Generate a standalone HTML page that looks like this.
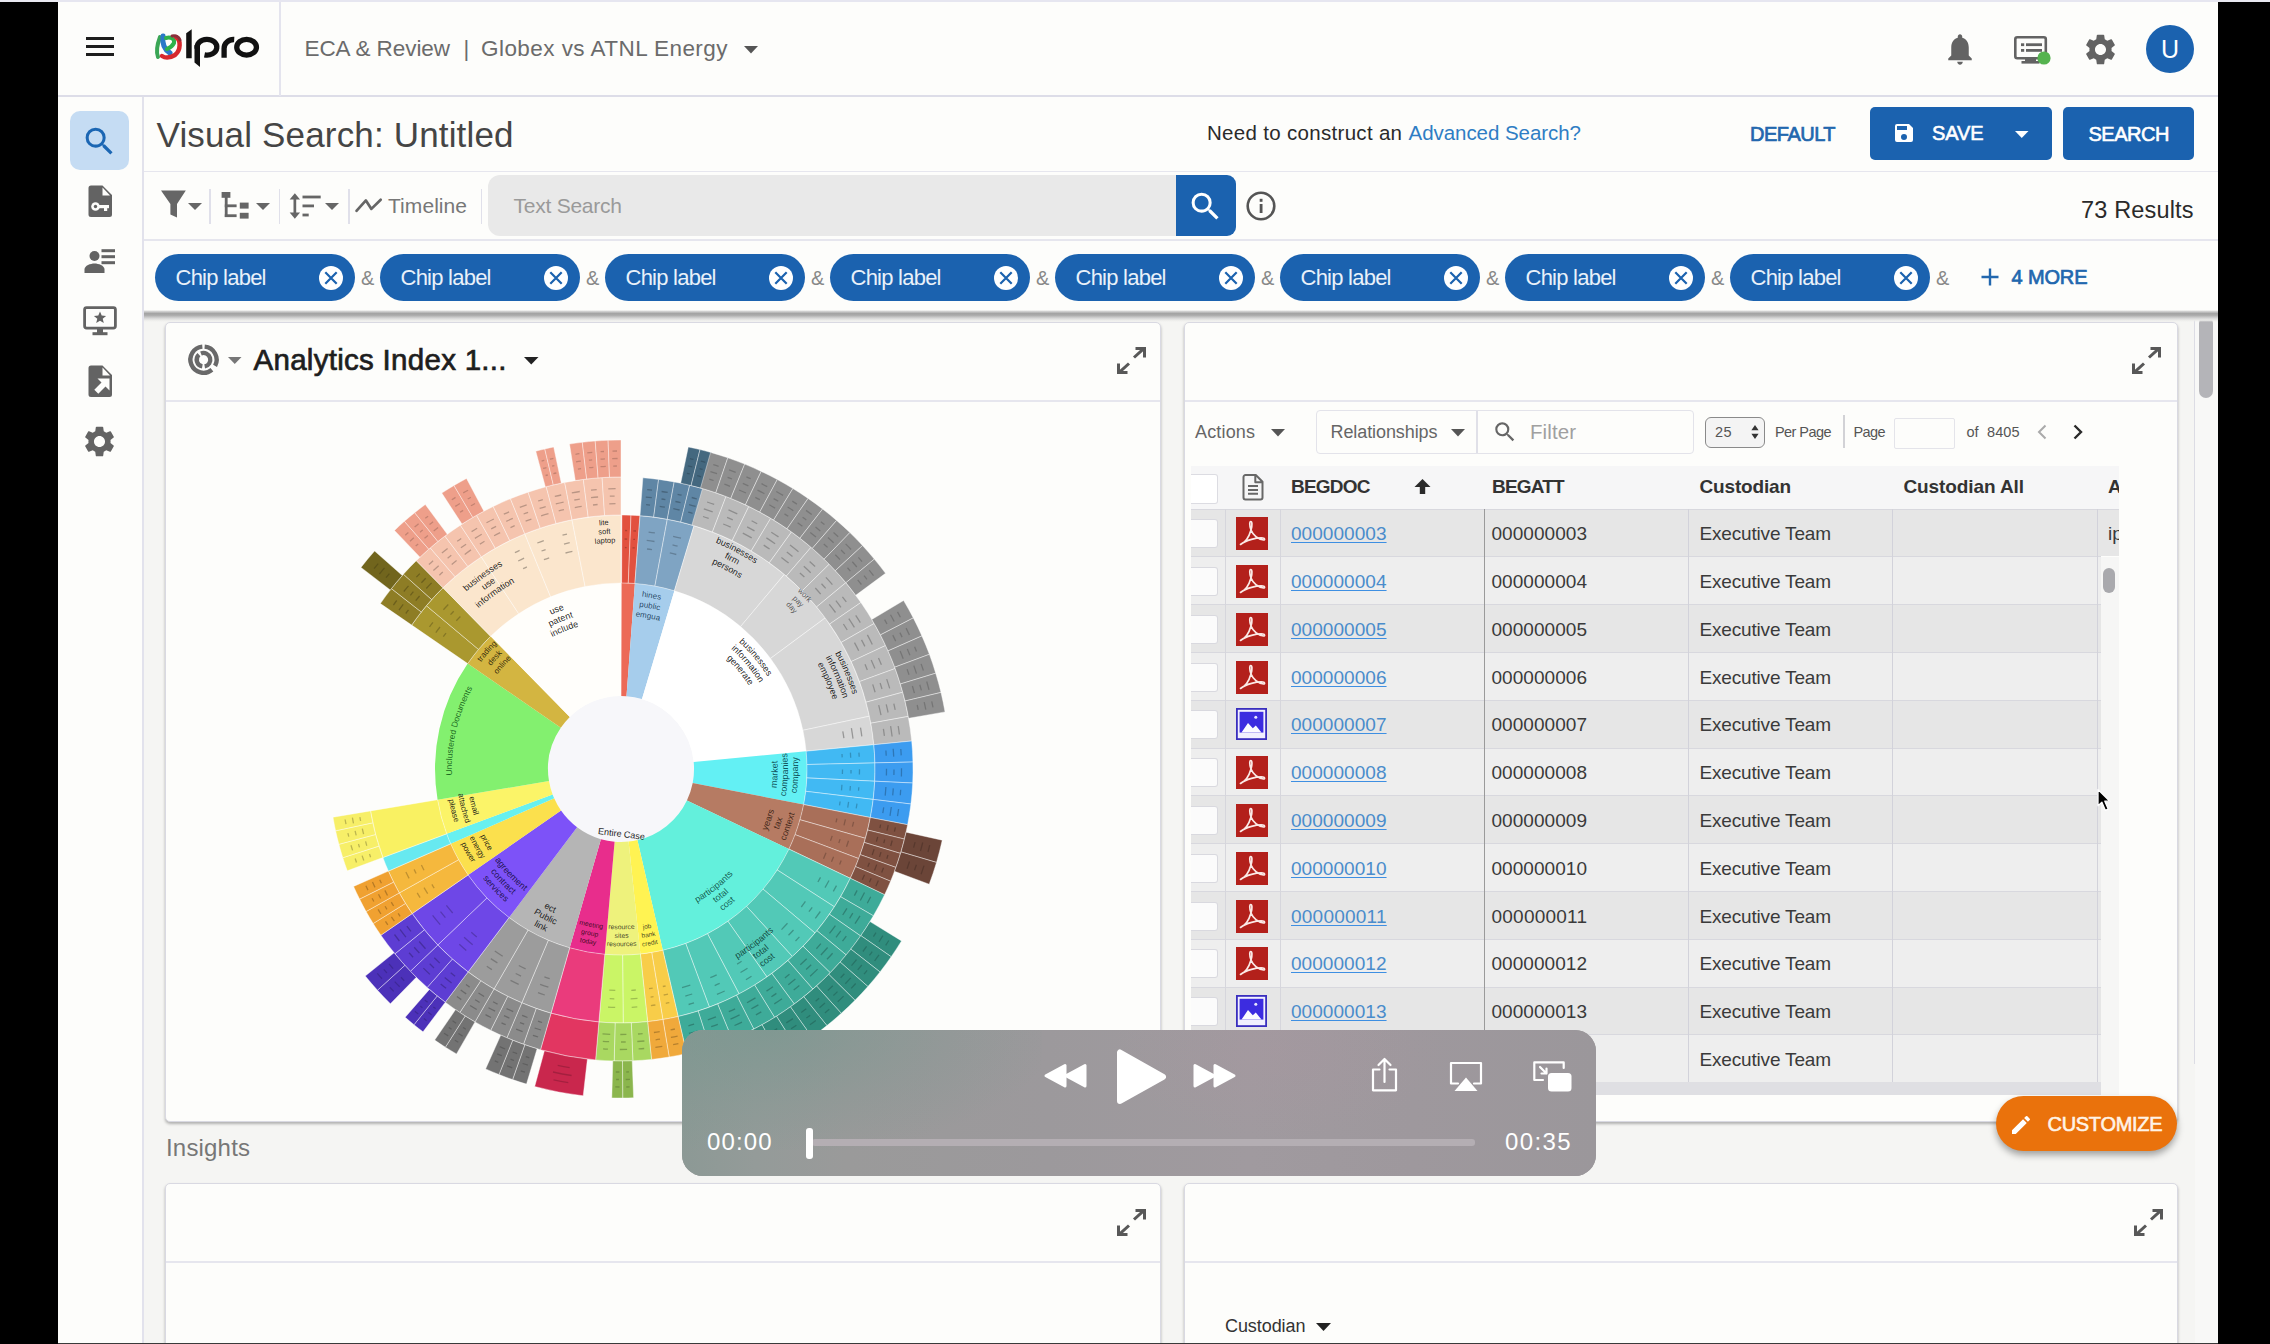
<!DOCTYPE html>
<html><head><meta charset="utf-8"><title>Visual Search</title>
<style>
html,body{margin:0;padding:0;overflow:hidden;width:2270px;height:1344px;}
body{width:2270px;height:1344px;overflow:hidden;background:#000;font-family:"Liberation Sans",sans-serif;position:relative;}
.t{position:absolute;white-space:nowrap;}
.a{position:absolute;}
svg{position:absolute;overflow:visible;}
</style></head><body>
<div id="root" style="position:absolute;left:0;top:0;width:2270px;height:1344px;overflow:hidden;background:#000">
<div class="a" style="left:0;top:0;width:2270px;height:2px;background:#e9e9f1"></div><div class="a" style="left:58px;top:0;width:2160px;height:1344px;background:#fdfdfb"></div><div class="a" style="left:58px;top:0;width:2160px;height:2px;background:#e6e6f0"></div><div class="a" style="left:143px;top:311px;width:2075px;height:1033px;background:#f5f5f3"></div><div class="a" style="left:2195px;top:311px;width:23px;height:1033px;background:#f8f8f7"></div><div class="a" style="left:2199px;top:316px;width:14px;height:82px;border-radius:7px;background:#b4b4b8"></div><div class="a" style="left:2193.700px;top:320px;width:1.500px;height:744px;background:#dcdce4"></div><div class="a" style="left:165px;top:322px;width:996px;height:800px;background:#fdfdfb;border:1px solid #d9d9e2;border-radius:5px;box-sizing:border-box;box-shadow:0 2px 3px rgba(0,0,0,.28)"></div><div class="a" style="left:166px;top:400px;width:994px;height:2px;background:#e6e6ee"></div><div class="a" style="left:1184px;top:322px;width:994px;height:800px;background:#fdfdfb;border:1px solid #d9d9e2;border-radius:5px;box-sizing:border-box;box-shadow:0 2px 3px rgba(0,0,0,.28)"></div><div class="a" style="left:1185px;top:400px;width:992px;height:2px;background:#e6e6ee"></div><div class="a" style="left:165px;top:1183px;width:996px;height:200px;background:#fdfdfb;border:1px solid #d9d9e2;border-radius:5px;box-sizing:border-box;box-shadow:0 2px 3px rgba(0,0,0,.28)"></div><div class="a" style="left:166px;top:1261px;width:994px;height:2px;background:#e6e6ee"></div><div class="a" style="left:1184px;top:1183px;width:994px;height:200px;background:#fdfdfb;border:1px solid #d9d9e2;border-radius:5px;box-sizing:border-box;box-shadow:0 2px 3px rgba(0,0,0,.28)"></div><div class="a" style="left:1185px;top:1261px;width:992px;height:2px;background:#e6e6ee"></div><svg style="left:1116.5px;top:346.5px" width="29" height="27" viewBox="0 0 29 27"><g stroke="#585858" stroke-width="3" fill="none" stroke-linecap="butt"><path d="M17 10.500 L26.500 1.800 M18.500 1.500 H27.500 V10.500"/><path d="M12 16.500 L2.500 25.200 M1.500 16.500 V25.500 H10.500"/></g></svg><svg style="left:2132.2px;top:346.5px" width="29" height="27" viewBox="0 0 29 27"><g stroke="#585858" stroke-width="3" fill="none" stroke-linecap="butt"><path d="M17 10.500 L26.500 1.800 M18.500 1.500 H27.500 V10.500"/><path d="M12 16.500 L2.500 25.200 M1.500 16.500 V25.500 H10.500"/></g></svg><svg style="left:1116.5px;top:1208.5px" width="29" height="27" viewBox="0 0 29 27"><g stroke="#585858" stroke-width="3" fill="none" stroke-linecap="butt"><path d="M17 10.500 L26.500 1.800 M18.500 1.500 H27.500 V10.500"/><path d="M12 16.500 L2.500 25.200 M1.500 16.500 V25.500 H10.500"/></g></svg><svg style="left:2133.5px;top:1208.5px" width="29" height="27" viewBox="0 0 29 27"><g stroke="#585858" stroke-width="3" fill="none" stroke-linecap="butt"><path d="M17 10.500 L26.500 1.800 M18.500 1.500 H27.500 V10.500"/><path d="M12 16.500 L2.500 25.200 M1.500 16.500 V25.500 H10.500"/></g></svg><div class="t" style="left:166.0px;top:1136.3px;font-size:24px;line-height:24px;color:#777;letter-spacing:0.185px;">Insights</div><div class="a" style="left:58px;top:95px;width:2160px;height:2px;background:#dddde8"></div><div class="a" style="left:279px;top:2px;width:2px;height:94px;background:#e4e4ee"></div><div class="a" style="left:86px;top:37px;width:28px;height:3px;background:#1d1d1d"></div><div class="a" style="left:86px;top:45px;width:28px;height:3px;background:#1d1d1d"></div><div class="a" style="left:86px;top:53px;width:28px;height:3px;background:#1d1d1d"></div><svg style="left:150px;top:24px" width="115" height="48" viewBox="150 24 115 48">
<g fill="none" stroke-linecap="round">
<path d="M160 37 C157 45 156 52 158 57" stroke="#3aa655" stroke-width="4"/>
<path d="M163 36 C162 44 165 50 170 53" stroke="#2a78c8" stroke-width="5"/>
<path d="M166 38 C170 37 175 38 174 43 C172 47 169 48 167 49" stroke="#2fb14a" stroke-width="4"/>
<path d="M176 37 C181 40 181 50 175 55 C170 58 165 58 162 56" stroke="#d6282d" stroke-width="4.5"/>
<path d="M172 36 C176 35 179 37 180 40" stroke="#8b2f3a" stroke-width="3"/>
</g>
<g fill="#111"><path d="M186.200 33.300L191.700 29.300V58.300H186.200Z"/><path d="M194.500 45V62.600L200 66.900V45Z"/></g>
<g fill="none" stroke="#111" stroke-width="5.300">
<path d="M197.250 48.500A9.850 7.900 0 1 1 204.500 54.850" stroke-linecap="butt"/>
<path d="M224.100 57.800V48.500A9.500 8.800 0 0 1 234.200 39.500" stroke-linecap="butt"/>
<ellipse cx="246.600" cy="47.200" rx="9.850" ry="7.900"/></g></svg><div class="t" style="left:304.5px;top:37.5px;font-size:22.5px;line-height:22.5px;color:#6b6b6b;letter-spacing:-0.073px;">ECA &amp; Review</div><div class="t" style="left:463.5px;top:37.8px;font-size:22px;line-height:22px;color:#6b6b6b;letter-spacing:-2.217px;">|</div><div class="t" style="left:481.0px;top:37.5px;font-size:22.5px;line-height:22.5px;color:#6b6b6b;letter-spacing:0.445px;">Globex vs ATNL Energy</div><svg style="left:744px;top:45.5px" width="14" height="7.5" viewBox="0 0 14 7.5"><path d="M0 0 H14 L7.0 7.5 Z" fill="#555"/></svg><svg style="left:1945px;top:30.600px" width="30" height="35.400" viewBox="0 0 24 26.4" preserveAspectRatio="none"><path fill="#636363" d="M12 25.2c1.2 0 2.2-1 2.2-2.2H9.8c0 1.2 1 2.2 2.2 2.2zM19 18.2V12.4c0-3.6-1.9-6.5-5.2-7.3V4.3C13.8 3.3 13 2.5 12 2.5s-1.8.8-1.8 1.8v.8C6.9 5.9 5 8.8 5 12.4v5.8L2.6 20.6v1.2h18.8v-1.2L19 18.2z"/></svg><svg style="left:2012px;top:34px" width="40" height="34" viewBox="0 0 40 34"><g fill="none" stroke="#636363" stroke-width="2.6"><rect x="3.3" y="3.3" width="30.5" height="21" rx="2"/></g>
<g fill="#636363"><rect x="13" y="24" width="11" height="4"/><rect x="9.5" y="27" width="18" height="2.6"/>
<rect x="9" y="9.300" width="3.200" height="2.800"/><rect x="14" y="9.300" width="16" height="2.800"/><rect x="9" y="15" width="3.200" height="2.800"/><rect x="14" y="15" width="16" height="2.800"/></g>
<circle cx="32" cy="24" r="6.6" fill="#55b34f"/></svg><svg style="left:2081.5px;top:31.0px" width="37" height="37" viewBox="0 0 24 24"><path fill="#636363" d="M19.14 12.94c.04-.3.06-.61.06-.94 0-.32-.02-.64-.07-.94l2.03-1.58a.49.49 0 0 0 .12-.61l-1.92-3.32a.488.488 0 0 0-.59-.22l-2.39.96c-.5-.38-1.03-.7-1.62-.94l-.36-2.54a.484.484 0 0 0-.48-.41h-3.84c-.24 0-.43.17-.47.41l-.36 2.54c-.59.24-1.13.57-1.62.94l-2.39-.96c-.22-.08-.47 0-.59.22L2.74 8.87c-.12.21-.08.47.12.61l2.03 1.58c-.05.3-.09.63-.09.94s.02.64.07.94l-2.03 1.58a.49.49 0 0 0-.12.61l1.92 3.32c.12.22.37.29.59.22l2.39-.96c.5.38 1.03.7 1.62.94l.36 2.54c.05.24.24.41.48.41h3.84c.24 0 .44-.17.47-.41l.36-2.54c.59-.24 1.13-.56 1.62-.94l2.39.96c.22.08.47 0 .59-.22l1.92-3.32c.12-.22.07-.47-.12-.61l-2.01-1.58zM12 15.6c-1.98 0-3.6-1.62-3.6-3.6s1.620-3.6 3.6-3.6 3.6 1.62 3.6 3.6-1.62 3.600-3.6 3.600z"/></svg><div class="a" style="left:2146px;top:25px;width:48px;height:48px;border-radius:50%;background:#1b62af"></div><div class="t" style="left:2161.0px;top:36.8px;font-size:25px;line-height:25px;color:#fff;letter-spacing:-0.055px;">U</div><div class="a" style="left:142px;top:97px;width:2px;height:1247px;background:#e2e2ec"></div><div class="a" style="left:70px;top:111px;width:59px;height:59px;border-radius:10px;background:#c5dcf3"></div><svg style="left:81.0px;top:122.5px" width="37" height="37" viewBox="0 0 24 24"><path fill="#1b66b3" d="M15.5 14h-.79l-.28-.27A6.471 6.471 0 0 0 16 9.5 6.5 6.500 0 1 0 9.5 16c1.61 0 3.090-.59 4.230-1.570l.270.280v.79l5 4.990L20.490 19l-4.990-5zm-6 0C7.010 14 5 11.990 5 9.500S7.010 5 9.500 5 14 7.010 14 9.500 11.990 14 9.500 14z"/></svg><svg style="left:86px;top:184px" width="28" height="34" viewBox="0 0 28 34"><path fill="#636363" d="M5 1.500h11.500L26 11v19.500a2.500 2.500 0 0 1-2.500 2.500h-18.500A2.500 2.500 0 0 1 2.500 30.500V4A2.500 2.500 0 0 1 5 1.500z"/><path fill="#fdfdfb" d="M16.500 3.500v8h7.500z"/>
<g fill="#fdfdfb"><circle cx="9.500" cy="22.500" r="4.300"/><rect x="12" y="21" width="11" height="3.200"/><rect x="18" y="23" width="3.200" height="4"/></g><circle cx="9.500" cy="22.500" r="1.700" fill="#636363"/></svg><svg style="left:84px;top:247px" width="32" height="28" viewBox="0 0 32 28"><g fill="#636363"><circle cx="10.500" cy="9" r="5"/><path d="M0.500 26v-3.500c0-4 6-6 10-6s10 2 10 6V26z"/>
<rect x="17.500" y="2.200" width="13.500" height="3"/><rect x="17.500" y="8.200" width="13.500" height="3"/><rect x="17.500" y="14.200" width="13.500" height="3"/></g></svg><svg style="left:82px;top:305px" width="36" height="32" viewBox="0 0 36 32"><rect x="2.600" y="2.600" width="30.800" height="20.500" rx="2" fill="none" stroke="#636363" stroke-width="2.800"/>
<g fill="#636363"><rect x="15" y="23" width="6" height="5"/><rect x="10.500" y="27.200" width="15" height="3"/><path d="M18 6.500l1.700 4.100 4.400.3-3.400 2.800 1.100 4.300L18 15.700 14.200 18l1.100-4.300-3.400-2.800 4.400-.3z"/></g></svg><svg style="left:86px;top:364px" width="28" height="34" viewBox="0 0 28 34"><path fill="#636363" d="M5 1.500h11.500L26 11v19.500a2.500 2.500 0 0 1-2.500 2.500h-18.500A2.500 2.500 0 0 1 2.500 30.500V4A2.500 2.500 0 0 1 5 1.500z"/><path fill="#fdfdfb" d="M16.500 3.500v8h7.500z"/>
<path fill="#fdfdfb" d="M11.500 14.500h12v12l-4-4-7.200 7.200-4-4 7.200-7.200z"/></svg><svg style="left:81.0px;top:422.5px" width="37" height="37" viewBox="0 0 24 24"><path fill="#636363" d="M19.14 12.94c.04-.3.06-.61.06-.94 0-.32-.02-.64-.07-.94l2.03-1.58a.49.49 0 0 0 .12-.61l-1.92-3.32a.488.488 0 0 0-.59-.22l-2.39.96c-.5-.38-1.03-.7-1.62-.94l-.36-2.54a.484.484 0 0 0-.48-.41h-3.84c-.24 0-.43.17-.47.41l-.36 2.54c-.59.24-1.13.57-1.62.94l-2.39-.96c-.22-.08-.47 0-.59.22L2.74 8.87c-.12.21-.08.47.12.61l2.03 1.58c-.05.3-.09.63-.09.94s.02.64.07.94l-2.03 1.58a.49.49 0 0 0-.12.61l1.92 3.32c.12.22.37.29.59.22l2.39-.96c.5.38 1.03.7 1.62.94l.36 2.54c.05.24.24.41.48.41h3.84c.24 0 .44-.17.47-.41l.36-2.54c.59-.24 1.13-.56 1.62-.94l2.39.96c.22.08.47 0 .59-.22l1.92-3.32c.12-.22.07-.47-.12-.61l-2.01-1.58zM12 15.6c-1.98 0-3.6-1.62-3.6-3.6s1.620-3.6 3.6-3.6 3.6 1.62 3.6 3.6-1.62 3.600-3.6 3.600z"/></svg><div class="a" style="left:144px;top:170.500px;width:2074px;height:1.500px;background:#e6e6ee"></div><div class="t" style="left:156.5px;top:116.9px;font-size:35px;line-height:35px;color:#454545;letter-spacing:0.163px;">Visual Search: Untitled</div><div class="t" style="left:1207.0px;top:123.0px;font-size:20.5px;line-height:20.5px;color:#2a2a2a;letter-spacing:0.308px;">Need to construct an </div><div class="t" style="left:1408.5px;top:123.0px;font-size:20.5px;line-height:20.5px;color:#2f7dc4;letter-spacing:-0.048px;">Advanced Search?</div><div class="t" style="left:1750.0px;top:123.7px;font-size:20px;line-height:20px;color:#2267ae;letter-spacing:-0.506px;-webkit-text-stroke:0.7px #2267ae;">DEFAULT</div><div class="a" style="left:1870px;top:107px;width:182px;height:53px;border-radius:5px;background:#1b62af"></div><div class="a" style="left:2063px;top:107px;width:131px;height:53px;border-radius:5px;background:#1b62af"></div><svg style="left:1892px;top:121px" width="24" height="24" viewBox="0 0 24 24"><path fill="#fff" d="M17 3H5a2 2 0 0 0-2 2v14a2 2 0 0 0 2 2h14a2 2 0 0 0 2-2V7l-4-4zm-5 16a3 3 0 1 1 0-6 3 3 0 0 1 0 6zm3-10H5V5h10v4z"/></svg><div class="t" style="left:1932.0px;top:123.2px;font-size:20px;line-height:20px;color:#fff;letter-spacing:-0.126px;-webkit-text-stroke:0.6px #fff;">SAVE</div><svg style="left:2014.5px;top:130.5px" width="13.5" height="7" viewBox="0 0 13.5 7"><path d="M0 0 H13.5 L6.75 7 Z" fill="#fff"/></svg><div class="t" style="left:2088.5px;top:123.7px;font-size:20px;line-height:20px;color:#fff;letter-spacing:-0.471px;-webkit-text-stroke:0.6px #fff;">SEARCH</div><div class="a" style="left:144px;top:239px;width:2074px;height:1.500px;background:#e6e6ee"></div><svg style="left:0;top:0" width="400" height="240" viewBox="0 0 400 240"><g fill="#666"><path d="M161 190.500h24.800l-8.800 13.400v13.700l-6.600-3v-10.700z"/><rect x="221.600" y="192" width="8.800" height="5.800"/><rect x="239.800" y="202.600" width="8.800" height="6"/><rect x="239.800" y="212.800" width="8.800" height="5.800"/><rect x="224.800" y="197" width="2.800" height="20"/><rect x="224.800" y="204.400" width="11.800" height="2.800"/><rect x="224.800" y="214.300" width="11.800" height="2.800"/><rect x="293.500" y="197" width="2.700" height="18"/><path d="M294.850 193.300l5.200 6.200h-10.400zM294.850 218.800l5.200-6.200h-10.400z"/><rect x="302.500" y="195.600" width="18.200" height="2.800"/><rect x="302.500" y="204.500" width="11.500" height="2.800"/><rect x="302.500" y="213.600" width="6.200" height="2.800"/></g><path d="M356.500 210.800L365.900 200.400L371.400 208.900L380.700 199.800" fill="none" stroke="#666" stroke-width="2.700" stroke-linejoin="round" stroke-linecap="round"/></svg><svg style="left:187.5px;top:202.8px" width="14" height="7" viewBox="0 0 14 7"><path d="M0 0 H14 L7.0 7 Z" fill="#666"/></svg><svg style="left:256.3px;top:202.8px" width="14" height="7" viewBox="0 0 14 7"><path d="M0 0 H14 L7.0 7 Z" fill="#666"/></svg><svg style="left:324.7px;top:202.8px" width="14" height="7" viewBox="0 0 14 7"><path d="M0 0 H14 L7.0 7 Z" fill="#666"/></svg><div class="a" style="left:209.3px;top:189px;width:1.500px;height:35px;background:#e0e0ea"></div><div class="a" style="left:278.7px;top:189px;width:1.500px;height:35px;background:#e0e0ea"></div><div class="a" style="left:348.1px;top:189px;width:1.500px;height:35px;background:#e0e0ea"></div><div class="a" style="left:480.8px;top:189px;width:1.500px;height:35px;background:#e0e0ea"></div><div class="t" style="left:388.0px;top:195.2px;font-size:21px;line-height:21px;color:#777;letter-spacing:0.061px;">Timeline</div><div class="a" style="left:488px;top:175px;width:700px;height:61px;border-radius:12px 0 0 12px;background:#e9e9e9"></div><div class="t" style="left:513.5px;top:195.2px;font-size:21px;line-height:21px;color:#9a9a9a;letter-spacing:-0.238px;">Text Search</div><div class="a" style="left:1176px;top:175px;width:60px;height:60.500px;border-radius:0 9px 9px 0;background:#1b62af"></div><svg style="left:1187.0px;top:187.5px" width="37" height="37" viewBox="0 0 24 24"><path fill="#fff" d="M15.5 14h-.79l-.28-.27A6.471 6.471 0 0 0 16 9.5 6.5 6.500 0 1 0 9.5 16c1.61 0 3.090-.59 4.230-1.570l.270.280v.79l5 4.990L20.490 19l-4.990-5zm-6 0C7.010 14 5 11.990 5 9.500S7.010 5 9.500 5 14 7.010 14 9.500 11.990 14 9.500 14z"/></svg><svg style="left:1245px;top:190px" width="32" height="32" viewBox="0 0 32 32"><circle cx="16" cy="16" r="13.300" fill="none" stroke="#555" stroke-width="2.600"/><rect x="14.700" y="14" width="2.800" height="9" fill="#555"/><rect x="14.700" y="8.800" width="2.800" height="3" fill="#555"/></svg><div class="t" style="left:2081.0px;top:199.0px;font-size:23.5px;line-height:23.5px;color:#2a2a2a;letter-spacing:0.164px;">73 Results</div><div class="a" style="left:155px;top:254px;width:200px;height:47px;border-radius:24px;background:#1b62af"></div><div class="t" style="left:175.5px;top:267.3px;font-size:22px;line-height:22px;color:#e9f1fa;letter-spacing:-0.759px;">Chip label</div><svg style="left:319px;top:265.500px" width="24" height="24" viewBox="0 0 24 24"><circle cx="12" cy="12" r="12" fill="#fff"/><path d="M6.300 6.300l11.400 11.400M17.700 6.300L6.300 17.700" stroke="#1b62af" stroke-width="2.200" fill="none"/></svg><div class="t" style="left:361.0px;top:267.7px;font-size:20px;line-height:20px;color:#888;letter-spacing:-0.841px;">&amp;</div><div class="a" style="left:380px;top:254px;width:200px;height:47px;border-radius:24px;background:#1b62af"></div><div class="t" style="left:400.5px;top:267.3px;font-size:22px;line-height:22px;color:#e9f1fa;letter-spacing:-0.759px;">Chip label</div><svg style="left:544px;top:265.500px" width="24" height="24" viewBox="0 0 24 24"><circle cx="12" cy="12" r="12" fill="#fff"/><path d="M6.300 6.300l11.400 11.400M17.700 6.300L6.300 17.700" stroke="#1b62af" stroke-width="2.200" fill="none"/></svg><div class="t" style="left:586.0px;top:267.7px;font-size:20px;line-height:20px;color:#888;letter-spacing:-0.841px;">&amp;</div><div class="a" style="left:605px;top:254px;width:200px;height:47px;border-radius:24px;background:#1b62af"></div><div class="t" style="left:625.5px;top:267.3px;font-size:22px;line-height:22px;color:#e9f1fa;letter-spacing:-0.759px;">Chip label</div><svg style="left:769px;top:265.500px" width="24" height="24" viewBox="0 0 24 24"><circle cx="12" cy="12" r="12" fill="#fff"/><path d="M6.300 6.300l11.400 11.400M17.700 6.300L6.300 17.700" stroke="#1b62af" stroke-width="2.200" fill="none"/></svg><div class="t" style="left:811.0px;top:267.7px;font-size:20px;line-height:20px;color:#888;letter-spacing:-0.841px;">&amp;</div><div class="a" style="left:830px;top:254px;width:200px;height:47px;border-radius:24px;background:#1b62af"></div><div class="t" style="left:850.5px;top:267.3px;font-size:22px;line-height:22px;color:#e9f1fa;letter-spacing:-0.759px;">Chip label</div><svg style="left:994px;top:265.500px" width="24" height="24" viewBox="0 0 24 24"><circle cx="12" cy="12" r="12" fill="#fff"/><path d="M6.300 6.300l11.400 11.400M17.700 6.300L6.300 17.700" stroke="#1b62af" stroke-width="2.200" fill="none"/></svg><div class="t" style="left:1036.0px;top:267.7px;font-size:20px;line-height:20px;color:#888;letter-spacing:-0.841px;">&amp;</div><div class="a" style="left:1055px;top:254px;width:200px;height:47px;border-radius:24px;background:#1b62af"></div><div class="t" style="left:1075.5px;top:267.3px;font-size:22px;line-height:22px;color:#e9f1fa;letter-spacing:-0.759px;">Chip label</div><svg style="left:1219px;top:265.500px" width="24" height="24" viewBox="0 0 24 24"><circle cx="12" cy="12" r="12" fill="#fff"/><path d="M6.300 6.300l11.400 11.400M17.700 6.300L6.300 17.700" stroke="#1b62af" stroke-width="2.200" fill="none"/></svg><div class="t" style="left:1261.0px;top:267.7px;font-size:20px;line-height:20px;color:#888;letter-spacing:-0.841px;">&amp;</div><div class="a" style="left:1280px;top:254px;width:200px;height:47px;border-radius:24px;background:#1b62af"></div><div class="t" style="left:1300.5px;top:267.3px;font-size:22px;line-height:22px;color:#e9f1fa;letter-spacing:-0.759px;">Chip label</div><svg style="left:1444px;top:265.500px" width="24" height="24" viewBox="0 0 24 24"><circle cx="12" cy="12" r="12" fill="#fff"/><path d="M6.300 6.300l11.400 11.400M17.700 6.300L6.300 17.700" stroke="#1b62af" stroke-width="2.200" fill="none"/></svg><div class="t" style="left:1486.0px;top:267.7px;font-size:20px;line-height:20px;color:#888;letter-spacing:-0.841px;">&amp;</div><div class="a" style="left:1505px;top:254px;width:200px;height:47px;border-radius:24px;background:#1b62af"></div><div class="t" style="left:1525.5px;top:267.3px;font-size:22px;line-height:22px;color:#e9f1fa;letter-spacing:-0.759px;">Chip label</div><svg style="left:1669px;top:265.500px" width="24" height="24" viewBox="0 0 24 24"><circle cx="12" cy="12" r="12" fill="#fff"/><path d="M6.300 6.300l11.400 11.400M17.700 6.300L6.300 17.700" stroke="#1b62af" stroke-width="2.200" fill="none"/></svg><div class="t" style="left:1711.0px;top:267.7px;font-size:20px;line-height:20px;color:#888;letter-spacing:-0.841px;">&amp;</div><div class="a" style="left:1730px;top:254px;width:200px;height:47px;border-radius:24px;background:#1b62af"></div><div class="t" style="left:1750.5px;top:267.3px;font-size:22px;line-height:22px;color:#e9f1fa;letter-spacing:-0.759px;">Chip label</div><svg style="left:1894px;top:265.500px" width="24" height="24" viewBox="0 0 24 24"><circle cx="12" cy="12" r="12" fill="#fff"/><path d="M6.300 6.300l11.400 11.400M17.700 6.300L6.300 17.700" stroke="#1b62af" stroke-width="2.200" fill="none"/></svg><div class="t" style="left:1936.0px;top:267.7px;font-size:20px;line-height:20px;color:#888;letter-spacing:-0.841px;">&amp;</div><svg style="left:1980px;top:267px" width="20" height="20" viewBox="0 0 20 20"><path d="M10 1.500v17M1.500 10h17" stroke="#2267ae" stroke-width="2.400"/></svg><div class="t" style="left:2011.5px;top:266.7px;font-size:20px;line-height:20px;color:#2267ae;letter-spacing:-0.136px;-webkit-text-stroke:0.7px #2267ae;">4 MORE</div><div class="a" style="left:144px;top:310px;width:2074px;height:12px;background:linear-gradient(#fdfdfb 0,#d0d0d0 12%,#a2a2a2 30%,#adadad 45%,#d6d6d6 68%,#ececea 85%,rgba(245,245,243,0) 100%)"></div><svg style="left:0;top:0" width="2270" height="1344" viewBox="0 0 2270 1344"><circle cx="621.0" cy="769.0" r="73" fill="#f7f7fa"/><path d="M621.3 696.0L621.6 583.0A186 186 0 0 1 634.9 583.5L626.5 696.2A73 73 0 0 0 621.3 696.0Z" fill="#ec6a57"/><path d="M621.6 583.0L621.9 515.0A254 254 0 0 1 631.0 515.2L628.3 583.1A186 186 0 0 0 621.6 583.0Z" fill="#e2513f" stroke="rgba(255,255,255,0.45)" stroke-width="0.9"/><path d="M628.3 583.1L631.0 515.2A254 254 0 0 1 640.0 515.7L634.9 583.5A186 186 0 0 0 628.3 583.1Z" fill="#e2513f" stroke="rgba(255,255,255,0.45)" stroke-width="0.9"/><path d="M626.5 696.2L634.9 583.5A186 186 0 0 1 674.4 590.8L642.0 699.1A73 73 0 0 0 626.5 696.2Z" fill="#a6cdec"/><path d="M634.9 583.5L640.0 515.7A254 254 0 0 1 667.3 519.3L654.9 586.1A186 186 0 0 0 634.9 583.5Z" fill="#7fa4c3" stroke="rgba(255,255,255,0.45)" stroke-width="0.9"/><path d="M654.9 586.1L667.3 519.3A254 254 0 0 1 694.0 525.7L674.4 590.8A186 186 0 0 0 654.9 586.1Z" fill="#7fa4c3" stroke="rgba(255,255,255,0.45)" stroke-width="0.9"/><path d="M640.0 515.7L642.9 477.8A292 292 0 0 1 658.6 479.4L653.7 517.1A254 254 0 0 0 640.0 515.7Z" fill="#5f86a5" stroke="rgba(255,255,255,0.45)" stroke-width="0.9"/><path d="M653.7 517.1L658.6 479.4A292 292 0 0 1 674.2 481.9L667.3 519.3A254 254 0 0 0 653.7 517.1Z" fill="#5f86a5" stroke="rgba(255,255,255,0.45)" stroke-width="0.9"/><path d="M667.3 519.3L674.2 481.9A292 292 0 0 1 689.7 485.2L680.7 522.1A254 254 0 0 0 667.3 519.3Z" fill="#5f86a5" stroke="rgba(255,255,255,0.45)" stroke-width="0.9"/><path d="M680.7 522.1L689.7 485.2A292 292 0 0 1 704.9 489.3L694.0 525.7A254 254 0 0 0 680.7 522.1Z" fill="#5f86a5" stroke="rgba(255,255,255,0.45)" stroke-width="0.9"/><path d="M680.7 483.2L688.3 447.0A329 329 0 0 1 700.0 449.6L691.1 485.6A292 292 0 0 0 680.7 483.2Z" fill="#44687f" stroke="rgba(255,255,255,0.45)" stroke-width="0.9"/><path d="M691.1 485.6L700.0 449.6A329 329 0 0 1 711.7 452.7L701.5 488.3A292 292 0 0 0 691.1 485.6Z" fill="#44687f" stroke="rgba(255,255,255,0.45)" stroke-width="0.9"/><path d="M642.0 699.1L674.4 590.8A186 186 0 0 1 806.1 751.2L693.7 762.0A73 73 0 0 0 642.0 699.1Z" fill="#ffffff"/><path d="M674.4 590.8L694.0 525.7A254 254 0 0 1 784.3 574.4L740.6 626.5A186 186 0 0 0 674.4 590.8Z" fill="#d7d7d7" stroke="rgba(255,255,255,0.45)" stroke-width="0.9"/><path d="M740.6 626.5L784.3 574.4A254 254 0 0 1 825.2 617.9L770.5 658.4A186 186 0 0 0 740.6 626.5Z" fill="#d7d7d7" stroke="rgba(255,255,255,0.45)" stroke-width="0.9"/><path d="M770.5 658.4L825.2 617.9A254 254 0 0 1 869.4 716.2L802.9 730.3A186 186 0 0 0 770.5 658.4Z" fill="#d7d7d7" stroke="rgba(255,255,255,0.45)" stroke-width="0.9"/><path d="M802.9 730.3L869.4 716.2A254 254 0 0 1 873.8 744.7L806.1 751.2A186 186 0 0 0 802.9 730.3Z" fill="#d7d7d7" stroke="rgba(255,255,255,0.45)" stroke-width="0.9"/><path d="M691.9 525.1L702.5 488.6A292 292 0 0 1 726.0 496.5L712.4 532.0A254 254 0 0 0 691.9 525.1Z" fill="#bababa" stroke="rgba(255,255,255,0.45)" stroke-width="0.9"/><path d="M712.4 532.0L726.0 496.5A292 292 0 0 1 748.8 506.5L732.2 540.6A254 254 0 0 0 712.4 532.0Z" fill="#bababa" stroke="rgba(255,255,255,0.45)" stroke-width="0.9"/><path d="M732.2 540.6L748.8 506.5A292 292 0 0 1 770.7 518.3L751.2 550.9A254 254 0 0 0 732.2 540.6Z" fill="#bababa" stroke="rgba(255,255,255,0.45)" stroke-width="0.9"/><path d="M751.2 550.9L770.7 518.3A292 292 0 0 1 791.5 531.9L769.3 562.8A254 254 0 0 0 751.2 550.9Z" fill="#bababa" stroke="rgba(255,255,255,0.45)" stroke-width="0.9"/><path d="M769.3 562.8L791.5 531.9A292 292 0 0 1 811.0 547.3L786.3 576.1A254 254 0 0 0 769.3 562.8Z" fill="#bababa" stroke="rgba(255,255,255,0.45)" stroke-width="0.9"/><path d="M786.3 576.1L811.0 547.3A292 292 0 0 1 829.2 564.2L802.1 590.9A254 254 0 0 0 786.3 576.1Z" fill="#bababa" stroke="rgba(255,255,255,0.45)" stroke-width="0.9"/><path d="M802.1 590.9L829.2 564.2A292 292 0 0 1 845.8 582.7L816.6 606.9A254 254 0 0 0 802.1 590.9Z" fill="#bababa" stroke="rgba(255,255,255,0.45)" stroke-width="0.9"/><path d="M816.6 606.9L845.8 582.7A292 292 0 0 1 860.9 602.5L829.6 624.1A254 254 0 0 0 816.6 606.9Z" fill="#bababa" stroke="rgba(255,255,255,0.45)" stroke-width="0.9"/><path d="M829.6 624.1L860.9 602.5A292 292 0 0 1 874.2 623.5L841.2 642.4A254 254 0 0 0 829.6 624.1Z" fill="#bababa" stroke="rgba(255,255,255,0.45)" stroke-width="0.9"/><path d="M841.2 642.4L874.2 623.5A292 292 0 0 1 885.6 645.5L851.2 661.6A254 254 0 0 0 841.2 642.4Z" fill="#bababa" stroke="rgba(255,255,255,0.45)" stroke-width="0.9"/><path d="M851.2 661.6L885.6 645.5A292 292 0 0 1 895.2 668.5L859.5 681.6A254 254 0 0 0 851.2 661.6Z" fill="#bababa" stroke="rgba(255,255,255,0.45)" stroke-width="0.9"/><path d="M859.5 681.6L895.2 668.5A292 292 0 0 1 902.7 692.2L866.0 702.2A254 254 0 0 0 859.5 681.6Z" fill="#bababa" stroke="rgba(255,255,255,0.45)" stroke-width="0.9"/><path d="M866.0 702.2L902.7 692.2A292 292 0 0 1 908.2 716.4L870.8 723.2A254 254 0 0 0 866.0 702.2Z" fill="#bababa" stroke="rgba(255,255,255,0.45)" stroke-width="0.9"/><path d="M870.8 723.2L908.2 716.4A292 292 0 0 1 911.7 741.0L873.8 744.7A254 254 0 0 0 870.8 723.2Z" fill="#bababa" stroke="rgba(255,255,255,0.45)" stroke-width="0.9"/><path d="M700.5 488.0L710.6 452.4A329 329 0 0 1 727.8 457.8L715.8 492.8A292 292 0 0 0 700.5 488.0Z" fill="#8f8f8f" stroke="rgba(255,255,255,0.45)" stroke-width="0.9"/><path d="M715.8 492.8L727.8 457.8A329 329 0 0 1 744.7 464.1L730.8 498.4A292 292 0 0 0 715.8 492.8Z" fill="#8f8f8f" stroke="rgba(255,255,255,0.45)" stroke-width="0.9"/><path d="M730.8 498.4L744.7 464.1A329 329 0 0 1 761.2 471.4L745.4 504.8A292 292 0 0 0 730.8 498.4Z" fill="#8f8f8f" stroke="rgba(255,255,255,0.45)" stroke-width="0.9"/><path d="M745.4 504.8L761.2 471.4A329 329 0 0 1 777.3 479.5L759.7 512.1A292 292 0 0 0 745.4 504.8Z" fill="#8f8f8f" stroke="rgba(255,255,255,0.45)" stroke-width="0.9"/><path d="M759.7 512.1L777.3 479.5A329 329 0 0 1 792.9 488.5L773.6 520.1A292 292 0 0 0 759.7 512.1Z" fill="#8f8f8f" stroke="rgba(255,255,255,0.45)" stroke-width="0.9"/><path d="M773.6 520.1L792.9 488.5A329 329 0 0 1 808.1 498.4L787.0 528.8A292 292 0 0 0 773.6 520.1Z" fill="#8f8f8f" stroke="rgba(255,255,255,0.45)" stroke-width="0.9"/><path d="M787.0 528.8L808.1 498.4A329 329 0 0 1 822.6 509.0L799.9 538.2A292 292 0 0 0 787.0 528.8Z" fill="#8f8f8f" stroke="rgba(255,255,255,0.45)" stroke-width="0.9"/><path d="M799.9 538.2L822.6 509.0A329 329 0 0 1 836.6 520.4L812.3 548.4A292 292 0 0 0 799.9 538.2Z" fill="#8f8f8f" stroke="rgba(255,255,255,0.45)" stroke-width="0.9"/><path d="M812.3 548.4L836.6 520.4A329 329 0 0 1 849.9 532.6L824.1 559.2A292 292 0 0 0 812.3 548.4Z" fill="#8f8f8f" stroke="rgba(255,255,255,0.45)" stroke-width="0.9"/><path d="M824.1 559.2L849.9 532.6A329 329 0 0 1 862.5 545.5L835.3 570.7A292 292 0 0 0 824.1 559.2Z" fill="#8f8f8f" stroke="rgba(255,255,255,0.45)" stroke-width="0.9"/><path d="M835.3 570.7L862.5 545.5A329 329 0 0 1 874.3 559.1L845.9 582.7A292 292 0 0 0 835.3 570.7Z" fill="#8f8f8f" stroke="rgba(255,255,255,0.45)" stroke-width="0.9"/><path d="M845.9 582.7L874.3 559.1A329 329 0 0 1 885.5 573.3L855.7 595.3A292 292 0 0 0 845.9 582.7Z" fill="#8f8f8f" stroke="rgba(255,255,255,0.45)" stroke-width="0.9"/><path d="M871.8 619.5L903.6 600.5A329 329 0 0 1 913.3 617.9L880.4 634.9A292 292 0 0 0 871.8 619.5Z" fill="#8f8f8f" stroke="rgba(255,255,255,0.45)" stroke-width="0.9"/><path d="M880.4 634.9L913.3 617.9A329 329 0 0 1 921.9 635.9L888.0 650.9A292 292 0 0 0 880.4 634.9Z" fill="#8f8f8f" stroke="rgba(255,255,255,0.45)" stroke-width="0.9"/><path d="M888.0 650.9L921.9 635.9A329 329 0 0 1 929.4 654.3L894.7 667.2A292 292 0 0 0 888.0 650.9Z" fill="#8f8f8f" stroke="rgba(255,255,255,0.45)" stroke-width="0.9"/><path d="M894.7 667.2L929.4 654.3A329 329 0 0 1 935.7 673.2L900.3 684.0A292 292 0 0 0 894.7 667.2Z" fill="#8f8f8f" stroke="rgba(255,255,255,0.45)" stroke-width="0.9"/><path d="M900.3 684.0L935.7 673.2A329 329 0 0 1 941.0 692.4L905.0 701.0A292 292 0 0 0 900.3 684.0Z" fill="#8f8f8f" stroke="rgba(255,255,255,0.45)" stroke-width="0.9"/><path d="M905.0 701.0L941.0 692.4A329 329 0 0 1 945.0 711.9L908.6 718.3A292 292 0 0 0 905.0 701.0Z" fill="#8f8f8f" stroke="rgba(255,255,255,0.45)" stroke-width="0.9"/><path d="M693.7 762.0L806.1 751.2A186 186 0 0 1 803.6 804.5L692.7 782.9A73 73 0 0 0 693.7 762.0Z" fill="#63f0f4"/><path d="M806.1 751.2L873.8 744.7A254 254 0 0 1 874.9 762.9L806.9 764.5A186 186 0 0 0 806.1 751.2Z" fill="#41b9f3" stroke="rgba(255,255,255,0.45)" stroke-width="0.9"/><path d="M806.9 764.5L874.9 762.9A254 254 0 0 1 874.7 781.2L806.8 777.9A186 186 0 0 0 806.9 764.5Z" fill="#41b9f3" stroke="rgba(255,255,255,0.45)" stroke-width="0.9"/><path d="M806.8 777.9L874.7 781.2A254 254 0 0 1 873.2 799.4L805.7 791.3A186 186 0 0 0 806.8 777.9Z" fill="#41b9f3" stroke="rgba(255,255,255,0.45)" stroke-width="0.9"/><path d="M805.7 791.3L873.2 799.4A254 254 0 0 1 870.3 817.5L803.6 804.5A186 186 0 0 0 805.7 791.3Z" fill="#41b9f3" stroke="rgba(255,255,255,0.45)" stroke-width="0.9"/><path d="M873.8 744.7L911.7 741.0A292 292 0 0 1 912.9 762.0L874.9 762.9A254 254 0 0 0 873.8 744.7Z" fill="#3c9cf0" stroke="rgba(255,255,255,0.45)" stroke-width="0.9"/><path d="M874.9 762.9L912.9 762.0A292 292 0 0 1 912.7 783.0L874.7 781.2A254 254 0 0 0 874.9 762.9Z" fill="#3c9cf0" stroke="rgba(255,255,255,0.45)" stroke-width="0.9"/><path d="M874.7 781.2L912.7 783.0A292 292 0 0 1 910.9 804.0L873.2 799.4A254 254 0 0 0 874.7 781.2Z" fill="#3c9cf0" stroke="rgba(255,255,255,0.45)" stroke-width="0.9"/><path d="M873.2 799.4L910.9 804.0A292 292 0 0 1 907.6 824.7L870.3 817.5A254 254 0 0 0 873.2 799.4Z" fill="#3c9cf0" stroke="rgba(255,255,255,0.45)" stroke-width="0.9"/><path d="M692.7 782.9L803.6 804.5A186 186 0 0 1 788.9 849.1L686.9 800.4A73 73 0 0 0 692.7 782.9Z" fill="#b67b63"/><path d="M803.6 804.5L870.3 817.5A254 254 0 0 1 865.4 838.3L799.9 819.7A186 186 0 0 0 803.6 804.5Z" fill="#a96f59" stroke="rgba(255,255,255,0.45)" stroke-width="0.9"/><path d="M799.9 819.7L865.4 838.3A254 254 0 0 1 858.7 858.6L795.0 834.6A186 186 0 0 0 799.9 819.7Z" fill="#a96f59" stroke="rgba(255,255,255,0.45)" stroke-width="0.9"/><path d="M795.0 834.6L858.7 858.6A254 254 0 0 1 850.3 878.3L788.9 849.1A186 186 0 0 0 795.0 834.6Z" fill="#a96f59" stroke="rgba(255,255,255,0.45)" stroke-width="0.9"/><path d="M870.3 817.5L907.6 824.7A292 292 0 0 1 904.4 839.1L867.6 830.0A254 254 0 0 0 870.3 817.5Z" fill="#7f5141" stroke="rgba(255,255,255,0.45)" stroke-width="0.9"/><path d="M867.6 830.0L904.4 839.1A292 292 0 0 1 900.5 853.4L864.2 842.4A254 254 0 0 0 867.6 830.0Z" fill="#7f5141" stroke="rgba(255,255,255,0.45)" stroke-width="0.9"/><path d="M864.2 842.4L900.5 853.4A292 292 0 0 1 895.9 867.4L860.1 854.6A254 254 0 0 0 864.2 842.4Z" fill="#7f5141" stroke="rgba(255,255,255,0.45)" stroke-width="0.9"/><path d="M860.1 854.6L895.9 867.4A292 292 0 0 1 890.6 881.2L855.5 866.6A254 254 0 0 0 860.1 854.6Z" fill="#7f5141" stroke="rgba(255,255,255,0.45)" stroke-width="0.9"/><path d="M855.5 866.6L890.6 881.2A292 292 0 0 1 884.6 894.7L850.3 878.3A254 254 0 0 0 855.5 866.6Z" fill="#7f5141" stroke="rgba(255,255,255,0.45)" stroke-width="0.9"/><path d="M906.1 832.2L942.2 840.2A329 329 0 0 1 936.5 862.4L901.0 851.9A292 292 0 0 0 906.1 832.2Z" fill="#6b4538" stroke="rgba(255,255,255,0.45)" stroke-width="0.9"/><path d="M901.0 851.9L936.5 862.4A329 329 0 0 1 929.2 884.2L894.5 871.3A292 292 0 0 0 901.0 851.9Z" fill="#6b4538" stroke="rgba(255,255,255,0.45)" stroke-width="0.9"/><path d="M686.9 800.4L788.9 849.1A186 186 0 0 1 662.8 950.2L637.4 840.1A73 73 0 0 0 686.9 800.4Z" fill="#63f0dc"/><path d="M788.9 849.1L850.3 878.3A254 254 0 0 1 834.4 906.8L777.2 869.9A186 186 0 0 0 788.9 849.1Z" fill="#52c9b7" stroke="rgba(255,255,255,0.45)" stroke-width="0.9"/><path d="M777.2 869.9L834.4 906.8A254 254 0 0 1 815.0 933.0L763.0 889.1A186 186 0 0 0 777.2 869.9Z" fill="#52c9b7" stroke="rgba(255,255,255,0.45)" stroke-width="0.9"/><path d="M763.0 889.1L815.0 933.0A254 254 0 0 1 792.4 956.5L746.5 906.3A186 186 0 0 0 763.0 889.1Z" fill="#52c9b7" stroke="rgba(255,255,255,0.45)" stroke-width="0.9"/><path d="M746.5 906.3L792.4 956.5A254 254 0 0 1 766.9 976.9L727.9 921.2A186 186 0 0 0 746.5 906.3Z" fill="#52c9b7" stroke="rgba(255,255,255,0.45)" stroke-width="0.9"/><path d="M727.9 921.2L766.9 976.9A254 254 0 0 1 739.1 993.9L707.5 933.7A186 186 0 0 0 727.9 921.2Z" fill="#52c9b7" stroke="rgba(255,255,255,0.45)" stroke-width="0.9"/><path d="M707.5 933.7L739.1 993.9A254 254 0 0 1 709.4 1007.1L685.7 943.4A186 186 0 0 0 707.5 933.7Z" fill="#52c9b7" stroke="rgba(255,255,255,0.45)" stroke-width="0.9"/><path d="M685.7 943.4L709.4 1007.1A254 254 0 0 1 678.1 1016.5L662.8 950.2A186 186 0 0 0 685.7 943.4Z" fill="#52c9b7" stroke="rgba(255,255,255,0.45)" stroke-width="0.9"/><path d="M850.3 878.3L884.6 894.7A292 292 0 0 1 873.4 915.8L840.6 896.7A254 254 0 0 0 850.3 878.3Z" fill="#3eab99" stroke="rgba(255,255,255,0.45)" stroke-width="0.9"/><path d="M840.6 896.7L873.4 915.8A292 292 0 0 1 860.6 935.9L829.4 914.2A254 254 0 0 0 840.6 896.7Z" fill="#3eab99" stroke="rgba(255,255,255,0.45)" stroke-width="0.9"/><path d="M829.4 914.2L860.6 935.9A292 292 0 0 1 846.2 954.9L816.9 930.7A254 254 0 0 0 829.4 914.2Z" fill="#3eab99" stroke="rgba(255,255,255,0.45)" stroke-width="0.9"/><path d="M816.9 930.7L846.2 954.9A292 292 0 0 1 830.2 972.7L803.0 946.2A254 254 0 0 0 816.9 930.7Z" fill="#3eab99" stroke="rgba(255,255,255,0.45)" stroke-width="0.9"/><path d="M803.0 946.2L830.2 972.7A292 292 0 0 1 812.9 989.1L787.9 960.4A254 254 0 0 0 803.0 946.2Z" fill="#3eab99" stroke="rgba(255,255,255,0.45)" stroke-width="0.9"/><path d="M787.9 960.4L812.9 989.1A292 292 0 0 1 794.3 1004.0L771.8 973.4A254 254 0 0 0 787.9 960.4Z" fill="#3eab99" stroke="rgba(255,255,255,0.45)" stroke-width="0.9"/><path d="M771.8 973.4L794.3 1004.0A292 292 0 0 1 774.6 1017.4L754.6 985.0A254 254 0 0 0 771.8 973.4Z" fill="#3eab99" stroke="rgba(255,255,255,0.45)" stroke-width="0.9"/><path d="M754.6 985.0L774.6 1017.4A292 292 0 0 1 753.8 1029.1L736.5 995.2A254 254 0 0 0 754.6 985.0Z" fill="#3eab99" stroke="rgba(255,255,255,0.45)" stroke-width="0.9"/><path d="M736.5 995.2L753.8 1029.1A292 292 0 0 1 732.1 1039.0L717.6 1003.9A254 254 0 0 0 736.5 995.2Z" fill="#3eab99" stroke="rgba(255,255,255,0.45)" stroke-width="0.9"/><path d="M717.6 1003.9L732.1 1039.0A292 292 0 0 1 709.7 1047.2L698.1 1011.0A254 254 0 0 0 717.6 1003.9Z" fill="#3eab99" stroke="rgba(255,255,255,0.45)" stroke-width="0.9"/><path d="M698.1 1011.0L709.7 1047.2A292 292 0 0 1 686.7 1053.5L678.1 1016.5A254 254 0 0 0 698.1 1011.0Z" fill="#3eab99" stroke="rgba(255,255,255,0.45)" stroke-width="0.9"/><path d="M870.0 921.6L901.5 940.9A329 329 0 0 1 891.2 956.7L860.8 935.6A292 292 0 0 0 870.0 921.6Z" fill="#308d7d" stroke="rgba(255,255,255,0.45)" stroke-width="0.9"/><path d="M860.8 935.6L891.2 956.7A329 329 0 0 1 880.0 971.9L850.8 949.1A292 292 0 0 0 860.8 935.6Z" fill="#308d7d" stroke="rgba(255,255,255,0.45)" stroke-width="0.9"/><path d="M850.8 949.1L880.0 971.9A329 329 0 0 1 867.9 986.5L840.1 962.0A292 292 0 0 0 850.8 949.1Z" fill="#308d7d" stroke="rgba(255,255,255,0.45)" stroke-width="0.9"/><path d="M840.1 962.0L867.9 986.5A329 329 0 0 1 855.0 1000.3L828.7 974.3A292 292 0 0 0 840.1 962.0Z" fill="#308d7d" stroke="rgba(255,255,255,0.45)" stroke-width="0.9"/><path d="M828.7 974.3L855.0 1000.3A329 329 0 0 1 841.3 1013.3L816.5 985.9A292 292 0 0 0 828.7 974.3Z" fill="#308d7d" stroke="rgba(255,255,255,0.45)" stroke-width="0.9"/><path d="M816.5 985.9L841.3 1013.3A329 329 0 0 1 826.9 1025.6L803.8 996.7A292 292 0 0 0 816.5 985.9Z" fill="#308d7d" stroke="rgba(255,255,255,0.45)" stroke-width="0.9"/><path d="M803.8 996.7L826.9 1025.6A329 329 0 0 1 811.9 1037.0L790.4 1006.8A292 292 0 0 0 803.8 996.7Z" fill="#308d7d" stroke="rgba(255,255,255,0.45)" stroke-width="0.9"/><path d="M790.4 1006.8L811.9 1037.0A329 329 0 0 1 796.2 1047.5L776.5 1016.2A292 292 0 0 0 790.4 1006.8Z" fill="#308d7d" stroke="rgba(255,255,255,0.45)" stroke-width="0.9"/><path d="M776.5 1016.2L796.2 1047.5A329 329 0 0 1 779.9 1057.1L762.0 1024.7A292 292 0 0 0 776.5 1016.2Z" fill="#308d7d" stroke="rgba(255,255,255,0.45)" stroke-width="0.9"/><path d="M762.0 1024.7L779.9 1057.1A329 329 0 0 1 763.1 1065.7L747.1 1032.4A292 292 0 0 0 762.0 1024.7Z" fill="#308d7d" stroke="rgba(255,255,255,0.45)" stroke-width="0.9"/><path d="M747.1 1032.4L763.1 1065.7A329 329 0 0 1 745.8 1073.4L731.8 1039.2A292 292 0 0 0 747.1 1032.4Z" fill="#308d7d" stroke="rgba(255,255,255,0.45)" stroke-width="0.9"/><path d="M731.8 1039.2L745.8 1073.4A329 329 0 0 1 728.1 1080.1L716.1 1045.1A292 292 0 0 0 731.8 1039.2Z" fill="#308d7d" stroke="rgba(255,255,255,0.45)" stroke-width="0.9"/><path d="M637.4 840.1L662.8 950.2A186 186 0 0 1 640.4 954.0L628.6 841.6A73 73 0 0 0 637.4 840.1Z" fill="#fff352"/><path d="M662.8 950.2L678.1 1016.5A254 254 0 0 1 662.9 1019.5L651.7 952.4A186 186 0 0 0 662.8 950.2Z" fill="#f8cd49" stroke="rgba(255,255,255,0.45)" stroke-width="0.9"/><path d="M651.7 952.4L662.9 1019.5A254 254 0 0 1 647.6 1021.6L640.4 954.0A186 186 0 0 0 651.7 952.4Z" fill="#f8cd49" stroke="rgba(255,255,255,0.45)" stroke-width="0.9"/><path d="M678.1 1016.5L686.7 1053.5A292 292 0 0 1 669.2 1057.0L662.9 1019.5A254 254 0 0 0 678.1 1016.5Z" fill="#f0a93b" stroke="rgba(255,255,255,0.45)" stroke-width="0.9"/><path d="M662.9 1019.5L669.2 1057.0A292 292 0 0 1 651.5 1059.4L647.6 1021.6A254 254 0 0 0 662.9 1019.5Z" fill="#f0a93b" stroke="rgba(255,255,255,0.45)" stroke-width="0.9"/><path d="M628.6 841.6L640.4 954.0A186 186 0 0 1 604.8 954.3L614.6 841.7A73 73 0 0 0 628.6 841.6Z" fill="#eef27c"/><path d="M640.4 954.0L647.6 1021.6A254 254 0 0 1 623.2 1023.0L622.6 955.0A186 186 0 0 0 640.4 954.0Z" fill="#caf566" stroke="rgba(255,255,255,0.45)" stroke-width="0.9"/><path d="M622.6 955.0L623.2 1023.0A254 254 0 0 1 598.9 1022.0L604.8 954.3A186 186 0 0 0 622.6 955.0Z" fill="#caf566" stroke="rgba(255,255,255,0.45)" stroke-width="0.9"/><path d="M647.6 1021.6L651.5 1059.4A292 292 0 0 1 632.9 1060.8L631.3 1022.8A254 254 0 0 0 647.6 1021.6Z" fill="#a9d861" stroke="rgba(255,255,255,0.45)" stroke-width="0.9"/><path d="M631.3 1022.8L632.9 1060.8A292 292 0 0 1 614.2 1060.9L615.1 1022.9A254 254 0 0 0 631.3 1022.8Z" fill="#a9d861" stroke="rgba(255,255,255,0.45)" stroke-width="0.9"/><path d="M615.1 1022.9L614.2 1060.9A292 292 0 0 1 595.6 1059.9L598.9 1022.0A254 254 0 0 0 615.1 1022.9Z" fill="#a9d861" stroke="rgba(255,255,255,0.45)" stroke-width="0.9"/><path d="M632.2 1060.8L633.6 1097.8A329 329 0 0 1 622.7 1098.0L622.5 1061.0A292 292 0 0 0 632.2 1060.8Z" fill="#8bb64d" stroke="rgba(255,255,255,0.45)" stroke-width="0.9"/><path d="M622.5 1061.0L622.7 1098.0A329 329 0 0 1 611.8 1097.9L612.8 1060.9A292 292 0 0 0 622.5 1061.0Z" fill="#8bb64d" stroke="rgba(255,255,255,0.45)" stroke-width="0.9"/><path d="M614.6 841.7L604.8 954.3A186 186 0 0 1 569.7 947.8L600.9 839.2A73 73 0 0 0 614.6 841.7Z" fill="#e82d8c"/><path d="M604.8 954.3L598.9 1022.0A254 254 0 0 1 551.0 1013.2L569.7 947.8A186 186 0 0 0 604.8 954.3Z" fill="#ea3b7c" stroke="rgba(255,255,255,0.45)" stroke-width="0.9"/><path d="M598.9 1022.0L595.6 1059.9A292 292 0 0 1 540.5 1049.7L551.0 1013.2A254 254 0 0 0 598.9 1022.0Z" fill="#e23661" stroke="rgba(255,255,255,0.45)" stroke-width="0.9"/><path d="M587.4 1059.1L583.2 1095.8A329 329 0 0 1 534.7 1086.5L544.4 1050.8A292 292 0 0 0 587.4 1059.1Z" fill="#c9274d" stroke="rgba(255,255,255,0.45)" stroke-width="0.9"/><path d="M600.9 839.2L569.7 947.8A186 186 0 0 1 509.1 917.5L577.1 827.3A73 73 0 0 0 600.9 839.2Z" fill="#b5b5b5"/><path d="M569.7 947.8L551.0 1013.2A254 254 0 0 1 521.8 1002.8L548.3 940.2A186 186 0 0 0 569.7 947.8Z" fill="#9c9c9c" stroke="rgba(255,255,255,0.45)" stroke-width="0.9"/><path d="M548.3 940.2L521.8 1002.8A254 254 0 0 1 494.0 989.0L528.0 930.1A186 186 0 0 0 548.3 940.2Z" fill="#9c9c9c" stroke="rgba(255,255,255,0.45)" stroke-width="0.9"/><path d="M528.0 930.1L494.0 989.0A254 254 0 0 1 468.1 971.9L509.1 917.5A186 186 0 0 0 528.0 930.1Z" fill="#9c9c9c" stroke="rgba(255,255,255,0.45)" stroke-width="0.9"/><path d="M551.0 1013.2L540.5 1049.7A292 292 0 0 1 523.5 1044.3L536.2 1008.4A254 254 0 0 0 551.0 1013.2Z" fill="#8b8b8b" stroke="rgba(255,255,255,0.45)" stroke-width="0.9"/><path d="M536.2 1008.4L523.5 1044.3A292 292 0 0 1 506.9 1037.8L521.8 1002.8A254 254 0 0 0 536.2 1008.4Z" fill="#8b8b8b" stroke="rgba(255,255,255,0.45)" stroke-width="0.9"/><path d="M521.8 1002.8L506.9 1037.8A292 292 0 0 1 490.7 1030.3L507.7 996.3A254 254 0 0 0 521.8 1002.8Z" fill="#8b8b8b" stroke="rgba(255,255,255,0.45)" stroke-width="0.9"/><path d="M507.7 996.3L490.7 1030.3A292 292 0 0 1 475.0 1021.9L494.0 989.0A254 254 0 0 0 507.7 996.3Z" fill="#8b8b8b" stroke="rgba(255,255,255,0.45)" stroke-width="0.9"/><path d="M494.0 989.0L475.0 1021.9A292 292 0 0 1 459.8 1012.5L480.8 980.8A254 254 0 0 0 494.0 989.0Z" fill="#8b8b8b" stroke="rgba(255,255,255,0.45)" stroke-width="0.9"/><path d="M480.8 980.8L459.8 1012.5A292 292 0 0 1 445.3 1002.2L468.1 971.9A254 254 0 0 0 480.8 980.8Z" fill="#8b8b8b" stroke="rgba(255,255,255,0.45)" stroke-width="0.9"/><path d="M537.1 1048.7L526.5 1084.1A329 329 0 0 1 512.6 1079.6L524.8 1044.7A292 292 0 0 0 537.1 1048.7Z" fill="#737373" stroke="rgba(255,255,255,0.45)" stroke-width="0.9"/><path d="M524.8 1044.7L512.6 1079.6A329 329 0 0 1 499.0 1074.5L512.7 1040.2A292 292 0 0 0 524.8 1044.7Z" fill="#737373" stroke="rgba(255,255,255,0.45)" stroke-width="0.9"/><path d="M512.7 1040.2L499.0 1074.5A329 329 0 0 1 485.6 1068.9L500.8 1035.1A292 292 0 0 0 512.7 1040.2Z" fill="#737373" stroke="rgba(255,255,255,0.45)" stroke-width="0.9"/><path d="M475.0 1021.9L456.5 1053.9A329 329 0 0 1 445.4 1047.2L465.2 1016.0A292 292 0 0 0 475.0 1021.9Z" fill="#737373" stroke="rgba(255,255,255,0.45)" stroke-width="0.9"/><path d="M465.2 1016.0L445.4 1047.2A329 329 0 0 1 434.7 1040.1L455.6 1009.6A292 292 0 0 0 465.2 1016.0Z" fill="#737373" stroke="rgba(255,255,255,0.45)" stroke-width="0.9"/><path d="M577.1 827.3L509.1 917.5A186 186 0 0 1 468.1 874.9L561.0 810.6A73 73 0 0 0 577.1 827.3Z" fill="#7d52f8"/><path d="M509.1 917.5L468.1 971.9A254 254 0 0 1 437.8 945.0L486.9 897.9A186 186 0 0 0 509.1 917.5Z" fill="#6e47e7" stroke="rgba(255,255,255,0.45)" stroke-width="0.9"/><path d="M486.9 897.9L437.8 945.0A254 254 0 0 1 412.2 913.6L468.1 874.9A186 186 0 0 0 486.9 897.9Z" fill="#6e47e7" stroke="rgba(255,255,255,0.45)" stroke-width="0.9"/><path d="M468.1 971.9L445.3 1002.2A292 292 0 0 1 427.2 987.4L452.4 959.0A254 254 0 0 0 468.1 971.9Z" fill="#5d3dd3" stroke="rgba(255,255,255,0.45)" stroke-width="0.9"/><path d="M452.4 959.0L427.2 987.4A292 292 0 0 1 410.4 971.3L437.8 945.0A254 254 0 0 0 452.4 959.0Z" fill="#5d3dd3" stroke="rgba(255,255,255,0.45)" stroke-width="0.9"/><path d="M437.8 945.0L410.4 971.3A292 292 0 0 1 395.0 953.8L424.4 929.8A254 254 0 0 0 437.8 945.0Z" fill="#5d3dd3" stroke="rgba(255,255,255,0.45)" stroke-width="0.9"/><path d="M424.4 929.8L395.0 953.8A292 292 0 0 1 380.9 935.2L412.2 913.6A254 254 0 0 0 424.4 929.8Z" fill="#5d3dd3" stroke="rgba(255,255,255,0.45)" stroke-width="0.9"/><path d="M445.3 1002.2L423.0 1031.8A329 329 0 0 1 414.0 1024.7L437.2 995.9A292 292 0 0 0 445.3 1002.2Z" fill="#4c31b9" stroke="rgba(255,255,255,0.45)" stroke-width="0.9"/><path d="M437.2 995.9L414.0 1024.7A329 329 0 0 1 405.2 1017.3L429.4 989.4A292 292 0 0 0 437.2 995.9Z" fill="#4c31b9" stroke="rgba(255,255,255,0.45)" stroke-width="0.9"/><path d="M416.3 977.3L390.4 1003.7A329 329 0 0 1 377.5 990.2L404.9 965.3A292 292 0 0 0 416.3 977.3Z" fill="#4c31b9" stroke="rgba(255,255,255,0.45)" stroke-width="0.9"/><path d="M404.9 965.3L377.5 990.2A329 329 0 0 1 365.3 976.0L394.1 952.8A292 292 0 0 0 404.9 965.3Z" fill="#4c31b9" stroke="rgba(255,255,255,0.45)" stroke-width="0.9"/><path d="M561.0 810.6L468.1 874.9A186 186 0 0 1 450.7 843.8L554.2 798.3A73 73 0 0 0 561.0 810.6Z" fill="#fbe04d"/><path d="M468.1 874.9L412.2 913.6A254 254 0 0 1 399.3 892.9L458.6 859.7A186 186 0 0 0 468.1 874.9Z" fill="#f5b83d" stroke="rgba(255,255,255,0.45)" stroke-width="0.9"/><path d="M458.6 859.7L399.3 892.9A254 254 0 0 1 388.4 871.1L450.7 843.8A186 186 0 0 0 458.6 859.7Z" fill="#f5b83d" stroke="rgba(255,255,255,0.45)" stroke-width="0.9"/><path d="M412.2 913.6L380.9 935.2A292 292 0 0 1 373.2 923.5L405.5 903.4A254 254 0 0 0 412.2 913.6Z" fill="#f0a131" stroke="rgba(255,255,255,0.45)" stroke-width="0.9"/><path d="M405.5 903.4L373.2 923.5A292 292 0 0 1 366.1 911.5L399.3 892.9A254 254 0 0 0 405.5 903.4Z" fill="#f0a131" stroke="rgba(255,255,255,0.45)" stroke-width="0.9"/><path d="M399.3 892.9L366.1 911.5A292 292 0 0 1 359.6 899.1L393.6 882.1A254 254 0 0 0 399.3 892.9Z" fill="#f0a131" stroke="rgba(255,255,255,0.45)" stroke-width="0.9"/><path d="M393.6 882.1L359.6 899.1A292 292 0 0 1 353.6 886.4L388.4 871.1A254 254 0 0 0 393.6 882.1Z" fill="#f0a131" stroke="rgba(255,255,255,0.45)" stroke-width="0.9"/><path d="M554.2 798.3L450.7 843.8A186 186 0 0 1 446.7 833.8L552.6 794.4A73 73 0 0 0 554.2 798.3Z" fill="#67f0f0"/><path d="M450.7 843.8L388.4 871.1A254 254 0 0 1 382.9 857.5L446.7 833.8A186 186 0 0 0 450.7 843.8Z" fill="#67e9f0" stroke="rgba(255,255,255,0.45)" stroke-width="0.9"/><path d="M552.6 794.4L446.7 833.8A186 186 0 0 1 437.6 799.7L549.0 781.0A73 73 0 0 0 552.6 794.4Z" fill="#fbf468"/><path d="M446.7 833.8L382.9 857.5A254 254 0 0 1 370.5 810.9L437.6 799.7A186 186 0 0 0 446.7 833.8Z" fill="#f9f162" stroke="rgba(255,255,255,0.45)" stroke-width="0.9"/><path d="M382.9 857.5L347.3 870.8A292 292 0 0 1 342.8 857.7L379.0 846.1A254 254 0 0 0 382.9 857.5Z" fill="#f7ef68" stroke="rgba(255,255,255,0.45)" stroke-width="0.9"/><path d="M379.0 846.1L342.8 857.7A292 292 0 0 1 338.9 844.3L375.6 834.5A254 254 0 0 0 379.0 846.1Z" fill="#f7ef68" stroke="rgba(255,255,255,0.45)" stroke-width="0.9"/><path d="M375.6 834.5L338.9 844.3A292 292 0 0 1 335.6 830.8L372.8 822.8A254 254 0 0 0 375.6 834.5Z" fill="#f7ef68" stroke="rgba(255,255,255,0.45)" stroke-width="0.9"/><path d="M372.8 822.8L335.6 830.8A292 292 0 0 1 333.0 817.2L370.5 810.9A254 254 0 0 0 372.8 822.8Z" fill="#f7ef68" stroke="rgba(255,255,255,0.45)" stroke-width="0.9"/><path d="M549.0 781.0L437.6 799.7A186 186 0 0 1 467.7 663.6L560.8 727.7A73 73 0 0 0 549.0 781.0Z" fill="#83f06f"/><path d="M560.8 727.7L467.7 663.6A186 186 0 0 1 490.6 636.3L569.8 716.9A73 73 0 0 0 560.8 727.7Z" fill="#d3b541"/><path d="M467.7 663.6L411.7 625.1A254 254 0 0 1 426.4 605.7L478.5 649.4A186 186 0 0 0 467.7 663.6Z" fill="#aa982f" stroke="rgba(255,255,255,0.45)" stroke-width="0.9"/><path d="M478.5 649.4L426.4 605.7A254 254 0 0 1 443.0 587.8L490.6 636.3A186 186 0 0 0 478.5 649.4Z" fill="#aa982f" stroke="rgba(255,255,255,0.45)" stroke-width="0.9"/><path d="M411.7 625.1L380.4 603.6A292 292 0 0 1 391.4 588.6L421.3 612.0A254 254 0 0 0 411.7 625.1Z" fill="#8e7d25" stroke="rgba(255,255,255,0.45)" stroke-width="0.9"/><path d="M421.3 612.0L391.4 588.6A292 292 0 0 1 403.4 574.2L431.7 599.6A254 254 0 0 0 421.3 612.0Z" fill="#8e7d25" stroke="rgba(255,255,255,0.45)" stroke-width="0.9"/><path d="M431.7 599.6L403.4 574.2A292 292 0 0 1 416.3 560.7L443.0 587.8A254 254 0 0 0 431.7 599.6Z" fill="#8e7d25" stroke="rgba(255,255,255,0.45)" stroke-width="0.9"/><path d="M390.3 590.0L361.0 567.4A329 329 0 0 1 374.6 551.0L402.3 575.5A292 292 0 0 0 390.3 590.0Z" fill="#71651d" stroke="rgba(255,255,255,0.45)" stroke-width="0.9"/><path d="M569.8 716.9L490.6 636.3A186 186 0 0 1 621.0 583.0L621.0 696.0A73 73 0 0 0 569.8 716.9Z" fill="#fffefb"/><path d="M490.6 636.3L443.0 587.8A254 254 0 0 1 481.3 556.9L518.7 613.7A186 186 0 0 0 490.6 636.3Z" fill="#fbe6cd" stroke="rgba(255,255,255,0.45)" stroke-width="0.9"/><path d="M518.7 613.7L481.3 556.9A254 254 0 0 1 524.8 533.9L550.6 596.8A186 186 0 0 0 518.7 613.7Z" fill="#fbe6cd" stroke="rgba(255,255,255,0.45)" stroke-width="0.9"/><path d="M550.6 596.8L524.8 533.9A254 254 0 0 1 572.0 519.8L585.1 586.5A186 186 0 0 0 550.6 596.8Z" fill="#fbe6cd" stroke="rgba(255,255,255,0.45)" stroke-width="0.9"/><path d="M585.1 586.5L572.0 519.8A254 254 0 0 1 621.0 515.0L621.0 583.0A186 186 0 0 0 585.1 586.5Z" fill="#fbe6cd" stroke="rgba(255,255,255,0.45)" stroke-width="0.9"/><path d="M443.0 587.8L416.3 560.7A292 292 0 0 1 430.2 547.9L455.1 576.7A254 254 0 0 0 443.0 587.8Z" fill="#f5c4ae" stroke="rgba(255,255,255,0.45)" stroke-width="0.9"/><path d="M455.1 576.7L430.2 547.9A292 292 0 0 1 444.9 536.1L467.8 566.4A254 254 0 0 0 455.1 576.7Z" fill="#f5c4ae" stroke="rgba(255,255,255,0.45)" stroke-width="0.9"/><path d="M467.8 566.4L444.9 536.1A292 292 0 0 1 460.4 525.2L481.3 556.9A254 254 0 0 0 467.8 566.4Z" fill="#f5c4ae" stroke="rgba(255,255,255,0.45)" stroke-width="0.9"/><path d="M481.3 556.9L460.4 525.2A292 292 0 0 1 476.5 515.3L495.3 548.3A254 254 0 0 0 481.3 556.9Z" fill="#f5c4ae" stroke="rgba(255,255,255,0.45)" stroke-width="0.9"/><path d="M495.3 548.3L476.5 515.3A292 292 0 0 1 493.2 506.5L509.8 540.6A254 254 0 0 0 495.3 548.3Z" fill="#f5c4ae" stroke="rgba(255,255,255,0.45)" stroke-width="0.9"/><path d="M509.8 540.6L493.2 506.5A292 292 0 0 1 510.4 498.7L524.8 533.9A254 254 0 0 0 509.8 540.6Z" fill="#f5c4ae" stroke="rgba(255,255,255,0.45)" stroke-width="0.9"/><path d="M524.8 533.9L510.4 498.7A292 292 0 0 1 528.1 492.2L540.2 528.2A254 254 0 0 0 524.8 533.9Z" fill="#f5c4ae" stroke="rgba(255,255,255,0.45)" stroke-width="0.9"/><path d="M540.2 528.2L528.1 492.2A292 292 0 0 1 546.2 486.7L556.0 523.5A254 254 0 0 0 540.2 528.2Z" fill="#f5c4ae" stroke="rgba(255,255,255,0.45)" stroke-width="0.9"/><path d="M556.0 523.5L546.2 486.7A292 292 0 0 1 564.7 482.5L572.0 519.8A254 254 0 0 0 556.0 523.5Z" fill="#f5c4ae" stroke="rgba(255,255,255,0.45)" stroke-width="0.9"/><path d="M572.0 519.8L564.7 482.5A292 292 0 0 1 583.3 479.4L588.2 517.1A254 254 0 0 0 572.0 519.8Z" fill="#f5c4ae" stroke="rgba(255,255,255,0.45)" stroke-width="0.9"/><path d="M588.2 517.1L583.3 479.4A292 292 0 0 1 602.1 477.6L604.6 515.5A254 254 0 0 0 588.2 517.1Z" fill="#f5c4ae" stroke="rgba(255,255,255,0.45)" stroke-width="0.9"/><path d="M604.6 515.5L602.1 477.6A292 292 0 0 1 621.0 477.0L621.0 515.0A254 254 0 0 0 604.6 515.5Z" fill="#f5c4ae" stroke="rgba(255,255,255,0.45)" stroke-width="0.9"/><path d="M420.0 557.2L394.5 530.4A329 329 0 0 1 404.4 521.3L428.8 549.2A292 292 0 0 0 420.0 557.2Z" fill="#ee9f8a" stroke="rgba(255,255,255,0.45)" stroke-width="0.9"/><path d="M428.8 549.2L404.4 521.3A329 329 0 0 1 414.7 512.7L437.9 541.5A292 292 0 0 0 428.8 549.2Z" fill="#ee9f8a" stroke="rgba(255,255,255,0.45)" stroke-width="0.9"/><path d="M437.9 541.5L414.7 512.7A329 329 0 0 1 425.3 504.5L447.3 534.3A292 292 0 0 0 437.9 541.5Z" fill="#ee9f8a" stroke="rgba(255,255,255,0.45)" stroke-width="0.9"/><path d="M462.0 524.1L441.8 493.1A329 329 0 0 1 454.0 485.5L472.8 517.4A292 292 0 0 0 462.0 524.1Z" fill="#ee9f8a" stroke="rgba(255,255,255,0.45)" stroke-width="0.9"/><path d="M472.8 517.4L454.0 485.5A329 329 0 0 1 466.5 478.5L483.9 511.2A292 292 0 0 0 472.8 517.4Z" fill="#ee9f8a" stroke="rgba(255,255,255,0.45)" stroke-width="0.9"/><path d="M545.4 486.9L535.8 451.2A329 329 0 0 1 544.8 449.0L553.3 484.9A292 292 0 0 0 545.4 486.9Z" fill="#ee9f8a" stroke="rgba(255,255,255,0.45)" stroke-width="0.9"/><path d="M553.3 484.9L544.8 449.0A329 329 0 0 1 553.7 447.0L561.3 483.2A292 292 0 0 0 553.3 484.9Z" fill="#ee9f8a" stroke="rgba(255,255,255,0.45)" stroke-width="0.9"/><path d="M575.3 480.6L569.5 444.1A329 329 0 0 1 582.3 442.3L586.7 479.0A292 292 0 0 0 575.3 480.6Z" fill="#ee9f8a" stroke="rgba(255,255,255,0.45)" stroke-width="0.9"/><path d="M586.7 479.0L582.3 442.3A329 329 0 0 1 595.2 441.0L598.1 477.9A292 292 0 0 0 586.7 479.0Z" fill="#ee9f8a" stroke="rgba(255,255,255,0.45)" stroke-width="0.9"/><path d="M598.1 477.9L595.2 441.0A329 329 0 0 1 608.1 440.3L609.5 477.2A292 292 0 0 0 598.1 477.9Z" fill="#ee9f8a" stroke="rgba(255,255,255,0.45)" stroke-width="0.9"/><path d="M609.5 477.2L608.1 440.3A329 329 0 0 1 621.0 440.0L621.0 477.0A292 292 0 0 0 609.5 477.2Z" fill="#ee9f8a" stroke="rgba(255,255,255,0.45)" stroke-width="0.9"/></svg><svg style="left:0;top:0;font-family:'Liberation Sans',sans-serif" width="2270" height="1344" viewBox="0 0 2270 1344"><defs><path id="lp1" d="M474.7 683.8A169.3 169.3 0 0 1 667.1 606.1"/><path id="lp2" d="M480.3 694.9A159.0 159.0 0 0 1 670.8 618.0"/><path id="lp3" d="M486.2 706.2A148.7 148.7 0 0 1 674.4 630.2"/><path id="lp4" d="M411.7 661.4A235.3 235.3 0 0 1 586.6 536.2"/><path id="lp5" d="M418.7 670.5A225.0 225.0 0 0 1 593.0 545.7"/><path id="lp6" d="M425.8 679.6A214.7 214.7 0 0 1 599.3 555.4"/><path id="lp7" d="M498.1 557.6A244.5 244.5 0 0 1 713.3 542.6"/><path id="lp8" d="M499.1 567.5A235.5 235.5 0 0 1 713.7 552.5"/><path id="lp9" d="M500.1 577.4A226.5 226.5 0 0 1 714.0 562.5"/><path id="lp10" d="M542.6 614.1A173.7 173.7 0 0 1 747.7 650.2"/><path id="lp11" d="M541.4 626.4A163.4 163.4 0 0 1 744.6 662.2"/><path id="lp12" d="M540.3 638.9A153.1 153.1 0 0 1 741.3 674.4"/><path id="lp13" d="M628.8 523.8A245.3 245.3 0 0 1 819.4 624.8"/><path id="lp14" d="M623.7 534.0A235.0 235.0 0 0 1 813.8 634.6"/><path id="lp15" d="M618.7 544.3A224.7 224.7 0 0 1 808.1 644.6"/><path id="lp16" d="M661.1 600.4A173.3 173.3 0 0 1 794.1 760.6"/><path id="lp17" d="M652.2 609.0A163.0 163.0 0 0 1 784.0 767.7"/><path id="lp18" d="M643.3 617.9A152.7 152.7 0 0 1 773.6 774.9"/><path id="lp19" d="M779.3 584.2A243.3 243.3 0 0 1 864.0 782.6"/><path id="lp20" d="M769.0 589.0A233.0 233.0 0 0 1 853.4 786.7"/><path id="lp21" d="M758.6 593.9A222.7 222.7 0 0 1 842.7 790.9"/><path id="lp22" d="M711.0 535.2A250.5 250.5 0 0 1 859.5 692.2"/><path id="lp23" d="M704.0 542.2A241.5 241.5 0 0 1 852.1 698.8"/><path id="lp24" d="M697.0 549.2A232.5 232.5 0 0 1 844.7 705.4"/><path id="lp25" d="M735.9 875.5A156.7 156.7 0 0 0 743.0 670.7"/><path id="lp26" d="M748.3 877.1A167.0 167.0 0 0 0 755.5 670.1"/><path id="lp27" d="M760.5 878.4A177.3 177.3 0 0 0 767.8 669.6"/><path id="lp28" d="M701.9 905.5A158.7 158.7 0 0 0 768.8 711.3"/><path id="lp29" d="M713.3 910.5A169.0 169.0 0 0 0 780.9 714.3"/><path id="lp30" d="M724.6 915.3A179.3 179.3 0 0 0 792.7 717.5"/><path id="lp31" d="M611.8 922.4A153.7 153.7 0 0 0 772.3 796.1"/><path id="lp32" d="M618.6 933.0A164.0 164.0 0 0 0 780.9 805.2"/><path id="lp33" d="M625.5 943.2A174.3 174.3 0 0 0 789.3 814.3"/><path id="lp34" d="M654.5 989.1A222.7 222.7 0 0 0 824.6 859.1"/><path id="lp35" d="M661.2 998.5A233.0 233.0 0 0 0 831.9 867.9"/><path id="lp36" d="M667.8 1007.7A243.3 243.3 0 0 0 839.1 876.8"/><path id="lp37" d="M474.6 830.1A158.7 158.7 0 0 0 657.6 923.4"/><path id="lp38" d="M468.0 840.7A169.0 169.0 0 0 0 652.9 934.9"/><path id="lp39" d="M461.7 851.2A179.3 179.3 0 0 0 648.1 946.2"/><path id="lp40" d="M465.5 776.0A155.7 155.7 0 0 0 606.9 924.0"/><path id="lp41" d="M455.7 783.9A166.0 166.0 0 0 0 598.7 933.5"/><path id="lp42" d="M446.2 791.7A176.3 176.3 0 0 0 590.4 942.6"/><path id="lp43" d="M468.8 735.4A155.8 155.8 0 0 0 566.9 915.1"/><path id="lp44" d="M457.3 740.4A166.1 166.1 0 0 0 556.4 922.1"/><path id="lp45" d="M446.1 745.4A176.4 176.4 0 0 0 546.1 928.7"/><path id="lp46" d="M484.1 697.8A154.3 154.3 0 0 0 533.5 896.1"/><path id="lp47" d="M471.6 699.8A164.6 164.6 0 0 0 521.6 900.3"/><path id="lp48" d="M459.5 701.8A174.9 174.9 0 0 0 509.9 904.2"/><path id="lp49" d="M496.8 871.0A160.7 160.7 0 0 0 699.0 909.6"/><path id="lp50" d="M494.0 880.9A169.2 169.2 0 0 0 697.9 919.8"/><path id="lp51" d="M491.4 890.7A177.7 177.7 0 0 0 696.7 929.8"/><path id="lp52" d="M518.5 892.3A160.3 160.3 0 0 0 724.3 891.6"/><path id="lp53" d="M517.7 902.6A168.8 168.8 0 0 0 725.2 901.9"/><path id="lp54" d="M517.0 912.7A177.3 177.3 0 0 0 726.0 911.9"/><path id="lp55" d="M539.7 908.7A161.6 161.6 0 0 0 743.0 875.1"/><path id="lp56" d="M540.6 918.9A170.1 170.1 0 0 0 745.5 885.0"/><path id="lp57" d="M541.5 929.0A178.6 178.6 0 0 0 747.8 894.8"/><path id="lp58" d="M445.5 753.7A176.2 176.2 0 0 1 583.3 596.9"/><path id="lp59" d="M455.3 761.1A165.9 165.9 0 0 1 591.9 605.7"/><path id="lp60" d="M465.4 768.6A155.6 155.6 0 0 1 600.5 614.8"/><path id="lp61" d="M467.2 839.5A169.2 169.2 0 0 1 514.6 637.5"/></defs><text font-size="9.0" fill="#111" fill-opacity="0.95" text-anchor="middle"><textPath href="#lp1" startOffset="50%">use</textPath></text><text font-size="9.0" fill="#111" fill-opacity="0.95" text-anchor="middle"><textPath href="#lp2" startOffset="50%">patent</textPath></text><text font-size="9.0" fill="#111" fill-opacity="0.95" text-anchor="middle"><textPath href="#lp3" startOffset="50%">include</textPath></text><text font-size="9.0" fill="#111" fill-opacity="0.95" text-anchor="middle"><textPath href="#lp4" startOffset="50%">businesses</textPath></text><text font-size="9.0" fill="#111" fill-opacity="0.95" text-anchor="middle"><textPath href="#lp5" startOffset="50%">use</textPath></text><text font-size="9.0" fill="#111" fill-opacity="0.95" text-anchor="middle"><textPath href="#lp6" startOffset="50%">information</textPath></text><text font-size="7.5" fill="#111" fill-opacity="0.95" text-anchor="middle"><textPath href="#lp7" startOffset="50%">lite</textPath></text><text font-size="7.5" fill="#111" fill-opacity="0.95" text-anchor="middle"><textPath href="#lp8" startOffset="50%">soft</textPath></text><text font-size="7.5" fill="#111" fill-opacity="0.95" text-anchor="middle"><textPath href="#lp9" startOffset="50%">laptop</textPath></text><text font-size="8" fill="#1d3f5c" fill-opacity="0.95" text-anchor="middle"><textPath href="#lp10" startOffset="50%">hines</textPath></text><text font-size="8" fill="#1d3f5c" fill-opacity="0.95" text-anchor="middle"><textPath href="#lp11" startOffset="50%">public</textPath></text><text font-size="8" fill="#1d3f5c" fill-opacity="0.95" text-anchor="middle"><textPath href="#lp12" startOffset="50%">emgua</textPath></text><text font-size="9.0" fill="#111" fill-opacity="0.95" text-anchor="middle"><textPath href="#lp13" startOffset="50%">businesses</textPath></text><text font-size="9.0" fill="#111" fill-opacity="0.95" text-anchor="middle"><textPath href="#lp14" startOffset="50%">firm</textPath></text><text font-size="9.0" fill="#111" fill-opacity="0.95" text-anchor="middle"><textPath href="#lp15" startOffset="50%">persons</textPath></text><text font-size="9.0" fill="#111" fill-opacity="0.95" text-anchor="middle"><textPath href="#lp16" startOffset="50%">businesses</textPath></text><text font-size="9.0" fill="#111" fill-opacity="0.95" text-anchor="middle"><textPath href="#lp17" startOffset="50%">information</textPath></text><text font-size="9.0" fill="#111" fill-opacity="0.95" text-anchor="middle"><textPath href="#lp18" startOffset="50%">generate</textPath></text><text font-size="9.0" fill="#111" fill-opacity="0.95" text-anchor="middle"><textPath href="#lp19" startOffset="50%">businesses</textPath></text><text font-size="9.0" fill="#111" fill-opacity="0.95" text-anchor="middle"><textPath href="#lp20" startOffset="50%">information</textPath></text><text font-size="9.0" fill="#111" fill-opacity="0.95" text-anchor="middle"><textPath href="#lp21" startOffset="50%">employee</textPath></text><text font-size="7.5" fill="#111" fill-opacity="0.7" text-anchor="middle"><textPath href="#lp22" startOffset="50%">work</textPath></text><text font-size="7.5" fill="#111" fill-opacity="0.7" text-anchor="middle"><textPath href="#lp23" startOffset="50%">pay</textPath></text><text font-size="7.5" fill="#111" fill-opacity="0.7" text-anchor="middle"><textPath href="#lp24" startOffset="50%">day</textPath></text><text font-size="9.0" fill="#0c4a52" fill-opacity="0.95" text-anchor="middle"><textPath href="#lp25" startOffset="50%">market</textPath></text><text font-size="9.0" fill="#0c4a52" fill-opacity="0.95" text-anchor="middle"><textPath href="#lp26" startOffset="50%">companies</textPath></text><text font-size="9.0" fill="#0c4a52" fill-opacity="0.95" text-anchor="middle"><textPath href="#lp27" startOffset="50%">company</textPath></text><text font-size="9.0" fill="#3a1f14" fill-opacity="0.95" text-anchor="middle"><textPath href="#lp28" startOffset="50%">years</textPath></text><text font-size="9.0" fill="#3a1f14" fill-opacity="0.95" text-anchor="middle"><textPath href="#lp29" startOffset="50%">tax</textPath></text><text font-size="9.0" fill="#3a1f14" fill-opacity="0.95" text-anchor="middle"><textPath href="#lp30" startOffset="50%">context</textPath></text><text font-size="9.0" fill="#0f5247" fill-opacity="0.95" text-anchor="middle"><textPath href="#lp31" startOffset="50%">participants</textPath></text><text font-size="9.0" fill="#0f5247" fill-opacity="0.95" text-anchor="middle"><textPath href="#lp32" startOffset="50%">total</textPath></text><text font-size="9.0" fill="#0f5247" fill-opacity="0.95" text-anchor="middle"><textPath href="#lp33" startOffset="50%">cost</textPath></text><text font-size="9.0" fill="#0c3d35" fill-opacity="0.95" text-anchor="middle"><textPath href="#lp34" startOffset="50%">participants</textPath></text><text font-size="9.0" fill="#0c3d35" fill-opacity="0.95" text-anchor="middle"><textPath href="#lp35" startOffset="50%">total</textPath></text><text font-size="9.0" fill="#0c3d35" fill-opacity="0.95" text-anchor="middle"><textPath href="#lp36" startOffset="50%">cost</textPath></text><text font-size="9.0" fill="#111" fill-opacity="0.95" text-anchor="middle"><textPath href="#lp37" startOffset="50%">ect</textPath></text><text font-size="9.0" fill="#111" fill-opacity="0.95" text-anchor="middle"><textPath href="#lp38" startOffset="50%">Public</textPath></text><text font-size="9.0" fill="#111" fill-opacity="0.95" text-anchor="middle"><textPath href="#lp39" startOffset="50%">link</textPath></text><text font-size="9.0" fill="#1a0f4a" fill-opacity="0.95" text-anchor="middle"><textPath href="#lp40" startOffset="50%">agreement</textPath></text><text font-size="9.0" fill="#1a0f4a" fill-opacity="0.95" text-anchor="middle"><textPath href="#lp41" startOffset="50%">contract</textPath></text><text font-size="9.0" fill="#1a0f4a" fill-opacity="0.95" text-anchor="middle"><textPath href="#lp42" startOffset="50%">services</textPath></text><text font-size="8" fill="#111" fill-opacity="0.95" text-anchor="middle"><textPath href="#lp43" startOffset="50%">price</textPath></text><text font-size="8" fill="#111" fill-opacity="0.95" text-anchor="middle"><textPath href="#lp44" startOffset="50%">energy</textPath></text><text font-size="8" fill="#111" fill-opacity="0.95" text-anchor="middle"><textPath href="#lp45" startOffset="50%">power</textPath></text><text font-size="8" fill="#111" fill-opacity="0.95" text-anchor="middle"><textPath href="#lp46" startOffset="50%">email</textPath></text><text font-size="8" fill="#111" fill-opacity="0.95" text-anchor="middle"><textPath href="#lp47" startOffset="50%">attached</textPath></text><text font-size="8" fill="#111" fill-opacity="0.95" text-anchor="middle"><textPath href="#lp48" startOffset="50%">please</textPath></text><text font-size="6.8" fill="#3a0820" fill-opacity="0.95" text-anchor="middle"><textPath href="#lp49" startOffset="50%">meeting</textPath></text><text font-size="6.8" fill="#3a0820" fill-opacity="0.95" text-anchor="middle"><textPath href="#lp50" startOffset="50%">group</textPath></text><text font-size="6.8" fill="#3a0820" fill-opacity="0.95" text-anchor="middle"><textPath href="#lp51" startOffset="50%">today</textPath></text><text font-size="6.8" fill="#111" fill-opacity="0.8" text-anchor="middle"><textPath href="#lp52" startOffset="50%">resource</textPath></text><text font-size="6.8" fill="#111" fill-opacity="0.8" text-anchor="middle"><textPath href="#lp53" startOffset="50%">sites</textPath></text><text font-size="6.8" fill="#111" fill-opacity="0.8" text-anchor="middle"><textPath href="#lp54" startOffset="50%">resources</textPath></text><text font-size="6.5" fill="#111" fill-opacity="0.8" text-anchor="middle"><textPath href="#lp55" startOffset="50%">job</textPath></text><text font-size="6.5" fill="#111" fill-opacity="0.8" text-anchor="middle"><textPath href="#lp56" startOffset="50%">bank</textPath></text><text font-size="6.5" fill="#111" fill-opacity="0.8" text-anchor="middle"><textPath href="#lp57" startOffset="50%">credit</textPath></text><text font-size="8" fill="#2a2208" fill-opacity="0.95" text-anchor="middle"><textPath href="#lp58" startOffset="50%">trading</textPath></text><text font-size="8" fill="#2a2208" fill-opacity="0.95" text-anchor="middle"><textPath href="#lp59" startOffset="50%">desk</textPath></text><text font-size="8" fill="#2a2208" fill-opacity="0.95" text-anchor="middle"><textPath href="#lp60" startOffset="50%">online</textPath></text><text font-size="8.5" fill="#14601a" fill-opacity="0.95" text-anchor="middle"><textPath href="#lp61" startOffset="50%">Unclustered Documents</textPath></text><path d="M624.9 547.5A221.5 221.5 0 0 1 626.6 547.6" stroke="#000" stroke-opacity="0.22" stroke-width="1.300" fill="none"/><path d="M624.6 539.0A230.0 230.0 0 0 1 627.2 539.1" stroke="#000" stroke-opacity="0.22" stroke-width="1.300" fill="none"/><path d="M625.1 530.5A238.5 238.5 0 0 1 627.1 530.6" stroke="#000" stroke-opacity="0.22" stroke-width="1.300" fill="none"/><path d="M632.5 547.8A221.5 221.5 0 0 1 634.8 547.9" stroke="#000" stroke-opacity="0.22" stroke-width="1.300" fill="none"/><path d="M633.3 539.3A230.0 230.0 0 0 1 635.0 539.4" stroke="#000" stroke-opacity="0.22" stroke-width="1.300" fill="none"/><path d="M633.3 530.8A238.5 238.5 0 0 1 636.0 531.0" stroke="#000" stroke-opacity="0.22" stroke-width="1.300" fill="none"/><path d="M647.0 549.0A221.5 221.5 0 0 1 652.0 549.7" stroke="#000" stroke-opacity="0.22" stroke-width="1.300" fill="none"/><path d="M646.7 540.4A230.0 230.0 0 0 1 654.5 541.5" stroke="#000" stroke-opacity="0.22" stroke-width="1.300" fill="none"/><path d="M648.6 532.1A238.5 238.5 0 0 1 654.9 532.9" stroke="#000" stroke-opacity="0.22" stroke-width="1.300" fill="none"/><path d="M669.8 552.9A221.5 221.5 0 0 1 676.3 554.5" stroke="#000" stroke-opacity="0.22" stroke-width="1.300" fill="none"/><path d="M672.5 544.8A230.0 230.0 0 0 1 677.6 546.1" stroke="#000" stroke-opacity="0.22" stroke-width="1.300" fill="none"/><path d="M673.1 536.3A238.5 238.5 0 0 1 681.0 538.2" stroke="#000" stroke-opacity="0.22" stroke-width="1.300" fill="none"/><path d="M646.1 504.7A265.5 265.5 0 0 1 650.0 505.1" stroke="#000" stroke-opacity="0.24" stroke-width="1.300" fill="none"/><path d="M645.8 497.1A273.0 273.0 0 0 1 651.8 497.7" stroke="#000" stroke-opacity="0.24" stroke-width="1.300" fill="none"/><path d="M647.2 489.7A280.5 280.5 0 0 1 652.0 490.2" stroke="#000" stroke-opacity="0.24" stroke-width="1.300" fill="none"/><path d="M659.7 506.3A265.5 265.5 0 0 1 664.9 507.1" stroke="#000" stroke-opacity="0.24" stroke-width="1.300" fill="none"/><path d="M661.5 499.0A273.0 273.0 0 0 1 665.4 499.6" stroke="#000" stroke-opacity="0.24" stroke-width="1.300" fill="none"/><path d="M661.6 491.5A280.5 280.5 0 0 1 667.7 492.4" stroke="#000" stroke-opacity="0.24" stroke-width="1.300" fill="none"/><path d="M673.3 508.7A265.5 265.5 0 0 1 679.6 510.0" stroke="#000" stroke-opacity="0.24" stroke-width="1.300" fill="none"/><path d="M675.4 501.5A273.0 273.0 0 0 1 680.6 502.6" stroke="#000" stroke-opacity="0.24" stroke-width="1.300" fill="none"/><path d="M677.6 494.3A280.5 280.5 0 0 1 681.6 495.1" stroke="#000" stroke-opacity="0.24" stroke-width="1.300" fill="none"/><path d="M688.2 512.1A265.5 265.5 0 0 1 692.6 513.3" stroke="#000" stroke-opacity="0.24" stroke-width="1.300" fill="none"/><path d="M689.1 504.6A273.0 273.0 0 0 1 695.6 506.4" stroke="#000" stroke-opacity="0.24" stroke-width="1.300" fill="none"/><path d="M691.7 497.5A280.5 280.5 0 0 1 696.9 499.0" stroke="#000" stroke-opacity="0.24" stroke-width="1.300" fill="none"/><path d="M686.9 473.3A303.0 303.0 0 0 1 689.8 473.9" stroke="#000" stroke-opacity="0.18" stroke-width="1.300" fill="none"/><path d="M687.8 465.8A310.5 310.5 0 0 1 692.3 466.8" stroke="#000" stroke-opacity="0.18" stroke-width="1.300" fill="none"/><path d="M689.9 458.6A318.0 318.0 0 0 1 693.5 459.4" stroke="#000" stroke-opacity="0.18" stroke-width="1.300" fill="none"/><path d="M697.2 475.7A303.0 303.0 0 0 1 701.1 476.8" stroke="#000" stroke-opacity="0.18" stroke-width="1.300" fill="none"/><path d="M699.6 468.6A310.5 310.5 0 0 1 702.6 469.4" stroke="#000" stroke-opacity="0.18" stroke-width="1.300" fill="none"/><path d="M700.8 461.2A318.0 318.0 0 0 1 705.3 462.4" stroke="#000" stroke-opacity="0.18" stroke-width="1.300" fill="none"/><path d="M703.0 516.5A265.5 265.5 0 0 1 708.7 518.4" stroke="#000" stroke-opacity="0.24" stroke-width="1.300" fill="none"/><path d="M703.8 508.9A273.0 273.0 0 0 1 712.7 511.9" stroke="#000" stroke-opacity="0.24" stroke-width="1.300" fill="none"/><path d="M707.1 502.0A280.5 280.5 0 0 1 714.2 504.4" stroke="#000" stroke-opacity="0.24" stroke-width="1.300" fill="none"/><path d="M723.2 524.0A265.5 265.5 0 0 1 730.7 527.2" stroke="#000" stroke-opacity="0.24" stroke-width="1.300" fill="none"/><path d="M727.1 517.4A273.0 273.0 0 0 1 732.8 519.9" stroke="#000" stroke-opacity="0.24" stroke-width="1.300" fill="none"/><path d="M728.5 509.9A280.5 280.5 0 0 1 737.3 513.8" stroke="#000" stroke-opacity="0.24" stroke-width="1.300" fill="none"/><path d="M742.8 533.1A265.5 265.5 0 0 1 751.7 537.9" stroke="#000" stroke-opacity="0.24" stroke-width="1.300" fill="none"/><path d="M747.1 526.9A273.0 273.0 0 0 1 754.5 530.9" stroke="#000" stroke-opacity="0.24" stroke-width="1.300" fill="none"/><path d="M751.6 520.7A280.5 280.5 0 0 1 757.2 523.8" stroke="#000" stroke-opacity="0.24" stroke-width="1.300" fill="none"/><path d="M763.7 545.1A265.5 265.5 0 0 1 769.6 549.0" stroke="#000" stroke-opacity="0.24" stroke-width="1.300" fill="none"/><path d="M766.4 537.9A273.0 273.0 0 0 1 775.1 543.7" stroke="#000" stroke-opacity="0.24" stroke-width="1.300" fill="none"/><path d="M771.3 532.2A280.5 280.5 0 0 1 778.5 536.9" stroke="#000" stroke-opacity="0.24" stroke-width="1.300" fill="none"/><path d="M781.4 557.4A265.5 265.5 0 0 1 788.6 563.1" stroke="#000" stroke-opacity="0.24" stroke-width="1.300" fill="none"/><path d="M786.8 552.1A273.0 273.0 0 0 1 792.5 556.6" stroke="#000" stroke-opacity="0.24" stroke-width="1.300" fill="none"/><path d="M790.0 545.1A280.5 280.5 0 0 1 798.5 551.8" stroke="#000" stroke-opacity="0.24" stroke-width="1.300" fill="none"/><path d="M799.9 572.9A265.5 265.5 0 0 1 804.4 577.0" stroke="#000" stroke-opacity="0.24" stroke-width="1.300" fill="none"/><path d="M803.8 566.3A273.0 273.0 0 0 1 810.7 572.7" stroke="#000" stroke-opacity="0.24" stroke-width="1.300" fill="none"/><path d="M809.6 561.4A280.5 280.5 0 0 1 815.1 566.5" stroke="#000" stroke-opacity="0.24" stroke-width="1.300" fill="none"/><path d="M815.3 588.0A265.5 265.5 0 0 1 820.7 594.1" stroke="#000" stroke-opacity="0.24" stroke-width="1.300" fill="none"/><path d="M821.5 583.7A273.0 273.0 0 0 1 825.7 588.4" stroke="#000" stroke-opacity="0.24" stroke-width="1.300" fill="none"/><path d="M825.9 577.4A280.5 280.5 0 0 1 832.4 584.6" stroke="#000" stroke-opacity="0.24" stroke-width="1.300" fill="none"/><path d="M829.3 604.4A265.5 265.5 0 0 1 835.5 612.5" stroke="#000" stroke-opacity="0.24" stroke-width="1.300" fill="none"/><path d="M835.9 600.6A273.0 273.0 0 0 1 840.9 607.3" stroke="#000" stroke-opacity="0.24" stroke-width="1.300" fill="none"/><path d="M842.4 596.8A280.5 280.5 0 0 1 846.3 601.9" stroke="#000" stroke-opacity="0.24" stroke-width="1.300" fill="none"/><path d="M843.4 624.0A265.5 265.5 0 0 1 847.2 630.0" stroke="#000" stroke-opacity="0.24" stroke-width="1.300" fill="none"/><path d="M848.8 618.6A273.0 273.0 0 0 1 854.4 627.4" stroke="#000" stroke-opacity="0.24" stroke-width="1.300" fill="none"/><path d="M855.7 615.4A280.5 280.5 0 0 1 860.3 622.6" stroke="#000" stroke-opacity="0.24" stroke-width="1.300" fill="none"/><path d="M854.5 642.6A265.5 265.5 0 0 1 858.7 650.7" stroke="#000" stroke-opacity="0.24" stroke-width="1.300" fill="none"/><path d="M861.5 639.9A273.0 273.0 0 0 1 864.9 646.4" stroke="#000" stroke-opacity="0.24" stroke-width="1.300" fill="none"/><path d="M867.4 634.9A280.5 280.5 0 0 1 872.3 644.5" stroke="#000" stroke-opacity="0.24" stroke-width="1.300" fill="none"/><path d="M865.0 664.3A265.5 265.5 0 0 1 867.3 669.9" stroke="#000" stroke-opacity="0.24" stroke-width="1.300" fill="none"/><path d="M871.2 659.9A273.0 273.0 0 0 1 874.9 668.6" stroke="#000" stroke-opacity="0.24" stroke-width="1.300" fill="none"/><path d="M878.5 657.9A280.5 280.5 0 0 1 881.4 664.8" stroke="#000" stroke-opacity="0.24" stroke-width="1.300" fill="none"/><path d="M872.7 684.4A265.5 265.5 0 0 1 875.1 692.2" stroke="#000" stroke-opacity="0.24" stroke-width="1.300" fill="none"/><path d="M880.1 683.0A273.0 273.0 0 0 1 882.0 689.0" stroke="#000" stroke-opacity="0.24" stroke-width="1.300" fill="none"/><path d="M886.7 679.1A280.5 280.5 0 0 1 889.7 688.4" stroke="#000" stroke-opacity="0.24" stroke-width="1.300" fill="none"/><path d="M878.7 705.1A265.5 265.5 0 0 1 881.0 715.1" stroke="#000" stroke-opacity="0.24" stroke-width="1.300" fill="none"/><path d="M886.2 704.4A273.0 273.0 0 0 1 888.1 712.5" stroke="#000" stroke-opacity="0.24" stroke-width="1.300" fill="none"/><path d="M893.8 703.6A280.5 280.5 0 0 1 895.2 709.9" stroke="#000" stroke-opacity="0.24" stroke-width="1.300" fill="none"/><path d="M883.4 728.8A265.5 265.5 0 0 1 884.4 735.9" stroke="#000" stroke-opacity="0.24" stroke-width="1.300" fill="none"/><path d="M890.6 726.1A273.0 273.0 0 0 1 892.1 736.5" stroke="#000" stroke-opacity="0.24" stroke-width="1.300" fill="none"/><path d="M898.2 726.0A280.5 280.5 0 0 1 899.4 734.5" stroke="#000" stroke-opacity="0.24" stroke-width="1.300" fill="none"/><path d="M709.3 479.2A303.0 303.0 0 0 1 713.6 480.5" stroke="#000" stroke-opacity="0.18" stroke-width="1.300" fill="none"/><path d="M710.4 471.7A310.5 310.5 0 0 1 717.0 473.7" stroke="#000" stroke-opacity="0.18" stroke-width="1.300" fill="none"/><path d="M713.3 464.7A318.0 318.0 0 0 1 718.6 466.3" stroke="#000" stroke-opacity="0.18" stroke-width="1.300" fill="none"/><path d="M724.4 484.2A303.0 303.0 0 0 1 730.0 486.3" stroke="#000" stroke-opacity="0.18" stroke-width="1.300" fill="none"/><path d="M727.6 477.4A310.5 310.5 0 0 1 732.0 479.0" stroke="#000" stroke-opacity="0.18" stroke-width="1.300" fill="none"/><path d="M729.1 469.9A318.0 318.0 0 0 1 735.7 472.4" stroke="#000" stroke-opacity="0.18" stroke-width="1.300" fill="none"/><path d="M739.1 490.0A303.0 303.0 0 0 1 746.0 493.0" stroke="#000" stroke-opacity="0.18" stroke-width="1.300" fill="none"/><path d="M742.8 483.4A310.5 310.5 0 0 1 748.4 485.8" stroke="#000" stroke-opacity="0.18" stroke-width="1.300" fill="none"/><path d="M746.4 476.8A318.0 318.0 0 0 1 750.7 478.7" stroke="#000" stroke-opacity="0.18" stroke-width="1.300" fill="none"/><path d="M755.3 497.4A303.0 303.0 0 0 1 759.9 499.7" stroke="#000" stroke-opacity="0.18" stroke-width="1.300" fill="none"/><path d="M757.5 490.1A310.5 310.5 0 0 1 764.4 493.6" stroke="#000" stroke-opacity="0.18" stroke-width="1.300" fill="none"/><path d="M761.5 483.7A318.0 318.0 0 0 1 767.2 486.6" stroke="#000" stroke-opacity="0.18" stroke-width="1.300" fill="none"/><path d="M769.3 504.8A303.0 303.0 0 0 1 775.1 508.1" stroke="#000" stroke-opacity="0.18" stroke-width="1.300" fill="none"/><path d="M773.6 498.6A310.5 310.5 0 0 1 778.3 501.3" stroke="#000" stroke-opacity="0.18" stroke-width="1.300" fill="none"/><path d="M776.3 491.5A318.0 318.0 0 0 1 783.1 495.4" stroke="#000" stroke-opacity="0.18" stroke-width="1.300" fill="none"/><path d="M784.5 513.9A303.0 303.0 0 0 1 788.3 516.3" stroke="#000" stroke-opacity="0.18" stroke-width="1.300" fill="none"/><path d="M787.6 507.0A310.5 310.5 0 0 1 793.3 510.7" stroke="#000" stroke-opacity="0.18" stroke-width="1.300" fill="none"/><path d="M792.3 501.1A318.0 318.0 0 0 1 796.9 504.1" stroke="#000" stroke-opacity="0.18" stroke-width="1.300" fill="none"/><path d="M797.6 522.8A303.0 303.0 0 0 1 802.4 526.3" stroke="#000" stroke-opacity="0.18" stroke-width="1.300" fill="none"/><path d="M802.6 517.2A310.5 310.5 0 0 1 806.3 519.9" stroke="#000" stroke-opacity="0.18" stroke-width="1.300" fill="none"/><path d="M806.0 510.4A318.0 318.0 0 0 1 811.7 514.6" stroke="#000" stroke-opacity="0.18" stroke-width="1.300" fill="none"/><path d="M810.3 532.4A303.0 303.0 0 0 1 816.0 537.1" stroke="#000" stroke-opacity="0.18" stroke-width="1.300" fill="none"/><path d="M815.5 527.0A310.5 310.5 0 0 1 820.3 530.9" stroke="#000" stroke-opacity="0.18" stroke-width="1.300" fill="none"/><path d="M820.9 521.7A318.0 318.0 0 0 1 824.5 524.6" stroke="#000" stroke-opacity="0.18" stroke-width="1.300" fill="none"/><path d="M823.8 543.9A303.0 303.0 0 0 1 827.6 547.4" stroke="#000" stroke-opacity="0.18" stroke-width="1.300" fill="none"/><path d="M827.9 537.5A310.5 310.5 0 0 1 833.6 542.7" stroke="#000" stroke-opacity="0.18" stroke-width="1.300" fill="none"/><path d="M833.5 532.5A318.0 318.0 0 0 1 838.2 536.7" stroke="#000" stroke-opacity="0.18" stroke-width="1.300" fill="none"/><path d="M835.3 554.8A303.0 303.0 0 0 1 840.0 559.6" stroke="#000" stroke-opacity="0.18" stroke-width="1.300" fill="none"/><path d="M841.1 550.0A310.5 310.5 0 0 1 844.9 553.9" stroke="#000" stroke-opacity="0.18" stroke-width="1.300" fill="none"/><path d="M845.6 543.9A318.0 318.0 0 0 1 851.1 549.5" stroke="#000" stroke-opacity="0.18" stroke-width="1.300" fill="none"/><path d="M847.5 567.7A303.0 303.0 0 0 1 850.4 571.1" stroke="#000" stroke-opacity="0.18" stroke-width="1.300" fill="none"/><path d="M852.3 561.8A310.5 310.5 0 0 1 856.8 567.0" stroke="#000" stroke-opacity="0.18" stroke-width="1.300" fill="none"/><path d="M858.4 557.4A318.0 318.0 0 0 1 862.0 561.6" stroke="#000" stroke-opacity="0.18" stroke-width="1.300" fill="none"/><path d="M857.7 579.8A303.0 303.0 0 0 1 861.4 584.5" stroke="#000" stroke-opacity="0.18" stroke-width="1.300" fill="none"/><path d="M864.0 575.7A310.5 310.5 0 0 1 866.9 579.3" stroke="#000" stroke-opacity="0.18" stroke-width="1.300" fill="none"/><path d="M869.2 570.1A318.0 318.0 0 0 1 873.5 575.7" stroke="#000" stroke-opacity="0.18" stroke-width="1.300" fill="none"/><path d="M884.6 619.6A303.0 303.0 0 0 1 887.0 624.0" stroke="#000" stroke-opacity="0.18" stroke-width="1.300" fill="none"/><path d="M890.5 614.8A310.5 310.5 0 0 1 894.2 621.5" stroke="#000" stroke-opacity="0.18" stroke-width="1.300" fill="none"/><path d="M897.5 611.9A318.0 318.0 0 0 1 900.4 617.2" stroke="#000" stroke-opacity="0.18" stroke-width="1.300" fill="none"/><path d="M892.8 635.1A303.0 303.0 0 0 1 895.7 641.1" stroke="#000" stroke-opacity="0.18" stroke-width="1.300" fill="none"/><path d="M899.9 632.6A310.5 310.5 0 0 1 902.1 637.1" stroke="#000" stroke-opacity="0.18" stroke-width="1.300" fill="none"/><path d="M906.1 628.1A318.0 318.0 0 0 1 909.4 635.1" stroke="#000" stroke-opacity="0.18" stroke-width="1.300" fill="none"/><path d="M900.1 651.0A303.0 303.0 0 0 1 903.2 658.7" stroke="#000" stroke-opacity="0.18" stroke-width="1.300" fill="none"/><path d="M907.3 648.9A310.5 310.5 0 0 1 909.9 655.2" stroke="#000" stroke-opacity="0.18" stroke-width="1.300" fill="none"/><path d="M914.6 646.8A318.0 318.0 0 0 1 916.5 651.6" stroke="#000" stroke-opacity="0.18" stroke-width="1.300" fill="none"/><path d="M907.1 669.3A303.0 303.0 0 0 1 909.0 674.8" stroke="#000" stroke-opacity="0.18" stroke-width="1.300" fill="none"/><path d="M913.8 665.6A310.5 310.5 0 0 1 916.5 673.6" stroke="#000" stroke-opacity="0.18" stroke-width="1.300" fill="none"/><path d="M921.1 663.9A318.0 318.0 0 0 1 923.4 670.5" stroke="#000" stroke-opacity="0.18" stroke-width="1.300" fill="none"/><path d="M912.4 686.0A303.0 303.0 0 0 1 914.4 693.1" stroke="#000" stroke-opacity="0.18" stroke-width="1.300" fill="none"/><path d="M919.8 684.7A310.5 310.5 0 0 1 921.4 690.4" stroke="#000" stroke-opacity="0.18" stroke-width="1.300" fill="none"/><path d="M926.7 681.5A318.0 318.0 0 0 1 929.0 689.8" stroke="#000" stroke-opacity="0.18" stroke-width="1.300" fill="none"/><path d="M917.2 705.0A303.0 303.0 0 0 1 918.2 709.8" stroke="#000" stroke-opacity="0.18" stroke-width="1.300" fill="none"/><path d="M924.2 702.1A310.5 310.5 0 0 1 925.8 709.6" stroke="#000" stroke-opacity="0.18" stroke-width="1.300" fill="none"/><path d="M931.7 701.4A318.0 318.0 0 0 1 933.0 707.3" stroke="#000" stroke-opacity="0.18" stroke-width="1.300" fill="none"/><path d="M842.0 754.0A221.5 221.5 0 0 1 842.2 757.4" stroke="#000" stroke-opacity="0.22" stroke-width="1.300" fill="none"/><path d="M850.4 752.6A230.0 230.0 0 0 1 850.7 757.8" stroke="#000" stroke-opacity="0.22" stroke-width="1.300" fill="none"/><path d="M858.9 752.6A238.5 238.5 0 0 1 859.2 756.8" stroke="#000" stroke-opacity="0.22" stroke-width="1.300" fill="none"/><path d="M842.5 769.4A221.5 221.5 0 0 1 842.4 773.9" stroke="#000" stroke-opacity="0.22" stroke-width="1.300" fill="none"/><path d="M851.0 770.0A230.0 230.0 0 0 1 851.0 773.5" stroke="#000" stroke-opacity="0.22" stroke-width="1.300" fill="none"/><path d="M859.5 769.2A238.5 238.5 0 0 1 859.4 774.6" stroke="#000" stroke-opacity="0.22" stroke-width="1.300" fill="none"/><path d="M841.9 784.8A221.5 221.5 0 0 1 841.5 790.4" stroke="#000" stroke-opacity="0.22" stroke-width="1.300" fill="none"/><path d="M850.4 786.0A230.0 230.0 0 0 1 850.0 790.6" stroke="#000" stroke-opacity="0.22" stroke-width="1.300" fill="none"/><path d="M858.8 787.2A238.5 238.5 0 0 1 858.5 790.8" stroke="#000" stroke-opacity="0.22" stroke-width="1.300" fill="none"/><path d="M840.1 801.5A221.5 221.5 0 0 1 839.5 805.3" stroke="#000" stroke-opacity="0.22" stroke-width="1.300" fill="none"/><path d="M848.6 801.9A230.0 230.0 0 0 1 847.7 807.6" stroke="#000" stroke-opacity="0.22" stroke-width="1.300" fill="none"/><path d="M857.0 803.7A238.5 238.5 0 0 1 856.2 808.4" stroke="#000" stroke-opacity="0.22" stroke-width="1.300" fill="none"/><path d="M885.9 750.5A265.5 265.5 0 0 1 886.2 755.7" stroke="#000" stroke-opacity="0.24" stroke-width="1.300" fill="none"/><path d="M893.2 748.7A273.0 273.0 0 0 1 893.7 756.6" stroke="#000" stroke-opacity="0.24" stroke-width="1.300" fill="none"/><path d="M900.8 749.0A280.5 280.5 0 0 1 901.2 755.4" stroke="#000" stroke-opacity="0.24" stroke-width="1.300" fill="none"/><path d="M886.5 768.7A265.5 265.5 0 0 1 886.4 775.6" stroke="#000" stroke-opacity="0.24" stroke-width="1.300" fill="none"/><path d="M894.0 769.6A273.0 273.0 0 0 1 893.9 774.9" stroke="#000" stroke-opacity="0.24" stroke-width="1.300" fill="none"/><path d="M901.5 768.3A280.5 280.5 0 0 1 901.4 776.5" stroke="#000" stroke-opacity="0.24" stroke-width="1.300" fill="none"/><path d="M885.9 787.0A265.5 265.5 0 0 1 885.2 795.6" stroke="#000" stroke-opacity="0.24" stroke-width="1.300" fill="none"/><path d="M893.3 788.4A273.0 273.0 0 0 1 892.7 795.4" stroke="#000" stroke-opacity="0.24" stroke-width="1.300" fill="none"/><path d="M900.7 789.8A280.5 280.5 0 0 1 900.3 795.2" stroke="#000" stroke-opacity="0.24" stroke-width="1.300" fill="none"/><path d="M883.7 807.3A265.5 265.5 0 0 1 882.8 813.2" stroke="#000" stroke-opacity="0.24" stroke-width="1.300" fill="none"/><path d="M891.3 807.0A273.0 273.0 0 0 1 890.0 815.8" stroke="#000" stroke-opacity="0.24" stroke-width="1.300" fill="none"/><path d="M898.6 809.0A280.5 280.5 0 0 1 897.5 816.2" stroke="#000" stroke-opacity="0.24" stroke-width="1.300" fill="none"/><path d="M836.9 818.5A221.5 221.5 0 0 1 836.0 822.3" stroke="#000" stroke-opacity="0.22" stroke-width="1.300" fill="none"/><path d="M845.4 819.4A230.0 230.0 0 0 1 844.0 825.3" stroke="#000" stroke-opacity="0.22" stroke-width="1.300" fill="none"/><path d="M853.6 821.9A238.5 238.5 0 0 1 852.4 826.7" stroke="#000" stroke-opacity="0.22" stroke-width="1.300" fill="none"/><path d="M832.2 835.9A221.5 221.5 0 0 1 830.5 840.8" stroke="#000" stroke-opacity="0.22" stroke-width="1.300" fill="none"/><path d="M840.1 839.1A230.0 230.0 0 0 1 838.8 843.0" stroke="#000" stroke-opacity="0.22" stroke-width="1.300" fill="none"/><path d="M848.5 840.7A238.5 238.5 0 0 1 846.5 846.7" stroke="#000" stroke-opacity="0.22" stroke-width="1.300" fill="none"/><path d="M826.0 852.8A221.5 221.5 0 0 1 823.5 858.8" stroke="#000" stroke-opacity="0.22" stroke-width="1.300" fill="none"/><path d="M833.6 856.7A230.0 230.0 0 0 1 831.5 861.7" stroke="#000" stroke-opacity="0.22" stroke-width="1.300" fill="none"/><path d="M841.2 860.6A238.5 238.5 0 0 1 839.6 864.4" stroke="#000" stroke-opacity="0.22" stroke-width="1.300" fill="none"/><path d="M880.6 824.5A265.5 265.5 0 0 1 879.9 828.0" stroke="#000" stroke-opacity="0.24" stroke-width="1.300" fill="none"/><path d="M888.2 825.1A273.0 273.0 0 0 1 887.0 830.6" stroke="#000" stroke-opacity="0.24" stroke-width="1.300" fill="none"/><path d="M895.4 827.3A280.5 280.5 0 0 1 894.4 831.7" stroke="#000" stroke-opacity="0.24" stroke-width="1.300" fill="none"/><path d="M877.7 836.9A265.5 265.5 0 0 1 876.4 841.6" stroke="#000" stroke-opacity="0.24" stroke-width="1.300" fill="none"/><path d="M884.7 839.5A273.0 273.0 0 0 1 883.8 843.1" stroke="#000" stroke-opacity="0.24" stroke-width="1.300" fill="none"/><path d="M892.2 840.5A280.5 280.5 0 0 1 890.7 846.0" stroke="#000" stroke-opacity="0.24" stroke-width="1.300" fill="none"/><path d="M874.1 849.3A265.5 265.5 0 0 1 872.2 855.0" stroke="#000" stroke-opacity="0.24" stroke-width="1.300" fill="none"/><path d="M881.0 852.1A273.0 273.0 0 0 1 879.5 856.9" stroke="#000" stroke-opacity="0.24" stroke-width="1.300" fill="none"/><path d="M888.0 855.0A280.5 280.5 0 0 1 886.8 858.7" stroke="#000" stroke-opacity="0.24" stroke-width="1.300" fill="none"/><path d="M869.4 862.8A265.5 265.5 0 0 1 867.8 866.8" stroke="#000" stroke-opacity="0.24" stroke-width="1.300" fill="none"/><path d="M876.7 864.6A273.0 273.0 0 0 1 874.5 870.4" stroke="#000" stroke-opacity="0.24" stroke-width="1.300" fill="none"/><path d="M883.5 867.8A280.5 280.5 0 0 1 881.7 872.6" stroke="#000" stroke-opacity="0.24" stroke-width="1.300" fill="none"/><path d="M864.5 874.7A265.5 265.5 0 0 1 862.3 879.7" stroke="#000" stroke-opacity="0.24" stroke-width="1.300" fill="none"/><path d="M871.2 878.3A273.0 273.0 0 0 1 869.4 882.2" stroke="#000" stroke-opacity="0.24" stroke-width="1.300" fill="none"/><path d="M878.4 880.4A280.5 280.5 0 0 1 875.8 886.2" stroke="#000" stroke-opacity="0.24" stroke-width="1.300" fill="none"/><path d="M915.1 842.1A303.0 303.0 0 0 1 913.6 847.6" stroke="#000" stroke-opacity="0.18" stroke-width="1.300" fill="none"/><path d="M922.7 842.5A310.5 310.5 0 0 1 920.5 851.0" stroke="#000" stroke-opacity="0.18" stroke-width="1.300" fill="none"/><path d="M929.7 845.2A318.0 318.0 0 0 1 928.0 852.0" stroke="#000" stroke-opacity="0.18" stroke-width="1.300" fill="none"/><path d="M909.5 861.5A303.0 303.0 0 0 1 907.1 868.7" stroke="#000" stroke-opacity="0.18" stroke-width="1.300" fill="none"/><path d="M916.4 864.7A310.5 310.5 0 0 1 914.5 870.3" stroke="#000" stroke-opacity="0.18" stroke-width="1.300" fill="none"/><path d="M924.0 865.6A318.0 318.0 0 0 1 921.1 874.2" stroke="#000" stroke-opacity="0.18" stroke-width="1.300" fill="none"/><path d="M857.1 890.4A265.5 265.5 0 0 1 854.4 895.6" stroke="#000" stroke-opacity="0.24" stroke-width="1.300" fill="none"/><path d="M864.5 892.5A273.0 273.0 0 0 1 860.3 900.5" stroke="#000" stroke-opacity="0.24" stroke-width="1.300" fill="none"/><path d="M870.7 896.8A280.5 280.5 0 0 1 867.3 903.2" stroke="#000" stroke-opacity="0.24" stroke-width="1.300" fill="none"/><path d="M846.9 908.4A265.5 265.5 0 0 1 842.7 915.0" stroke="#000" stroke-opacity="0.24" stroke-width="1.300" fill="none"/><path d="M852.8 913.2A273.0 273.0 0 0 1 849.6 918.3" stroke="#000" stroke-opacity="0.24" stroke-width="1.300" fill="none"/><path d="M860.0 915.9A280.5 280.5 0 0 1 855.0 923.7" stroke="#000" stroke-opacity="0.24" stroke-width="1.300" fill="none"/><path d="M835.4 925.6A265.5 265.5 0 0 1 829.5 933.4" stroke="#000" stroke-opacity="0.24" stroke-width="1.300" fill="none"/><path d="M840.8 930.9A273.0 273.0 0 0 1 836.0 937.3" stroke="#000" stroke-opacity="0.24" stroke-width="1.300" fill="none"/><path d="M846.3 936.1A280.5 280.5 0 0 1 842.5 941.1" stroke="#000" stroke-opacity="0.24" stroke-width="1.300" fill="none"/><path d="M820.9 943.7A265.5 265.5 0 0 1 816.4 948.8" stroke="#000" stroke-opacity="0.24" stroke-width="1.300" fill="none"/><path d="M827.6 947.5A273.0 273.0 0 0 1 820.9 955.0" stroke="#000" stroke-opacity="0.24" stroke-width="1.300" fill="none"/><path d="M832.6 953.2A280.5 280.5 0 0 1 827.0 959.3" stroke="#000" stroke-opacity="0.24" stroke-width="1.300" fill="none"/><path d="M806.7 958.8A265.5 265.5 0 0 1 800.3 964.8" stroke="#000" stroke-opacity="0.24" stroke-width="1.300" fill="none"/><path d="M811.2 964.8A273.0 273.0 0 0 1 806.1 969.6" stroke="#000" stroke-opacity="0.24" stroke-width="1.300" fill="none"/><path d="M817.6 969.1A280.5 280.5 0 0 1 810.1 976.2" stroke="#000" stroke-opacity="0.24" stroke-width="1.300" fill="none"/><path d="M789.5 974.2A265.5 265.5 0 0 1 784.9 977.9" stroke="#000" stroke-opacity="0.24" stroke-width="1.300" fill="none"/><path d="M795.4 979.1A273.0 273.0 0 0 1 788.3 984.7" stroke="#000" stroke-opacity="0.24" stroke-width="1.300" fill="none"/><path d="M799.4 985.5A280.5 280.5 0 0 1 793.7 990.0" stroke="#000" stroke-opacity="0.24" stroke-width="1.300" fill="none"/><path d="M772.9 986.7A265.5 265.5 0 0 1 766.5 991.1" stroke="#000" stroke-opacity="0.24" stroke-width="1.300" fill="none"/><path d="M776.4 993.4A273.0 273.0 0 0 1 771.4 996.8" stroke="#000" stroke-opacity="0.24" stroke-width="1.300" fill="none"/><path d="M782.0 998.7A280.5 280.5 0 0 1 774.3 1003.9" stroke="#000" stroke-opacity="0.24" stroke-width="1.300" fill="none"/><path d="M755.5 997.9A265.5 265.5 0 0 1 747.0 1002.7" stroke="#000" stroke-opacity="0.24" stroke-width="1.300" fill="none"/><path d="M758.4 1004.9A273.0 273.0 0 0 1 751.4 1008.8" stroke="#000" stroke-opacity="0.24" stroke-width="1.300" fill="none"/><path d="M761.3 1011.9A280.5 280.5 0 0 1 755.9 1014.9" stroke="#000" stroke-opacity="0.24" stroke-width="1.300" fill="none"/><path d="M735.1 1008.8A265.5 265.5 0 0 1 728.8 1011.6" stroke="#000" stroke-opacity="0.24" stroke-width="1.300" fill="none"/><path d="M739.6 1014.9A273.0 273.0 0 0 1 730.5 1019.1" stroke="#000" stroke-opacity="0.24" stroke-width="1.300" fill="none"/><path d="M742.0 1022.1A280.5 280.5 0 0 1 734.5 1025.5" stroke="#000" stroke-opacity="0.24" stroke-width="1.300" fill="none"/><path d="M716.0 1016.9A265.5 265.5 0 0 1 707.8 1019.9" stroke="#000" stroke-opacity="0.24" stroke-width="1.300" fill="none"/><path d="M717.8 1024.3A273.0 273.0 0 0 1 711.2 1026.7" stroke="#000" stroke-opacity="0.24" stroke-width="1.300" fill="none"/><path d="M721.9 1030.7A280.5 280.5 0 0 1 712.2 1034.3" stroke="#000" stroke-opacity="0.24" stroke-width="1.300" fill="none"/><path d="M694.1 1024.2A265.5 265.5 0 0 1 688.4 1025.8" stroke="#000" stroke-opacity="0.24" stroke-width="1.300" fill="none"/><path d="M697.6 1031.0A273.0 273.0 0 0 1 688.9 1033.4" stroke="#000" stroke-opacity="0.24" stroke-width="1.300" fill="none"/><path d="M698.7 1038.5A280.5 280.5 0 0 1 691.7 1040.4" stroke="#000" stroke-opacity="0.24" stroke-width="1.300" fill="none"/><path d="M876.0 932.7A303.0 303.0 0 0 1 873.4 936.6" stroke="#000" stroke-opacity="0.18" stroke-width="1.300" fill="none"/><path d="M882.9 935.7A310.5 310.5 0 0 1 879.0 941.8" stroke="#000" stroke-opacity="0.18" stroke-width="1.300" fill="none"/><path d="M888.8 940.5A318.0 318.0 0 0 1 885.7 945.3" stroke="#000" stroke-opacity="0.18" stroke-width="1.300" fill="none"/><path d="M866.6 946.4A303.0 303.0 0 0 1 862.9 951.5" stroke="#000" stroke-opacity="0.18" stroke-width="1.300" fill="none"/><path d="M872.2 951.5A310.5 310.5 0 0 1 869.4 955.4" stroke="#000" stroke-opacity="0.18" stroke-width="1.300" fill="none"/><path d="M879.0 954.9A318.0 318.0 0 0 1 874.6 960.8" stroke="#000" stroke-opacity="0.18" stroke-width="1.300" fill="none"/><path d="M856.5 959.6A303.0 303.0 0 0 1 851.5 965.7" stroke="#000" stroke-opacity="0.18" stroke-width="1.300" fill="none"/><path d="M861.8 965.0A310.5 310.5 0 0 1 857.7 969.9" stroke="#000" stroke-opacity="0.18" stroke-width="1.300" fill="none"/><path d="M867.1 970.3A318.0 318.0 0 0 1 864.0 974.1" stroke="#000" stroke-opacity="0.18" stroke-width="1.300" fill="none"/><path d="M844.4 973.7A303.0 303.0 0 0 1 840.6 977.7" stroke="#000" stroke-opacity="0.18" stroke-width="1.300" fill="none"/><path d="M850.7 977.9A310.5 310.5 0 0 1 845.3 983.8" stroke="#000" stroke-opacity="0.18" stroke-width="1.300" fill="none"/><path d="M855.7 983.5A318.0 318.0 0 0 1 851.2 988.4" stroke="#000" stroke-opacity="0.18" stroke-width="1.300" fill="none"/><path d="M832.8 985.7A303.0 303.0 0 0 1 827.7 990.5" stroke="#000" stroke-opacity="0.18" stroke-width="1.300" fill="none"/><path d="M837.5 991.6A310.5 310.5 0 0 1 833.4 995.5" stroke="#000" stroke-opacity="0.18" stroke-width="1.300" fill="none"/><path d="M843.6 996.1A318.0 318.0 0 0 1 837.7 1001.8" stroke="#000" stroke-opacity="0.18" stroke-width="1.300" fill="none"/><path d="M819.1 998.2A303.0 303.0 0 0 1 815.6 1001.3" stroke="#000" stroke-opacity="0.18" stroke-width="1.300" fill="none"/><path d="M825.0 1003.1A310.5 310.5 0 0 1 819.5 1007.8" stroke="#000" stroke-opacity="0.18" stroke-width="1.300" fill="none"/><path d="M829.3 1009.3A318.0 318.0 0 0 1 824.9 1013.0" stroke="#000" stroke-opacity="0.18" stroke-width="1.300" fill="none"/><path d="M806.3 1008.8A303.0 303.0 0 0 1 801.3 1012.5" stroke="#000" stroke-opacity="0.18" stroke-width="1.300" fill="none"/><path d="M810.2 1015.2A310.5 310.5 0 0 1 806.4 1018.1" stroke="#000" stroke-opacity="0.18" stroke-width="1.300" fill="none"/><path d="M815.8 1020.4A318.0 318.0 0 0 1 809.9 1024.8" stroke="#000" stroke-opacity="0.18" stroke-width="1.300" fill="none"/><path d="M792.9 1018.6A303.0 303.0 0 0 1 786.3 1022.9" stroke="#000" stroke-opacity="0.18" stroke-width="1.300" fill="none"/><path d="M796.4 1025.2A310.5 310.5 0 0 1 791.1 1028.8" stroke="#000" stroke-opacity="0.18" stroke-width="1.300" fill="none"/><path d="M800.0 1031.8A318.0 318.0 0 0 1 795.9 1034.6" stroke="#000" stroke-opacity="0.18" stroke-width="1.300" fill="none"/><path d="M777.2 1028.6A303.0 303.0 0 0 1 772.5 1031.4" stroke="#000" stroke-opacity="0.18" stroke-width="1.300" fill="none"/><path d="M782.1 1034.4A310.5 310.5 0 0 1 775.2 1038.5" stroke="#000" stroke-opacity="0.18" stroke-width="1.300" fill="none"/><path d="M785.3 1041.3A318.0 318.0 0 0 1 779.7 1044.6" stroke="#000" stroke-opacity="0.18" stroke-width="1.300" fill="none"/><path d="M762.8 1036.8A303.0 303.0 0 0 1 756.5 1040.0" stroke="#000" stroke-opacity="0.18" stroke-width="1.300" fill="none"/><path d="M765.6 1043.8A310.5 310.5 0 0 1 760.6 1046.4" stroke="#000" stroke-opacity="0.18" stroke-width="1.300" fill="none"/><path d="M770.1 1049.9A318.0 318.0 0 0 1 762.8 1053.6" stroke="#000" stroke-opacity="0.18" stroke-width="1.300" fill="none"/><path d="M746.1 1045.0A303.0 303.0 0 0 1 741.8 1046.9" stroke="#000" stroke-opacity="0.18" stroke-width="1.300" fill="none"/><path d="M750.3 1051.3A310.5 310.5 0 0 1 743.7 1054.2" stroke="#000" stroke-opacity="0.18" stroke-width="1.300" fill="none"/><path d="M752.6 1058.5A318.0 318.0 0 0 1 747.4 1060.8" stroke="#000" stroke-opacity="0.18" stroke-width="1.300" fill="none"/><path d="M730.8 1051.4A303.0 303.0 0 0 1 724.9 1053.6" stroke="#000" stroke-opacity="0.18" stroke-width="1.300" fill="none"/><path d="M732.7 1058.7A310.5 310.5 0 0 1 728.2 1060.4" stroke="#000" stroke-opacity="0.18" stroke-width="1.300" fill="none"/><path d="M736.6 1065.3A318.0 318.0 0 0 1 729.7 1067.9" stroke="#000" stroke-opacity="0.18" stroke-width="1.300" fill="none"/><path d="M665.6 986.0A221.5 221.5 0 0 1 662.8 986.5" stroke="#000" stroke-opacity="0.22" stroke-width="1.300" fill="none"/><path d="M668.0 994.1A230.0 230.0 0 0 1 663.7 995.0" stroke="#000" stroke-opacity="0.22" stroke-width="1.300" fill="none"/><path d="M669.3 1002.6A238.5 238.5 0 0 1 665.8 1003.3" stroke="#000" stroke-opacity="0.22" stroke-width="1.300" fill="none"/><path d="M652.7 988.2A221.5 221.5 0 0 1 649.0 988.7" stroke="#000" stroke-opacity="0.22" stroke-width="1.300" fill="none"/><path d="M653.5 996.7A230.0 230.0 0 0 1 650.6 997.1" stroke="#000" stroke-opacity="0.22" stroke-width="1.300" fill="none"/><path d="M655.4 1005.0A238.5 238.5 0 0 1 650.9 1005.6" stroke="#000" stroke-opacity="0.22" stroke-width="1.300" fill="none"/><path d="M674.9 1029.0A265.5 265.5 0 0 1 670.6 1029.8" stroke="#000" stroke-opacity="0.24" stroke-width="1.300" fill="none"/><path d="M677.6 1036.1A273.0 273.0 0 0 1 670.9 1037.4" stroke="#000" stroke-opacity="0.24" stroke-width="1.300" fill="none"/><path d="M678.4 1043.6A280.5 280.5 0 0 1 673.1 1044.6" stroke="#000" stroke-opacity="0.24" stroke-width="1.300" fill="none"/><path d="M659.7 1031.7A265.5 265.5 0 0 1 653.9 1032.5" stroke="#000" stroke-opacity="0.24" stroke-width="1.300" fill="none"/><path d="M660.0 1039.2A273.0 273.0 0 0 1 655.6 1039.8" stroke="#000" stroke-opacity="0.24" stroke-width="1.300" fill="none"/><path d="M662.3 1046.4A280.5 280.5 0 0 1 655.4 1047.4" stroke="#000" stroke-opacity="0.24" stroke-width="1.300" fill="none"/><path d="M635.8 990.0A221.5 221.5 0 0 1 631.3 990.3" stroke="#000" stroke-opacity="0.22" stroke-width="1.300" fill="none"/><path d="M637.5 998.4A230.0 230.0 0 0 1 630.6 998.8" stroke="#000" stroke-opacity="0.22" stroke-width="1.300" fill="none"/><path d="M637.3 1006.9A238.5 238.5 0 0 1 631.7 1007.3" stroke="#000" stroke-opacity="0.22" stroke-width="1.300" fill="none"/><path d="M615.3 990.4A221.5 221.5 0 0 1 609.3 990.2" stroke="#000" stroke-opacity="0.22" stroke-width="1.300" fill="none"/><path d="M614.3 998.9A230.0 230.0 0 0 1 609.7 998.7" stroke="#000" stroke-opacity="0.22" stroke-width="1.300" fill="none"/><path d="M615.2 1007.4A238.5 238.5 0 0 1 608.0 1007.1" stroke="#000" stroke-opacity="0.22" stroke-width="1.300" fill="none"/><path d="M642.6 1033.6A265.5 265.5 0 0 1 638.0 1034.0" stroke="#000" stroke-opacity="0.24" stroke-width="1.300" fill="none"/><path d="M644.4 1041.0A273.0 273.0 0 0 1 637.3 1041.5" stroke="#000" stroke-opacity="0.24" stroke-width="1.300" fill="none"/><path d="M644.2 1048.5A280.5 280.5 0 0 1 638.6 1048.9" stroke="#000" stroke-opacity="0.24" stroke-width="1.300" fill="none"/><path d="M626.4 1034.4A265.5 265.5 0 0 1 620.3 1034.5" stroke="#000" stroke-opacity="0.24" stroke-width="1.300" fill="none"/><path d="M625.7 1042.0A273.0 273.0 0 0 1 621.0 1042.0" stroke="#000" stroke-opacity="0.24" stroke-width="1.300" fill="none"/><path d="M627.1 1049.4A280.5 280.5 0 0 1 619.8 1049.5" stroke="#000" stroke-opacity="0.24" stroke-width="1.300" fill="none"/><path d="M610.2 1034.3A265.5 265.5 0 0 1 602.5 1033.9" stroke="#000" stroke-opacity="0.24" stroke-width="1.300" fill="none"/><path d="M609.1 1041.7A273.0 273.0 0 0 1 602.8 1041.4" stroke="#000" stroke-opacity="0.24" stroke-width="1.300" fill="none"/><path d="M607.9 1049.2A280.5 280.5 0 0 1 603.1 1048.9" stroke="#000" stroke-opacity="0.24" stroke-width="1.300" fill="none"/><path d="M629.0 1071.9A303.0 303.0 0 0 1 626.3 1072.0" stroke="#000" stroke-opacity="0.18" stroke-width="1.300" fill="none"/><path d="M629.9 1079.4A310.5 310.5 0 0 1 625.7 1079.5" stroke="#000" stroke-opacity="0.18" stroke-width="1.300" fill="none"/><path d="M629.6 1086.9A318.0 318.0 0 0 1 626.3 1087.0" stroke="#000" stroke-opacity="0.18" stroke-width="1.300" fill="none"/><path d="M619.4 1072.0A303.0 303.0 0 0 1 615.8 1072.0" stroke="#000" stroke-opacity="0.18" stroke-width="1.300" fill="none"/><path d="M618.9 1079.5A310.5 310.5 0 0 1 616.1 1079.5" stroke="#000" stroke-opacity="0.18" stroke-width="1.300" fill="none"/><path d="M619.5 1087.0A318.0 318.0 0 0 1 615.3 1086.9" stroke="#000" stroke-opacity="0.18" stroke-width="1.300" fill="none"/><path d="M569.7 1067.6A303.0 303.0 0 0 1 557.7 1065.3" stroke="#000" stroke-opacity="0.18" stroke-width="1.300" fill="none"/><path d="M571.6 1075.5A310.5 310.5 0 0 1 553.0 1072.0" stroke="#000" stroke-opacity="0.18" stroke-width="1.300" fill="none"/><path d="M568.3 1082.6A318.0 318.0 0 0 1 553.5 1079.8" stroke="#000" stroke-opacity="0.18" stroke-width="1.300" fill="none"/><path d="M549.7 978.7A221.5 221.5 0 0 1 544.4 976.8" stroke="#000" stroke-opacity="0.22" stroke-width="1.300" fill="none"/><path d="M548.4 987.2A230.0 230.0 0 0 1 540.1 984.3" stroke="#000" stroke-opacity="0.22" stroke-width="1.300" fill="none"/><path d="M544.8 995.0A238.5 238.5 0 0 1 538.0 992.6" stroke="#000" stroke-opacity="0.22" stroke-width="1.300" fill="none"/><path d="M525.6 968.9A221.5 221.5 0 0 1 518.8 965.5" stroke="#000" stroke-opacity="0.22" stroke-width="1.300" fill="none"/><path d="M521.0 976.1A230.0 230.0 0 0 1 515.7 973.5" stroke="#000" stroke-opacity="0.22" stroke-width="1.300" fill="none"/><path d="M518.7 984.4A238.5 238.5 0 0 1 510.5 980.4" stroke="#000" stroke-opacity="0.22" stroke-width="1.300" fill="none"/><path d="M502.7 956.3A221.5 221.5 0 0 1 494.8 951.0" stroke="#000" stroke-opacity="0.22" stroke-width="1.300" fill="none"/><path d="M497.4 962.9A230.0 230.0 0 0 1 490.8 958.6" stroke="#000" stroke-opacity="0.22" stroke-width="1.300" fill="none"/><path d="M491.9 969.6A238.5 238.5 0 0 1 486.8 966.2" stroke="#000" stroke-opacity="0.22" stroke-width="1.300" fill="none"/><path d="M542.1 1022.5A265.5 265.5 0 0 1 538.0 1021.2" stroke="#000" stroke-opacity="0.24" stroke-width="1.300" fill="none"/><path d="M541.0 1030.0A273.0 273.0 0 0 1 534.6 1028.0" stroke="#000" stroke-opacity="0.24" stroke-width="1.300" fill="none"/><path d="M538.1 1037.0A280.5 280.5 0 0 1 532.9 1035.3" stroke="#000" stroke-opacity="0.24" stroke-width="1.300" fill="none"/><path d="M527.5 1017.5A265.5 265.5 0 0 1 522.1 1015.4" stroke="#000" stroke-opacity="0.24" stroke-width="1.300" fill="none"/><path d="M524.2 1024.2A273.0 273.0 0 0 1 520.0 1022.6" stroke="#000" stroke-opacity="0.24" stroke-width="1.300" fill="none"/><path d="M522.6 1031.7A280.5 280.5 0 0 1 516.1 1029.2" stroke="#000" stroke-opacity="0.24" stroke-width="1.300" fill="none"/><path d="M513.2 1011.6A265.5 265.5 0 0 1 506.5 1008.6" stroke="#000" stroke-opacity="0.24" stroke-width="1.300" fill="none"/><path d="M509.4 1018.2A273.0 273.0 0 0 1 504.0 1015.7" stroke="#000" stroke-opacity="0.24" stroke-width="1.300" fill="none"/><path d="M505.7 1024.7A280.5 280.5 0 0 1 501.5 1022.8" stroke="#000" stroke-opacity="0.24" stroke-width="1.300" fill="none"/><path d="M497.6 1004.1A265.5 265.5 0 0 1 493.1 1001.7" stroke="#000" stroke-opacity="0.24" stroke-width="1.300" fill="none"/><path d="M495.1 1011.2A273.0 273.0 0 0 1 488.5 1007.7" stroke="#000" stroke-opacity="0.24" stroke-width="1.300" fill="none"/><path d="M491.0 1017.5A280.5 280.5 0 0 1 485.5 1014.6" stroke="#000" stroke-opacity="0.24" stroke-width="1.300" fill="none"/><path d="M484.1 996.5A265.5 265.5 0 0 1 478.5 993.0" stroke="#000" stroke-opacity="0.24" stroke-width="1.300" fill="none"/><path d="M479.6 1002.5A273.0 273.0 0 0 1 475.1 999.8" stroke="#000" stroke-opacity="0.24" stroke-width="1.300" fill="none"/><path d="M476.7 1009.5A280.5 280.5 0 0 1 470.1 1005.5" stroke="#000" stroke-opacity="0.24" stroke-width="1.300" fill="none"/><path d="M469.6 987.1A265.5 265.5 0 0 1 466.0 984.5" stroke="#000" stroke-opacity="0.24" stroke-width="1.300" fill="none"/><path d="M466.2 993.9A273.0 273.0 0 0 1 460.7 990.0" stroke="#000" stroke-opacity="0.24" stroke-width="1.300" fill="none"/><path d="M461.3 999.6A280.5 280.5 0 0 1 456.9 996.5" stroke="#000" stroke-opacity="0.24" stroke-width="1.300" fill="none"/><path d="M529.3 1057.8A303.0 303.0 0 0 1 525.8 1056.7" stroke="#000" stroke-opacity="0.18" stroke-width="1.300" fill="none"/><path d="M527.9 1065.2A310.5 310.5 0 0 1 522.6 1063.5" stroke="#000" stroke-opacity="0.18" stroke-width="1.300" fill="none"/><path d="M525.0 1072.2A318.0 318.0 0 0 1 520.8 1070.8" stroke="#000" stroke-opacity="0.18" stroke-width="1.300" fill="none"/><path d="M517.1 1053.6A303.0 303.0 0 0 1 512.6 1052.0" stroke="#000" stroke-opacity="0.18" stroke-width="1.300" fill="none"/><path d="M514.0 1060.5A310.5 310.5 0 0 1 510.5 1059.2" stroke="#000" stroke-opacity="0.18" stroke-width="1.300" fill="none"/><path d="M512.3 1067.8A318.0 318.0 0 0 1 507.0 1065.9" stroke="#000" stroke-opacity="0.18" stroke-width="1.300" fill="none"/><path d="M505.2 1049.0A303.0 303.0 0 0 1 499.7 1046.7" stroke="#000" stroke-opacity="0.18" stroke-width="1.300" fill="none"/><path d="M501.8 1055.7A310.5 310.5 0 0 1 497.2 1053.8" stroke="#000" stroke-opacity="0.18" stroke-width="1.300" fill="none"/><path d="M498.3 1062.4A318.0 318.0 0 0 1 494.8 1060.9" stroke="#000" stroke-opacity="0.18" stroke-width="1.300" fill="none"/><path d="M465.8 1029.2A303.0 303.0 0 0 1 463.0 1027.5" stroke="#000" stroke-opacity="0.18" stroke-width="1.300" fill="none"/><path d="M462.6 1036.1A310.5 310.5 0 0 1 458.4 1033.5" stroke="#000" stroke-opacity="0.18" stroke-width="1.300" fill="none"/><path d="M458.3 1042.2A318.0 318.0 0 0 1 454.9 1040.2" stroke="#000" stroke-opacity="0.18" stroke-width="1.300" fill="none"/><path d="M456.1 1023.2A303.0 303.0 0 0 1 452.5 1020.8" stroke="#000" stroke-opacity="0.18" stroke-width="1.300" fill="none"/><path d="M451.6 1029.2A310.5 310.5 0 0 1 448.8 1027.4" stroke="#000" stroke-opacity="0.18" stroke-width="1.300" fill="none"/><path d="M448.2 1035.9A318.0 318.0 0 0 1 444.0 1033.2" stroke="#000" stroke-opacity="0.18" stroke-width="1.300" fill="none"/><path d="M476.8 937.1A221.5 221.5 0 0 1 471.3 932.2" stroke="#000" stroke-opacity="0.22" stroke-width="1.300" fill="none"/><path d="M472.7 944.8A230.0 230.0 0 0 1 464.1 937.2" stroke="#000" stroke-opacity="0.22" stroke-width="1.300" fill="none"/><path d="M466.3 950.5A238.5 238.5 0 0 1 459.3 944.3" stroke="#000" stroke-opacity="0.22" stroke-width="1.300" fill="none"/><path d="M452.7 913.0A221.5 221.5 0 0 1 446.4 905.4" stroke="#000" stroke-opacity="0.22" stroke-width="1.300" fill="none"/><path d="M445.4 917.6A230.0 230.0 0 0 1 440.5 911.6" stroke="#000" stroke-opacity="0.22" stroke-width="1.300" fill="none"/><path d="M440.2 924.6A238.5 238.5 0 0 1 432.6 915.3" stroke="#000" stroke-opacity="0.22" stroke-width="1.300" fill="none"/><path d="M455.1 976.3A265.5 265.5 0 0 1 450.7 972.7" stroke="#000" stroke-opacity="0.24" stroke-width="1.300" fill="none"/><path d="M451.6 983.1A273.0 273.0 0 0 1 444.7 977.5" stroke="#000" stroke-opacity="0.24" stroke-width="1.300" fill="none"/><path d="M446.1 988.3A280.5 280.5 0 0 1 440.7 983.9" stroke="#000" stroke-opacity="0.24" stroke-width="1.300" fill="none"/><path d="M439.8 963.1A265.5 265.5 0 0 1 434.3 957.8" stroke="#000" stroke-opacity="0.24" stroke-width="1.300" fill="none"/><path d="M434.0 967.9A273.0 273.0 0 0 1 429.7 963.8" stroke="#000" stroke-opacity="0.24" stroke-width="1.300" fill="none"/><path d="M429.9 974.4A280.5 280.5 0 0 1 423.4 968.1" stroke="#000" stroke-opacity="0.24" stroke-width="1.300" fill="none"/><path d="M425.5 948.7A265.5 265.5 0 0 1 419.2 941.5" stroke="#000" stroke-opacity="0.24" stroke-width="1.300" fill="none"/><path d="M419.4 953.0A273.0 273.0 0 0 1 414.2 947.2" stroke="#000" stroke-opacity="0.24" stroke-width="1.300" fill="none"/><path d="M413.1 957.3A280.5 280.5 0 0 1 409.1 952.8" stroke="#000" stroke-opacity="0.24" stroke-width="1.300" fill="none"/><path d="M411.0 931.4A265.5 265.5 0 0 1 406.9 926.1" stroke="#000" stroke-opacity="0.24" stroke-width="1.300" fill="none"/><path d="M405.9 937.1A273.0 273.0 0 0 1 400.0 929.3" stroke="#000" stroke-opacity="0.24" stroke-width="1.300" fill="none"/><path d="M399.4 941.0A280.5 280.5 0 0 1 394.5 934.5" stroke="#000" stroke-opacity="0.24" stroke-width="1.300" fill="none"/><path d="M435.6 1008.6A303.0 303.0 0 0 1 433.3 1006.9" stroke="#000" stroke-opacity="0.18" stroke-width="1.300" fill="none"/><path d="M431.6 1015.0A310.5 310.5 0 0 1 428.1 1012.3" stroke="#000" stroke-opacity="0.18" stroke-width="1.300" fill="none"/><path d="M426.6 1020.7A318.0 318.0 0 0 1 423.8 1018.5" stroke="#000" stroke-opacity="0.18" stroke-width="1.300" fill="none"/><path d="M427.7 1002.3A303.0 303.0 0 0 1 424.8 999.9" stroke="#000" stroke-opacity="0.18" stroke-width="1.300" fill="none"/><path d="M422.5 1007.8A310.5 310.5 0 0 1 420.3 1005.9" stroke="#000" stroke-opacity="0.18" stroke-width="1.300" fill="none"/><path d="M418.3 1014.0A318.0 318.0 0 0 1 414.9 1011.2" stroke="#000" stroke-opacity="0.18" stroke-width="1.300" fill="none"/><path d="M404.2 980.7A303.0 303.0 0 0 1 401.0 977.3" stroke="#000" stroke-opacity="0.18" stroke-width="1.300" fill="none"/><path d="M399.7 986.8A310.5 310.5 0 0 1 394.7 981.6" stroke="#000" stroke-opacity="0.18" stroke-width="1.300" fill="none"/><path d="M393.7 991.4A318.0 318.0 0 0 1 389.8 987.3" stroke="#000" stroke-opacity="0.18" stroke-width="1.300" fill="none"/><path d="M393.1 968.6A303.0 303.0 0 0 1 389.0 963.9" stroke="#000" stroke-opacity="0.18" stroke-width="1.300" fill="none"/><path d="M386.9 973.0A310.5 310.5 0 0 1 383.8 969.4" stroke="#000" stroke-opacity="0.18" stroke-width="1.300" fill="none"/><path d="M382.0 978.8A318.0 318.0 0 0 1 377.3 973.3" stroke="#000" stroke-opacity="0.18" stroke-width="1.300" fill="none"/><path d="M434.2 888.1A221.5 221.5 0 0 1 431.9 884.3" stroke="#000" stroke-opacity="0.22" stroke-width="1.300" fill="none"/><path d="M427.7 893.6A230.0 230.0 0 0 1 424.0 887.7" stroke="#000" stroke-opacity="0.22" stroke-width="1.300" fill="none"/><path d="M420.1 897.6A238.5 238.5 0 0 1 417.2 892.8" stroke="#000" stroke-opacity="0.22" stroke-width="1.300" fill="none"/><path d="M424.0 870.3A221.5 221.5 0 0 1 421.4 865.0" stroke="#000" stroke-opacity="0.22" stroke-width="1.300" fill="none"/><path d="M416.1 873.5A230.0 230.0 0 0 1 414.1 869.4" stroke="#000" stroke-opacity="0.22" stroke-width="1.300" fill="none"/><path d="M409.1 878.4A238.5 238.5 0 0 1 405.9 872.0" stroke="#000" stroke-opacity="0.22" stroke-width="1.300" fill="none"/><path d="M400.1 916.3A265.5 265.5 0 0 1 398.2 913.4" stroke="#000" stroke-opacity="0.24" stroke-width="1.300" fill="none"/><path d="M394.4 921.2A273.0 273.0 0 0 1 391.4 916.8" stroke="#000" stroke-opacity="0.24" stroke-width="1.300" fill="none"/><path d="M387.8 924.9A280.5 280.5 0 0 1 385.5 921.3" stroke="#000" stroke-opacity="0.24" stroke-width="1.300" fill="none"/><path d="M393.6 906.0A265.5 265.5 0 0 1 391.3 902.1" stroke="#000" stroke-opacity="0.24" stroke-width="1.300" fill="none"/><path d="M386.9 909.4A273.0 273.0 0 0 1 385.1 906.3" stroke="#000" stroke-opacity="0.24" stroke-width="1.300" fill="none"/><path d="M380.9 914.0A280.5 280.5 0 0 1 378.1 909.3" stroke="#000" stroke-opacity="0.24" stroke-width="1.300" fill="none"/><path d="M387.5 895.5A265.5 265.5 0 0 1 384.9 890.4" stroke="#000" stroke-opacity="0.24" stroke-width="1.300" fill="none"/><path d="M380.7 898.5A273.0 273.0 0 0 1 378.5 894.3" stroke="#000" stroke-opacity="0.24" stroke-width="1.300" fill="none"/><path d="M373.8 901.5A280.5 280.5 0 0 1 372.1 898.3" stroke="#000" stroke-opacity="0.24" stroke-width="1.300" fill="none"/><path d="M381.4 883.3A265.5 265.5 0 0 1 379.7 879.7" stroke="#000" stroke-opacity="0.24" stroke-width="1.300" fill="none"/><path d="M375.0 887.4A273.0 273.0 0 0 1 372.5 882.0" stroke="#000" stroke-opacity="0.24" stroke-width="1.300" fill="none"/><path d="M368.0 890.1A280.5 280.5 0 0 1 365.9 885.7" stroke="#000" stroke-opacity="0.24" stroke-width="1.300" fill="none"/><path d="M370.6 857.2A265.5 265.5 0 0 1 369.5 854.0" stroke="#000" stroke-opacity="0.24" stroke-width="1.300" fill="none"/><path d="M363.8 860.5A273.0 273.0 0 0 1 362.1 855.6" stroke="#000" stroke-opacity="0.24" stroke-width="1.300" fill="none"/><path d="M356.5 862.5A280.5 280.5 0 0 1 355.2 858.5" stroke="#000" stroke-opacity="0.24" stroke-width="1.300" fill="none"/><path d="M366.8 845.8A265.5 265.5 0 0 1 365.6 841.4" stroke="#000" stroke-opacity="0.24" stroke-width="1.300" fill="none"/><path d="M359.5 847.4A273.0 273.0 0 0 1 358.5 844.0" stroke="#000" stroke-opacity="0.24" stroke-width="1.300" fill="none"/><path d="M352.6 850.4A280.5 280.5 0 0 1 351.0 845.2" stroke="#000" stroke-opacity="0.24" stroke-width="1.300" fill="none"/><path d="M363.6 834.1A265.5 265.5 0 0 1 362.3 828.6" stroke="#000" stroke-opacity="0.24" stroke-width="1.300" fill="none"/><path d="M356.2 835.4A273.0 273.0 0 0 1 355.1 830.9" stroke="#000" stroke-opacity="0.24" stroke-width="1.300" fill="none"/><path d="M348.8 836.6A280.5 280.5 0 0 1 347.9 833.1" stroke="#000" stroke-opacity="0.24" stroke-width="1.300" fill="none"/><path d="M360.6 821.0A265.5 265.5 0 0 1 359.9 817.1" stroke="#000" stroke-opacity="0.24" stroke-width="1.300" fill="none"/><path d="M353.5 823.3A273.0 273.0 0 0 1 352.4 817.6" stroke="#000" stroke-opacity="0.24" stroke-width="1.300" fill="none"/><path d="M346.0 824.2A280.5 280.5 0 0 1 345.1 819.5" stroke="#000" stroke-opacity="0.24" stroke-width="1.300" fill="none"/><path d="M443.3 636.7A221.5 221.5 0 0 1 446.0 633.2" stroke="#000" stroke-opacity="0.22" stroke-width="1.300" fill="none"/><path d="M435.8 632.6A230.0 230.0 0 0 1 440.0 627.0" stroke="#000" stroke-opacity="0.22" stroke-width="1.300" fill="none"/><path d="M429.5 626.9A238.5 238.5 0 0 1 432.9 622.4" stroke="#000" stroke-opacity="0.22" stroke-width="1.300" fill="none"/><path d="M456.3 620.8A221.5 221.5 0 0 1 460.4 616.5" stroke="#000" stroke-opacity="0.22" stroke-width="1.300" fill="none"/><path d="M450.5 614.6A230.0 230.0 0 0 1 453.7 611.2" stroke="#000" stroke-opacity="0.22" stroke-width="1.300" fill="none"/><path d="M443.4 609.8A238.5 238.5 0 0 1 448.3 604.5" stroke="#000" stroke-opacity="0.22" stroke-width="1.300" fill="none"/><path d="M405.8 613.5A265.5 265.5 0 0 1 408.5 609.9" stroke="#000" stroke-opacity="0.24" stroke-width="1.300" fill="none"/><path d="M399.0 610.1A273.0 273.0 0 0 1 403.2 604.4" stroke="#000" stroke-opacity="0.24" stroke-width="1.300" fill="none"/><path d="M393.4 605.1A280.5 280.5 0 0 1 396.7 600.5" stroke="#000" stroke-opacity="0.24" stroke-width="1.300" fill="none"/><path d="M415.7 600.7A265.5 265.5 0 0 1 419.6 596.0" stroke="#000" stroke-opacity="0.24" stroke-width="1.300" fill="none"/><path d="M410.4 595.3A273.0 273.0 0 0 1 413.4 591.7" stroke="#000" stroke-opacity="0.24" stroke-width="1.300" fill="none"/><path d="M403.8 591.5A280.5 280.5 0 0 1 408.5 585.9" stroke="#000" stroke-opacity="0.24" stroke-width="1.300" fill="none"/><path d="M426.3 588.5A265.5 265.5 0 0 1 431.6 582.9" stroke="#000" stroke-opacity="0.24" stroke-width="1.300" fill="none"/><path d="M421.4 582.8A273.0 273.0 0 0 1 425.7 578.2" stroke="#000" stroke-opacity="0.24" stroke-width="1.300" fill="none"/><path d="M416.4 577.1A280.5 280.5 0 0 1 419.8 573.6" stroke="#000" stroke-opacity="0.24" stroke-width="1.300" fill="none"/><path d="M386.0 577.7A303.0 303.0 0 0 1 389.4 573.6" stroke="#000" stroke-opacity="0.18" stroke-width="1.300" fill="none"/><path d="M379.4 574.0A310.5 310.5 0 0 1 384.5 567.8" stroke="#000" stroke-opacity="0.18" stroke-width="1.300" fill="none"/><path d="M374.1 568.6A318.0 318.0 0 0 1 378.2 563.6" stroke="#000" stroke-opacity="0.18" stroke-width="1.300" fill="none"/><path d="M439.4 575.3A265.5 265.5 0 0 1 442.8 572.1" stroke="#000" stroke-opacity="0.24" stroke-width="1.300" fill="none"/><path d="M433.4 570.6A273.0 273.0 0 0 1 438.7 565.8" stroke="#000" stroke-opacity="0.24" stroke-width="1.300" fill="none"/><path d="M428.9 564.6A280.5 280.5 0 0 1 433.1 560.8" stroke="#000" stroke-opacity="0.24" stroke-width="1.300" fill="none"/><path d="M451.7 564.4A265.5 265.5 0 0 1 456.6 560.6" stroke="#000" stroke-opacity="0.24" stroke-width="1.300" fill="none"/><path d="M447.6 558.2A273.0 273.0 0 0 1 451.3 555.2" stroke="#000" stroke-opacity="0.24" stroke-width="1.300" fill="none"/><path d="M441.9 553.1A280.5 280.5 0 0 1 447.6 548.5" stroke="#000" stroke-opacity="0.24" stroke-width="1.300" fill="none"/><path d="M464.7 554.4A265.5 265.5 0 0 1 471.0 549.9" stroke="#000" stroke-opacity="0.24" stroke-width="1.300" fill="none"/><path d="M460.9 547.8A273.0 273.0 0 0 1 466.1 544.2" stroke="#000" stroke-opacity="0.24" stroke-width="1.300" fill="none"/><path d="M457.2 541.3A280.5 280.5 0 0 1 461.2 538.5" stroke="#000" stroke-opacity="0.24" stroke-width="1.300" fill="none"/><path d="M479.9 544.1A265.5 265.5 0 0 1 484.5 541.3" stroke="#000" stroke-opacity="0.24" stroke-width="1.300" fill="none"/><path d="M474.9 538.4A273.0 273.0 0 0 1 481.7 534.2" stroke="#000" stroke-opacity="0.24" stroke-width="1.300" fill="none"/><path d="M471.6 531.6A280.5 280.5 0 0 1 477.1 528.2" stroke="#000" stroke-opacity="0.24" stroke-width="1.300" fill="none"/><path d="M494.1 535.8A265.5 265.5 0 0 1 500.2 532.6" stroke="#000" stroke-opacity="0.24" stroke-width="1.300" fill="none"/><path d="M491.2 528.8A273.0 273.0 0 0 1 496.1 526.3" stroke="#000" stroke-opacity="0.24" stroke-width="1.300" fill="none"/><path d="M486.5 522.8A280.5 280.5 0 0 1 493.8 519.0" stroke="#000" stroke-opacity="0.24" stroke-width="1.300" fill="none"/><path d="M510.5 527.6A265.5 265.5 0 0 1 514.7 525.7" stroke="#000" stroke-opacity="0.24" stroke-width="1.300" fill="none"/><path d="M506.3 521.3A273.0 273.0 0 0 1 512.8 518.4" stroke="#000" stroke-opacity="0.24" stroke-width="1.300" fill="none"/><path d="M503.8 514.1A280.5 280.5 0 0 1 509.1 511.8" stroke="#000" stroke-opacity="0.24" stroke-width="1.300" fill="none"/><path d="M525.6 521.2A265.5 265.5 0 0 1 531.4 519.1" stroke="#000" stroke-opacity="0.24" stroke-width="1.300" fill="none"/><path d="M523.6 514.0A273.0 273.0 0 0 1 528.1 512.3" stroke="#000" stroke-opacity="0.24" stroke-width="1.300" fill="none"/><path d="M519.8 507.4A280.5 280.5 0 0 1 526.7 504.8" stroke="#000" stroke-opacity="0.24" stroke-width="1.300" fill="none"/><path d="M541.1 515.8A265.5 265.5 0 0 1 548.5 513.6" stroke="#000" stroke-opacity="0.24" stroke-width="1.300" fill="none"/><path d="M539.6 508.4A273.0 273.0 0 0 1 545.7 506.6" stroke="#000" stroke-opacity="0.24" stroke-width="1.300" fill="none"/><path d="M538.1 501.0A280.5 280.5 0 0 1 542.8 499.6" stroke="#000" stroke-opacity="0.24" stroke-width="1.300" fill="none"/><path d="M558.7 510.9A265.5 265.5 0 0 1 564.0 509.7" stroke="#000" stroke-opacity="0.24" stroke-width="1.300" fill="none"/><path d="M555.8 503.9A273.0 273.0 0 0 1 563.6 502.1" stroke="#000" stroke-opacity="0.24" stroke-width="1.300" fill="none"/><path d="M554.8 496.4A280.5 280.5 0 0 1 561.2 495.0" stroke="#000" stroke-opacity="0.24" stroke-width="1.300" fill="none"/><path d="M574.8 507.6A265.5 265.5 0 0 1 581.7 506.4" stroke="#000" stroke-opacity="0.24" stroke-width="1.300" fill="none"/><path d="M574.3 500.0A273.0 273.0 0 0 1 579.8 499.1" stroke="#000" stroke-opacity="0.24" stroke-width="1.300" fill="none"/><path d="M571.8 492.9A280.5 280.5 0 0 1 579.8 491.5" stroke="#000" stroke-opacity="0.24" stroke-width="1.300" fill="none"/><path d="M593.0 505.0A265.5 265.5 0 0 1 597.6 504.5" stroke="#000" stroke-opacity="0.24" stroke-width="1.300" fill="none"/><path d="M591.0 497.7A273.0 273.0 0 0 1 598.1 497.0" stroke="#000" stroke-opacity="0.24" stroke-width="1.300" fill="none"/><path d="M591.0 490.1A280.5 280.5 0 0 1 596.7 489.6" stroke="#000" stroke-opacity="0.24" stroke-width="1.300" fill="none"/><path d="M609.3 503.8A265.5 265.5 0 0 1 615.5 503.6" stroke="#000" stroke-opacity="0.24" stroke-width="1.300" fill="none"/><path d="M609.8 496.2A273.0 273.0 0 0 1 614.6 496.1" stroke="#000" stroke-opacity="0.24" stroke-width="1.300" fill="none"/><path d="M608.3 488.8A280.5 280.5 0 0 1 615.6 488.6" stroke="#000" stroke-opacity="0.24" stroke-width="1.300" fill="none"/><path d="M415.7 546.1A303.0 303.0 0 0 1 418.2 543.9" stroke="#000" stroke-opacity="0.18" stroke-width="1.300" fill="none"/><path d="M410.0 541.2A310.5 310.5 0 0 1 413.8 537.7" stroke="#000" stroke-opacity="0.18" stroke-width="1.300" fill="none"/><path d="M405.3 535.3A318.0 318.0 0 0 1 408.4 532.6" stroke="#000" stroke-opacity="0.18" stroke-width="1.300" fill="none"/><path d="M424.5 538.3A303.0 303.0 0 0 1 427.9 535.5" stroke="#000" stroke-opacity="0.18" stroke-width="1.300" fill="none"/><path d="M420.1 532.2A310.5 310.5 0 0 1 422.7 530.0" stroke="#000" stroke-opacity="0.18" stroke-width="1.300" fill="none"/><path d="M414.6 527.1A318.0 318.0 0 0 1 418.6 523.7" stroke="#000" stroke-opacity="0.18" stroke-width="1.300" fill="none"/><path d="M433.7 530.9A303.0 303.0 0 0 1 438.1 527.5" stroke="#000" stroke-opacity="0.18" stroke-width="1.300" fill="none"/><path d="M429.5 524.6A310.5 310.5 0 0 1 433.1 521.8" stroke="#000" stroke-opacity="0.18" stroke-width="1.300" fill="none"/><path d="M425.3 518.3A318.0 318.0 0 0 1 428.1 516.2" stroke="#000" stroke-opacity="0.18" stroke-width="1.300" fill="none"/><path d="M460.0 512.3A303.0 303.0 0 0 1 463.1 510.4" stroke="#000" stroke-opacity="0.18" stroke-width="1.300" fill="none"/><path d="M455.3 506.4A310.5 310.5 0 0 1 459.9 503.5" stroke="#000" stroke-opacity="0.18" stroke-width="1.300" fill="none"/><path d="M451.8 499.7A318.0 318.0 0 0 1 455.5 497.4" stroke="#000" stroke-opacity="0.18" stroke-width="1.300" fill="none"/><path d="M470.9 505.8A303.0 303.0 0 0 1 475.0 503.5" stroke="#000" stroke-opacity="0.18" stroke-width="1.300" fill="none"/><path d="M467.7 499.0A310.5 310.5 0 0 1 470.9 497.2" stroke="#000" stroke-opacity="0.18" stroke-width="1.300" fill="none"/><path d="M463.2 492.9A318.0 318.0 0 0 1 468.1 490.2" stroke="#000" stroke-opacity="0.18" stroke-width="1.300" fill="none"/><path d="M545.6 475.5A303.0 303.0 0 0 1 547.8 475.0" stroke="#000" stroke-opacity="0.18" stroke-width="1.300" fill="none"/><path d="M543.1 468.4A310.5 310.5 0 0 1 546.5 467.6" stroke="#000" stroke-opacity="0.18" stroke-width="1.300" fill="none"/><path d="M541.6 461.1A318.0 318.0 0 0 1 544.3 460.4" stroke="#000" stroke-opacity="0.18" stroke-width="1.300" fill="none"/><path d="M553.4 473.6A303.0 303.0 0 0 1 556.4 473.0" stroke="#000" stroke-opacity="0.18" stroke-width="1.300" fill="none"/><path d="M552.1 466.2A310.5 310.5 0 0 1 554.4 465.7" stroke="#000" stroke-opacity="0.18" stroke-width="1.300" fill="none"/><path d="M549.9 459.1A318.0 318.0 0 0 1 553.4 458.3" stroke="#000" stroke-opacity="0.18" stroke-width="1.300" fill="none"/><path d="M577.9 469.1A303.0 303.0 0 0 1 581.1 468.6" stroke="#000" stroke-opacity="0.18" stroke-width="1.300" fill="none"/><path d="M576.0 461.8A310.5 310.5 0 0 1 580.9 461.1" stroke="#000" stroke-opacity="0.18" stroke-width="1.300" fill="none"/><path d="M575.5 454.3A318.0 318.0 0 0 1 579.4 453.7" stroke="#000" stroke-opacity="0.18" stroke-width="1.300" fill="none"/><path d="M589.2 467.7A303.0 303.0 0 0 1 593.4 467.3" stroke="#000" stroke-opacity="0.18" stroke-width="1.300" fill="none"/><path d="M588.9 460.2A310.5 310.5 0 0 1 592.2 459.8" stroke="#000" stroke-opacity="0.18" stroke-width="1.300" fill="none"/><path d="M587.3 452.8A318.0 318.0 0 0 1 592.3 452.3" stroke="#000" stroke-opacity="0.18" stroke-width="1.300" fill="none"/><path d="M600.5 466.7A303.0 303.0 0 0 1 605.8 466.4" stroke="#000" stroke-opacity="0.18" stroke-width="1.300" fill="none"/><path d="M600.5 459.2A310.5 310.5 0 0 1 604.9 458.9" stroke="#000" stroke-opacity="0.18" stroke-width="1.300" fill="none"/><path d="M600.6 451.7A318.0 318.0 0 0 1 604.0 451.5" stroke="#000" stroke-opacity="0.18" stroke-width="1.300" fill="none"/><path d="M613.2 466.1A303.0 303.0 0 0 1 616.9 466.0" stroke="#000" stroke-opacity="0.18" stroke-width="1.300" fill="none"/><path d="M612.2 458.6A310.5 310.5 0 0 1 617.6 458.5" stroke="#000" stroke-opacity="0.18" stroke-width="1.300" fill="none"/><path d="M612.5 451.1A318.0 318.0 0 0 1 617.0 451.0" stroke="#000" stroke-opacity="0.18" stroke-width="1.300" fill="none"/><path d="M523.1 568.6A223.0 223.0 0 0 1 526.9 566.8" stroke="#000" stroke-opacity="0.3" stroke-width="1.300" fill="none"/><path d="M518.2 561.0A232.0 232.0 0 0 1 524.1 558.2" stroke="#000" stroke-opacity="0.3" stroke-width="1.300" fill="none"/><path d="M514.9 552.6A241.0 241.0 0 0 1 519.6 550.3" stroke="#000" stroke-opacity="0.3" stroke-width="1.300" fill="none"/><path d="M543.9 559.7A223.0 223.0 0 0 1 549.2 557.9" stroke="#000" stroke-opacity="0.3" stroke-width="1.300" fill="none"/><path d="M541.5 551.0A232.0 232.0 0 0 1 545.6 549.6" stroke="#000" stroke-opacity="0.3" stroke-width="1.300" fill="none"/><path d="M537.3 543.0A241.0 241.0 0 0 1 543.8 540.7" stroke="#000" stroke-opacity="0.3" stroke-width="1.300" fill="none"/><path d="M565.5 553.0A223.0 223.0 0 0 1 572.4 551.4" stroke="#000" stroke-opacity="0.3" stroke-width="1.300" fill="none"/><path d="M564.0 544.1A232.0 232.0 0 0 1 569.7 542.7" stroke="#000" stroke-opacity="0.3" stroke-width="1.300" fill="none"/><path d="M562.5 535.2A241.0 241.0 0 0 1 567.0 534.1" stroke="#000" stroke-opacity="0.3" stroke-width="1.300" fill="none"/><path d="M842.8 731.4A225.0 225.0 0 0 1 843.9 738.2" stroke="#000" stroke-opacity="0.3" stroke-width="1.300" fill="none"/><path d="M851.4 728.1A234.0 234.0 0 0 1 853.0 738.7" stroke="#000" stroke-opacity="0.3" stroke-width="1.300" fill="none"/><path d="M860.5 727.7A243.0 243.0 0 0 1 861.8 736.3" stroke="#000" stroke-opacity="0.3" stroke-width="1.300" fill="none"/><path d="M820.5 877.4A227.0 227.0 0 0 1 817.9 882.0" stroke="#000" stroke-opacity="0.26" stroke-width="1.300" fill="none"/><path d="M829.0 880.5A236.0 236.0 0 0 1 825.0 887.6" stroke="#000" stroke-opacity="0.26" stroke-width="1.300" fill="none"/><path d="M836.5 885.6A245.0 245.0 0 0 1 833.3 891.3" stroke="#000" stroke-opacity="0.26" stroke-width="1.300" fill="none"/><path d="M805.4 901.4A227.0 227.0 0 0 1 801.3 907.0" stroke="#000" stroke-opacity="0.26" stroke-width="1.300" fill="none"/><path d="M812.2 907.3A236.0 236.0 0 0 1 808.9 911.7" stroke="#000" stroke-opacity="0.26" stroke-width="1.300" fill="none"/><path d="M820.3 911.5A245.0 245.0 0 0 1 815.3 918.3" stroke="#000" stroke-opacity="0.26" stroke-width="1.300" fill="none"/><path d="M787.5 923.3A227.0 227.0 0 0 1 781.5 929.6" stroke="#000" stroke-opacity="0.26" stroke-width="1.300" fill="none"/><path d="M793.5 930.0A236.0 236.0 0 0 1 788.5 935.3" stroke="#000" stroke-opacity="0.26" stroke-width="1.300" fill="none"/><path d="M799.4 936.9A245.0 245.0 0 0 1 795.5 941.0" stroke="#000" stroke-opacity="0.26" stroke-width="1.300" fill="none"/><path d="M741.6 961.3A227.0 227.0 0 0 1 737.1 964.1" stroke="#000" stroke-opacity="0.26" stroke-width="1.300" fill="none"/><path d="M747.5 968.2A236.0 236.0 0 0 1 740.5 972.5" stroke="#000" stroke-opacity="0.26" stroke-width="1.300" fill="none"/><path d="M751.5 976.3A245.0 245.0 0 0 1 745.9 979.8" stroke="#000" stroke-opacity="0.26" stroke-width="1.300" fill="none"/><path d="M716.7 974.8A227.0 227.0 0 0 1 710.3 977.7" stroke="#000" stroke-opacity="0.26" stroke-width="1.300" fill="none"/><path d="M719.7 983.4A236.0 236.0 0 0 1 714.7 985.6" stroke="#000" stroke-opacity="0.26" stroke-width="1.300" fill="none"/><path d="M724.7 991.0A245.0 245.0 0 0 1 716.9 994.4" stroke="#000" stroke-opacity="0.26" stroke-width="1.300" fill="none"/><path d="M690.3 985.1A227.0 227.0 0 0 1 682.0 987.7" stroke="#000" stroke-opacity="0.26" stroke-width="1.300" fill="none"/><path d="M692.2 994.0A236.0 236.0 0 0 1 685.3 996.1" stroke="#000" stroke-opacity="0.26" stroke-width="1.300" fill="none"/><path d="M694.0 1002.9A245.0 245.0 0 0 1 688.6 1004.5" stroke="#000" stroke-opacity="0.26" stroke-width="1.300" fill="none"/><text x="621.5" y="837" font-size="9" fill="#222" text-anchor="middle" transform="rotate(7 621.5 834)">Entire Case</text></svg><svg style="left:188px;top:344px" width="31" height="32" viewBox="0 0 31 32"><g fill="none" stroke="#696969"><path stroke-width="4.400" d="M16.64 2.65A13.1 13.1 0 0 1 27.07 21.85 M23.92 25.74A13.1 13.1 0 1 1 14.36 2.65"/><path stroke-width="4.300" d="M12.95 9.40A6.8 6.8 0 1 1 16.68 22.40 M14.32 22.40A6.8 6.8 0 0 1 10.95 10.65"/></g></svg><svg style="left:228px;top:357px" width="13.5" height="7" viewBox="0 0 13.5 7"><path d="M0 0 H13.5 L6.75 7 Z" fill="#777"/></svg><div class="t" style="left:253.5px;top:345.4px;font-size:29.5px;line-height:29.5px;color:#1e1e1e;letter-spacing:0.285px;-webkit-text-stroke:0.7px #1e1e1e;">Analytics Index 1...</div><svg style="left:523.5px;top:357px" width="14.5" height="7.6" viewBox="0 0 14.5 7.6"><path d="M0 0 H14.5 L7.25 7.6 Z" fill="#222"/></svg><div class="t" style="left:1195.0px;top:422.7px;font-size:18px;line-height:18px;color:#666;letter-spacing:0.162px;">Actions</div><svg style="left:1270.5px;top:428.5px" width="14" height="7.5" viewBox="0 0 14 7.5"><path d="M0 0 H14 L7.0 7.5 Z" fill="#555"/></svg><div class="a" style="left:1316px;top:410px;width:378px;height:44px;box-sizing:border-box;border:1.500px solid #e3e3ea;border-radius:4px;background:#fdfdfb"></div><div class="a" style="left:1476px;top:411px;width:1.500px;height:42px;background:#e0e0e8"></div><div class="t" style="left:1330.5px;top:422.7px;font-size:18px;line-height:18px;color:#666;letter-spacing:-0.088px;">Relationships</div><svg style="left:1450.5px;top:428.5px" width="14" height="7.5" viewBox="0 0 14 7.5"><path d="M0 0 H14 L7.0 7.5 Z" fill="#555"/></svg><svg style="left:1492.0px;top:419.0px" width="26" height="26" viewBox="0 0 24 24"><path fill="#666" d="M15.5 14h-.79l-.28-.27A6.471 6.471 0 0 0 16 9.5 6.5 6.500 0 1 0 9.5 16c1.61 0 3.090-.59 4.230-1.570l.270.280v.79l5 4.990L20.490 19l-4.990-5zm-6 0C7.010 14 5 11.990 5 9.500S7.010 5 9.500 5 14 7.010 14 9.500 11.990 14 9.500 14z"/></svg><div class="t" style="left:1530.0px;top:422.0px;font-size:20.5px;line-height:20.5px;color:#a0a0a0;letter-spacing:0.090px;">Filter</div><div class="a" style="left:1704.500px;top:417px;width:60px;height:31px;box-sizing:border-box;border:1.500px solid #8a8a8a;border-radius:6px;background:#f4f4f4"></div><div class="t" style="left:1715.0px;top:424.9px;font-size:14.5px;line-height:14.5px;color:#555;letter-spacing:0.373px;">25</div><svg style="left:1751px;top:425px" width="8" height="14" viewBox="0 0 8 14"><path d="M4 0l3.600 5.200h-7.200zM4 14l3.600-5.200h-7.200z" fill="#333"/></svg><div class="t" style="left:1775.0px;top:424.9px;font-size:14.5px;line-height:14.5px;color:#555;letter-spacing:-0.565px;">Per Page</div><div class="a" style="left:1843px;top:415px;width:2px;height:33px;background:#d2d2d6"></div><div class="t" style="left:1853.5px;top:424.9px;font-size:14.5px;line-height:14.5px;color:#555;letter-spacing:-0.621px;">Page</div><div class="a" style="left:1894px;top:417.500px;width:61px;height:31px;box-sizing:border-box;border:1px solid #e4e4ea;border-radius:2px;background:#fdfdfb"></div><div class="t" style="left:1966.5px;top:424.9px;font-size:14.5px;line-height:14.5px;color:#555;letter-spacing:-0.092px;">of</div><div class="t" style="left:1987.0px;top:424.9px;font-size:14.5px;line-height:14.5px;color:#555;letter-spacing:0.082px;">8405</div><svg style="left:2036px;top:424px" width="12" height="16" viewBox="0 0 12 16"><path d="M9.500 1.500L3 8l6.500 6.500" fill="none" stroke="#aaa" stroke-width="2"/></svg><svg style="left:2072px;top:424px" width="12" height="16" viewBox="0 0 12 16"><path d="M2.500 1.500L9 8l-6.500 6.500" fill="none" stroke="#2a2a2a" stroke-width="2.400"/></svg><div class="a" style="left:1191px;top:460px;width:928px;height:635px;overflow:hidden"><div class="a" style="left:0;top:6.400px;width:928px;height:42.200px;background:#f6f6f7"></div><div class="a" style="left:0px;top:13.5px;width:27px;height:30px;box-sizing:border-box;background:#fff;border:1.500px solid #dcdce2;border-left:none;border-radius:0 3px 3px 0"></div><svg style="left:50px;top:12.800000000000011px" width="24" height="28" viewBox="0 0 24 28"><path d="M4.500 2h10.300l6.700 6.700v15.800a2 2 0 0 1-2 2h-15a2 2 0 0 1-2-2v-20.500a2 2 0 0 1 2-2zM14.300 2.300v6.900h6.900" fill="none" stroke="#686868" stroke-width="2" stroke-linejoin="round"/><path d="M7 13h10M7 17h10M7 20.800h10" stroke="#686868" stroke-width="1.900"/></svg><div class="t" style="left:100.0px;top:17.2px;font-size:19px;line-height:19px;color:#333;letter-spacing:-0.779px;font-weight:bold;">BEGDOC</div><svg style="left:223px;top:18.5px" width="17" height="15" viewBox="0 0 17 15"><path d="M8.500 0l8 8h-5.300v7h-5.400v-7h-5.300z" fill="#2a2a2a"/></svg><div class="t" style="left:301.0px;top:17.2px;font-size:19px;line-height:19px;color:#333;letter-spacing:-0.839px;font-weight:bold;">BEGATT</div><div class="t" style="left:508.5px;top:17.2px;font-size:19px;line-height:19px;color:#333;letter-spacing:-0.172px;font-weight:bold;">Custodian</div><div class="t" style="left:712.5px;top:17.2px;font-size:19px;line-height:19px;color:#333;letter-spacing:-0.103px;font-weight:bold;">Custodian All</div><div class="t" style="left:917.0px;top:17.2px;font-size:19px;line-height:19px;color:#333;letter-spacing:-0.222px;font-weight:bold;">A</div><div class="a" style="left:0;top:48.6px;width:928px;height:47.8px;background:#e6e6e6;box-sizing:border-box;border-top:1px solid #d8d8de"></div><div class="a" style="left:0;top:59.1px;width:27px;height:29px;box-sizing:border-box;background:#fbfbfb;border:1.500px solid #d9d9df;border-left:none;border-radius:0 3px 3px 0"></div><svg style="left:45px;top:57.1px" width="32" height="33" viewBox="0 0 32 33"><rect width="32" height="33" fill="#b3201b"/><path d="M4.500 27.500 C9 25.500 13 20 15 13 C16.500 8 16 4.500 14.800 4.500 C13.500 4.500 13.300 8.500 15 13 C17 18 22 22.500 27.500 23 C29 23.200 29 21.200 27 21 C21 20.500 10 23 4.500 27.500 Z" fill="none" stroke="#fbe9e6" stroke-width="1.700" stroke-linejoin="round"/></svg><div class="t" style="left:100.0px;top:64.2px;font-size:19px;line-height:19px;color:#4a8ccb;letter-spacing:0.051px;text-decoration:underline;text-decoration-color:#3e8fe2;text-decoration-thickness:1.300px;text-underline-offset:1.600px;">000000003</div><div class="t" style="left:300.5px;top:64.2px;font-size:19px;line-height:19px;color:#3a3a3a;letter-spacing:0.051px;">000000003</div><div class="t" style="left:508.5px;top:64.2px;font-size:19px;line-height:19px;color:#3a3a3a;letter-spacing:-0.174px;">Executive Team</div><div class="t" style="left:917.0px;top:64.2px;font-size:19px;line-height:19px;color:#3a3a3a;letter-spacing:0.013px;">ip</div><div class="a" style="left:0;top:96.4px;width:909.5px;height:47.8px;background:#eeeeee;box-sizing:border-box;border-top:1px solid #d8d8de"></div><div class="a" style="left:0;top:106.9px;width:27px;height:29px;box-sizing:border-box;background:#fbfbfb;border:1.500px solid #d9d9df;border-left:none;border-radius:0 3px 3px 0"></div><svg style="left:45px;top:104.9px" width="32" height="33" viewBox="0 0 32 33"><rect width="32" height="33" fill="#b3201b"/><path d="M4.500 27.500 C9 25.500 13 20 15 13 C16.500 8 16 4.500 14.800 4.500 C13.500 4.500 13.300 8.500 15 13 C17 18 22 22.500 27.500 23 C29 23.200 29 21.200 27 21 C21 20.500 10 23 4.500 27.500 Z" fill="none" stroke="#fbe9e6" stroke-width="1.700" stroke-linejoin="round"/></svg><div class="t" style="left:100.0px;top:112.0px;font-size:19px;line-height:19px;color:#4a8ccb;letter-spacing:0.051px;text-decoration:underline;text-decoration-color:#3e8fe2;text-decoration-thickness:1.300px;text-underline-offset:1.600px;">000000004</div><div class="t" style="left:300.5px;top:112.0px;font-size:19px;line-height:19px;color:#3a3a3a;letter-spacing:0.051px;">000000004</div><div class="t" style="left:508.5px;top:112.0px;font-size:19px;line-height:19px;color:#3a3a3a;letter-spacing:-0.174px;">Executive Team</div><div class="a" style="left:0;top:144.2px;width:909.5px;height:47.8px;background:#e6e6e6;box-sizing:border-box;border-top:1px solid #d8d8de"></div><div class="a" style="left:0;top:154.7px;width:27px;height:29px;box-sizing:border-box;background:#fbfbfb;border:1.500px solid #d9d9df;border-left:none;border-radius:0 3px 3px 0"></div><svg style="left:45px;top:152.7px" width="32" height="33" viewBox="0 0 32 33"><rect width="32" height="33" fill="#b3201b"/><path d="M4.500 27.500 C9 25.500 13 20 15 13 C16.500 8 16 4.500 14.800 4.500 C13.500 4.500 13.300 8.500 15 13 C17 18 22 22.500 27.500 23 C29 23.200 29 21.200 27 21 C21 20.500 10 23 4.500 27.500 Z" fill="none" stroke="#fbe9e6" stroke-width="1.700" stroke-linejoin="round"/></svg><div class="t" style="left:100.0px;top:159.8px;font-size:19px;line-height:19px;color:#4a8ccb;letter-spacing:0.051px;text-decoration:underline;text-decoration-color:#3e8fe2;text-decoration-thickness:1.300px;text-underline-offset:1.600px;">000000005</div><div class="t" style="left:300.5px;top:159.8px;font-size:19px;line-height:19px;color:#3a3a3a;letter-spacing:0.051px;">000000005</div><div class="t" style="left:508.5px;top:159.8px;font-size:19px;line-height:19px;color:#3a3a3a;letter-spacing:-0.174px;">Executive Team</div><div class="a" style="left:0;top:192.0px;width:909.5px;height:47.8px;background:#eeeeee;box-sizing:border-box;border-top:1px solid #d8d8de"></div><div class="a" style="left:0;top:202.5px;width:27px;height:29px;box-sizing:border-box;background:#fbfbfb;border:1.500px solid #d9d9df;border-left:none;border-radius:0 3px 3px 0"></div><svg style="left:45px;top:200.5px" width="32" height="33" viewBox="0 0 32 33"><rect width="32" height="33" fill="#b3201b"/><path d="M4.500 27.500 C9 25.500 13 20 15 13 C16.500 8 16 4.500 14.800 4.500 C13.500 4.500 13.300 8.500 15 13 C17 18 22 22.500 27.500 23 C29 23.200 29 21.200 27 21 C21 20.500 10 23 4.500 27.500 Z" fill="none" stroke="#fbe9e6" stroke-width="1.700" stroke-linejoin="round"/></svg><div class="t" style="left:100.0px;top:207.6px;font-size:19px;line-height:19px;color:#4a8ccb;letter-spacing:0.051px;text-decoration:underline;text-decoration-color:#3e8fe2;text-decoration-thickness:1.300px;text-underline-offset:1.600px;">000000006</div><div class="t" style="left:300.5px;top:207.6px;font-size:19px;line-height:19px;color:#3a3a3a;letter-spacing:0.051px;">000000006</div><div class="t" style="left:508.5px;top:207.6px;font-size:19px;line-height:19px;color:#3a3a3a;letter-spacing:-0.174px;">Executive Team</div><div class="a" style="left:0;top:239.8px;width:909.5px;height:47.8px;background:#e6e6e6;box-sizing:border-box;border-top:1px solid #d8d8de"></div><div class="a" style="left:0;top:250.3px;width:27px;height:29px;box-sizing:border-box;background:#fbfbfb;border:1.500px solid #d9d9df;border-left:none;border-radius:0 3px 3px 0"></div><svg style="left:45px;top:248.3px" width="31" height="32" viewBox="0 0 31 32"><rect x="0.900" y="0.900" width="29.200" height="30.200" fill="#f1f0ff" stroke="#3a2fbe" stroke-width="1.800"/><rect x="3.600" y="3.800" width="23.800" height="20.800" fill="#3c2ce0"/><path d="M5.500 24.600l6.500-9.500 4.800 5.200 3-2.700 5.700 7z" fill="#fbfbff"/><circle cx="19.800" cy="9.300" r="1.500" fill="#e9e7ff"/></svg><div class="t" style="left:100.0px;top:255.4px;font-size:19px;line-height:19px;color:#4a8ccb;letter-spacing:0.051px;text-decoration:underline;text-decoration-color:#3e8fe2;text-decoration-thickness:1.300px;text-underline-offset:1.600px;">000000007</div><div class="t" style="left:300.5px;top:255.4px;font-size:19px;line-height:19px;color:#3a3a3a;letter-spacing:0.051px;">000000007</div><div class="t" style="left:508.5px;top:255.4px;font-size:19px;line-height:19px;color:#3a3a3a;letter-spacing:-0.174px;">Executive Team</div><div class="a" style="left:0;top:287.6px;width:909.5px;height:47.8px;background:#eeeeee;box-sizing:border-box;border-top:1px solid #d8d8de"></div><div class="a" style="left:0;top:298.1px;width:27px;height:29px;box-sizing:border-box;background:#fbfbfb;border:1.500px solid #d9d9df;border-left:none;border-radius:0 3px 3px 0"></div><svg style="left:45px;top:296.1px" width="32" height="33" viewBox="0 0 32 33"><rect width="32" height="33" fill="#b3201b"/><path d="M4.500 27.500 C9 25.500 13 20 15 13 C16.500 8 16 4.500 14.800 4.500 C13.500 4.500 13.300 8.500 15 13 C17 18 22 22.500 27.500 23 C29 23.200 29 21.200 27 21 C21 20.500 10 23 4.500 27.500 Z" fill="none" stroke="#fbe9e6" stroke-width="1.700" stroke-linejoin="round"/></svg><div class="t" style="left:100.0px;top:303.2px;font-size:19px;line-height:19px;color:#4a8ccb;letter-spacing:0.051px;text-decoration:underline;text-decoration-color:#3e8fe2;text-decoration-thickness:1.300px;text-underline-offset:1.600px;">000000008</div><div class="t" style="left:300.5px;top:303.2px;font-size:19px;line-height:19px;color:#3a3a3a;letter-spacing:0.051px;">000000008</div><div class="t" style="left:508.5px;top:303.2px;font-size:19px;line-height:19px;color:#3a3a3a;letter-spacing:-0.174px;">Executive Team</div><div class="a" style="left:0;top:335.4px;width:909.5px;height:47.8px;background:#e6e6e6;box-sizing:border-box;border-top:1px solid #d8d8de"></div><div class="a" style="left:0;top:345.9px;width:27px;height:29px;box-sizing:border-box;background:#fbfbfb;border:1.500px solid #d9d9df;border-left:none;border-radius:0 3px 3px 0"></div><svg style="left:45px;top:343.9px" width="32" height="33" viewBox="0 0 32 33"><rect width="32" height="33" fill="#b3201b"/><path d="M4.500 27.500 C9 25.500 13 20 15 13 C16.500 8 16 4.500 14.800 4.500 C13.500 4.500 13.300 8.500 15 13 C17 18 22 22.500 27.500 23 C29 23.200 29 21.200 27 21 C21 20.500 10 23 4.500 27.500 Z" fill="none" stroke="#fbe9e6" stroke-width="1.700" stroke-linejoin="round"/></svg><div class="t" style="left:100.0px;top:351.0px;font-size:19px;line-height:19px;color:#4a8ccb;letter-spacing:0.051px;text-decoration:underline;text-decoration-color:#3e8fe2;text-decoration-thickness:1.300px;text-underline-offset:1.600px;">000000009</div><div class="t" style="left:300.5px;top:351.0px;font-size:19px;line-height:19px;color:#3a3a3a;letter-spacing:0.051px;">000000009</div><div class="t" style="left:508.5px;top:351.0px;font-size:19px;line-height:19px;color:#3a3a3a;letter-spacing:-0.174px;">Executive Team</div><div class="a" style="left:0;top:383.2px;width:909.5px;height:47.8px;background:#eeeeee;box-sizing:border-box;border-top:1px solid #d8d8de"></div><div class="a" style="left:0;top:393.7px;width:27px;height:29px;box-sizing:border-box;background:#fbfbfb;border:1.500px solid #d9d9df;border-left:none;border-radius:0 3px 3px 0"></div><svg style="left:45px;top:391.7px" width="32" height="33" viewBox="0 0 32 33"><rect width="32" height="33" fill="#b3201b"/><path d="M4.500 27.500 C9 25.500 13 20 15 13 C16.500 8 16 4.500 14.800 4.500 C13.500 4.500 13.300 8.500 15 13 C17 18 22 22.500 27.500 23 C29 23.200 29 21.200 27 21 C21 20.500 10 23 4.500 27.500 Z" fill="none" stroke="#fbe9e6" stroke-width="1.700" stroke-linejoin="round"/></svg><div class="t" style="left:100.0px;top:398.8px;font-size:19px;line-height:19px;color:#4a8ccb;letter-spacing:0.051px;text-decoration:underline;text-decoration-color:#3e8fe2;text-decoration-thickness:1.300px;text-underline-offset:1.600px;">000000010</div><div class="t" style="left:300.5px;top:398.8px;font-size:19px;line-height:19px;color:#3a3a3a;letter-spacing:0.051px;">000000010</div><div class="t" style="left:508.5px;top:398.8px;font-size:19px;line-height:19px;color:#3a3a3a;letter-spacing:-0.174px;">Executive Team</div><div class="a" style="left:0;top:431.0px;width:909.5px;height:47.8px;background:#e6e6e6;box-sizing:border-box;border-top:1px solid #d8d8de"></div><div class="a" style="left:0;top:441.5px;width:27px;height:29px;box-sizing:border-box;background:#fbfbfb;border:1.500px solid #d9d9df;border-left:none;border-radius:0 3px 3px 0"></div><svg style="left:45px;top:439.5px" width="32" height="33" viewBox="0 0 32 33"><rect width="32" height="33" fill="#b3201b"/><path d="M4.500 27.500 C9 25.500 13 20 15 13 C16.500 8 16 4.500 14.800 4.500 C13.500 4.500 13.300 8.500 15 13 C17 18 22 22.500 27.500 23 C29 23.200 29 21.200 27 21 C21 20.500 10 23 4.500 27.500 Z" fill="none" stroke="#fbe9e6" stroke-width="1.700" stroke-linejoin="round"/></svg><div class="t" style="left:100.0px;top:446.6px;font-size:19px;line-height:19px;color:#4a8ccb;letter-spacing:0.227px;text-decoration:underline;text-decoration-color:#3e8fe2;text-decoration-thickness:1.300px;text-underline-offset:1.600px;">000000011</div><div class="t" style="left:300.5px;top:446.6px;font-size:19px;line-height:19px;color:#3a3a3a;letter-spacing:0.227px;">000000011</div><div class="t" style="left:508.5px;top:446.6px;font-size:19px;line-height:19px;color:#3a3a3a;letter-spacing:-0.174px;">Executive Team</div><div class="a" style="left:0;top:478.8px;width:909.5px;height:47.8px;background:#eeeeee;box-sizing:border-box;border-top:1px solid #d8d8de"></div><div class="a" style="left:0;top:489.3px;width:27px;height:29px;box-sizing:border-box;background:#fbfbfb;border:1.500px solid #d9d9df;border-left:none;border-radius:0 3px 3px 0"></div><svg style="left:45px;top:487.3px" width="32" height="33" viewBox="0 0 32 33"><rect width="32" height="33" fill="#b3201b"/><path d="M4.500 27.500 C9 25.500 13 20 15 13 C16.500 8 16 4.500 14.800 4.500 C13.500 4.500 13.300 8.500 15 13 C17 18 22 22.500 27.500 23 C29 23.200 29 21.200 27 21 C21 20.500 10 23 4.500 27.500 Z" fill="none" stroke="#fbe9e6" stroke-width="1.700" stroke-linejoin="round"/></svg><div class="t" style="left:100.0px;top:494.4px;font-size:19px;line-height:19px;color:#4a8ccb;letter-spacing:0.051px;text-decoration:underline;text-decoration-color:#3e8fe2;text-decoration-thickness:1.300px;text-underline-offset:1.600px;">000000012</div><div class="t" style="left:300.5px;top:494.4px;font-size:19px;line-height:19px;color:#3a3a3a;letter-spacing:0.051px;">000000012</div><div class="t" style="left:508.5px;top:494.4px;font-size:19px;line-height:19px;color:#3a3a3a;letter-spacing:-0.174px;">Executive Team</div><div class="a" style="left:0;top:526.6px;width:909.5px;height:47.8px;background:#e6e6e6;box-sizing:border-box;border-top:1px solid #d8d8de"></div><div class="a" style="left:0;top:537.1px;width:27px;height:29px;box-sizing:border-box;background:#fbfbfb;border:1.500px solid #d9d9df;border-left:none;border-radius:0 3px 3px 0"></div><svg style="left:45px;top:535.1px" width="31" height="32" viewBox="0 0 31 32"><rect x="0.900" y="0.900" width="29.200" height="30.200" fill="#f1f0ff" stroke="#3a2fbe" stroke-width="1.800"/><rect x="3.600" y="3.800" width="23.800" height="20.800" fill="#3c2ce0"/><path d="M5.500 24.600l6.500-9.500 4.800 5.200 3-2.700 5.700 7z" fill="#fbfbff"/><circle cx="19.800" cy="9.300" r="1.500" fill="#e9e7ff"/></svg><div class="t" style="left:100.0px;top:542.2px;font-size:19px;line-height:19px;color:#4a8ccb;letter-spacing:0.051px;text-decoration:underline;text-decoration-color:#3e8fe2;text-decoration-thickness:1.300px;text-underline-offset:1.600px;">000000013</div><div class="t" style="left:300.5px;top:542.2px;font-size:19px;line-height:19px;color:#3a3a3a;letter-spacing:0.051px;">000000013</div><div class="t" style="left:508.5px;top:542.2px;font-size:19px;line-height:19px;color:#3a3a3a;letter-spacing:-0.174px;">Executive Team</div><div class="a" style="left:0;top:574.4px;width:909.5px;height:47.8px;background:#eeeeee;box-sizing:border-box;border-top:1px solid #d8d8de"></div><div class="a" style="left:0;top:584.9px;width:27px;height:29px;box-sizing:border-box;background:#fbfbfb;border:1.500px solid #d9d9df;border-left:none;border-radius:0 3px 3px 0"></div><svg style="left:45px;top:582.9px" width="32" height="33" viewBox="0 0 32 33"><rect width="32" height="33" fill="#b3201b"/><path d="M4.500 27.500 C9 25.500 13 20 15 13 C16.500 8 16 4.500 14.800 4.500 C13.500 4.500 13.300 8.500 15 13 C17 18 22 22.500 27.500 23 C29 23.200 29 21.200 27 21 C21 20.500 10 23 4.500 27.500 Z" fill="none" stroke="#fbe9e6" stroke-width="1.700" stroke-linejoin="round"/></svg><div class="t" style="left:100.0px;top:590.0px;font-size:19px;line-height:19px;color:#4a8ccb;letter-spacing:0.051px;text-decoration:underline;text-decoration-color:#3e8fe2;text-decoration-thickness:1.300px;text-underline-offset:1.600px;">000000014</div><div class="t" style="left:300.5px;top:590.0px;font-size:19px;line-height:19px;color:#3a3a3a;letter-spacing:0.051px;">000000014</div><div class="t" style="left:508.5px;top:590.0px;font-size:19px;line-height:19px;color:#3a3a3a;letter-spacing:-0.174px;">Executive Team</div><div class="a" style="left:0;top:622.2px;width:909.5px;height:47.8px;background:#e6e6e6;box-sizing:border-box;border-top:1px solid #d8d8de"></div><div class="a" style="left:0;top:632.7px;width:27px;height:29px;box-sizing:border-box;background:#fbfbfb;border:1.500px solid #d9d9df;border-left:none;border-radius:0 3px 3px 0"></div><svg style="left:45px;top:630.7px" width="32" height="33" viewBox="0 0 32 33"><rect width="32" height="33" fill="#b3201b"/><path d="M4.500 27.500 C9 25.500 13 20 15 13 C16.500 8 16 4.500 14.800 4.500 C13.500 4.500 13.300 8.500 15 13 C17 18 22 22.500 27.500 23 C29 23.200 29 21.200 27 21 C21 20.500 10 23 4.500 27.500 Z" fill="none" stroke="#fbe9e6" stroke-width="1.700" stroke-linejoin="round"/></svg><div class="t" style="left:100.0px;top:637.8px;font-size:19px;line-height:19px;color:#4a8ccb;letter-spacing:0.051px;text-decoration:underline;text-decoration-color:#3e8fe2;text-decoration-thickness:1.300px;text-underline-offset:1.600px;">000000015</div><div class="t" style="left:300.5px;top:637.8px;font-size:19px;line-height:19px;color:#3a3a3a;letter-spacing:0.051px;">000000015</div><div class="t" style="left:508.5px;top:637.8px;font-size:19px;line-height:19px;color:#3a3a3a;letter-spacing:-0.174px;">Executive Team</div><div class="a" style="left:33.5px;top:48.60000000000002px;width:1px;height:600px;background:#d6d6dc"></div><div class="a" style="left:88.5px;top:48.60000000000002px;width:1px;height:600px;background:#d6d6dc"></div><div class="a" style="left:292.5px;top:48.60000000000002px;width:1.6px;height:600px;background:#9a9a9a"></div><div class="a" style="left:496.5px;top:48.60000000000002px;width:1px;height:600px;background:#d2d2da"></div><div class="a" style="left:701px;top:48.60000000000002px;width:1px;height:600px;background:#d2d2da"></div><div class="a" style="left:906px;top:48.60000000000002px;width:1px;height:600px;background:#d2d2da"></div><div class="a" style="left:909.5px;top:96.5px;width:19px;height:540px;background:#f6f6f5"></div><div class="a" style="left:911.5px;top:108px;width:12px;height:25px;border-radius:6px;background:#a9a9ad"></div><div class="a" style="left:0;top:622px;width:910px;height:13px;background:#dfdfe3"></div></div><div class="a" style="left:1995.500px;top:1096px;width:181px;height:55px;border-radius:28px;background:#ea720c;box-shadow:0 4px 7px rgba(0,0,0,.35)"></div><svg style="left:2009px;top:1113px" width="24" height="24" viewBox="0 0 24 24"><path fill="#fff" d="M3 17.250V21h3.750L17.810 9.940l-3.750-3.750L3 17.250zM20.710 7.040a.996.996 0 0 0 0-1.410l-2.340-2.340a.996.996 0 0 0-1.410 0l-1.830 1.830 3.750 3.750 1.830-1.830z"/></svg><div class="t" style="left:2047.5px;top:1113.7px;font-size:20px;line-height:20px;color:#fff3e6;letter-spacing:-0.301px;-webkit-text-stroke:0.6px #fff3e6;">CUSTOMIZE</div><div class="t" style="left:1225.0px;top:1316.5px;font-size:18px;line-height:18px;color:#333;letter-spacing:-0.068px;">Custodian</div><svg style="left:1316.3px;top:1322.5px" width="15" height="8" viewBox="0 0 15 8"><path d="M0 0 H15 L7.5 8 Z" fill="#222"/></svg><svg style="left:2096px;top:787px" width="18" height="28" viewBox="0 0 18 28"><path d="M2 2.500V18.800L5.900 15.300L9.300 23.300L12.200 22.100L8.800 14.200H13.800Z" fill="#000" stroke="#fff" stroke-width="1.300" stroke-linejoin="round"/></svg><div class="a" style="left:58px;top:1342.500px;width:2160px;height:1.500px;background:#3a3a3a"></div><div class="a" style="left:682px;top:1030px;width:913.500px;height:146px;border-radius:21px;overflow:hidden;background:#9b989b"><div class="a" style="left:0;top:0;width:100%;height:100%;background:linear-gradient(90deg,#8c9995 0,#949b99 8%,#9a9a9a 18%,#9c999c 40%,#a09a9f 62%,#9e989d 80%,#9b979b 100%)"></div><div class="a" style="left:-60px;top:-70px;width:420px;height:190px;background:radial-gradient(ellipse at 35% 35%,rgba(110,150,140,.55) 0,rgba(120,150,142,.25) 45%,rgba(140,150,148,0) 75%)"></div><div class="a" style="left:430px;top:-40px;width:330px;height:150px;background:radial-gradient(ellipse at 50% 40%,rgba(170,150,160,.35) 0,rgba(165,152,160,0) 70%)"></div></div><div class="t" style="left:707.0px;top:1129.8px;font-size:24px;line-height:24px;color:#fff;letter-spacing:1.112px;">00:00</div><div class="t" style="left:1505.0px;top:1129.8px;font-size:24px;line-height:24px;color:#fff;letter-spacing:1.362px;">00:35</div><div class="a" style="left:812px;top:1139px;width:663px;height:6.500px;border-radius:3px;background:#b4aeb3"></div><div class="a" style="left:806px;top:1127.500px;width:6.500px;height:31px;border-radius:3px;background:#fff"></div><svg style="left:0;top:0" width="2270" height="1344" viewBox="0 0 2270 1344"><g fill="#fff" stroke="#fff" stroke-linejoin="round">
<path d="M1065 1065.500V1086L1046 1075.700Z" stroke-width="3"/><path d="M1085 1065.500V1086L1066 1075.700Z" stroke-width="3"/>
<path d="M1120 1052.500V1101L1163 1076.800Z" stroke-width="6"/>
<path d="M1195 1065.500V1086L1214 1075.700Z" stroke-width="3"/><path d="M1215 1065.500V1086L1234 1075.700Z" stroke-width="3"/>
</g>
<g fill="none" stroke="#fff" stroke-width="2.200" stroke-linecap="round" stroke-linejoin="round">
<path d="M1379.500 1069.500H1373V1090.300H1396V1069.500H1389.500"/><path d="M1384.500 1082V1059.500M1378.500 1065L1384.500 1059L1390.500 1065"/>
<path d="M1458 1083.500H1451V1063H1481V1083.500H1474"/>
<path d="M1543 1080H1534.300V1062.400H1563.700V1068"/><path d="M1540 1067l6.500 6.500m0-5v5h-5"/>
</g>
<path d="M1466 1077.500L1477.500 1091H1454.500Z" fill="#fff"/>
<rect x="1548" y="1073" width="23.500" height="18.500" rx="3.500" fill="#fff"/>
</svg>
</div>
</body></html>
